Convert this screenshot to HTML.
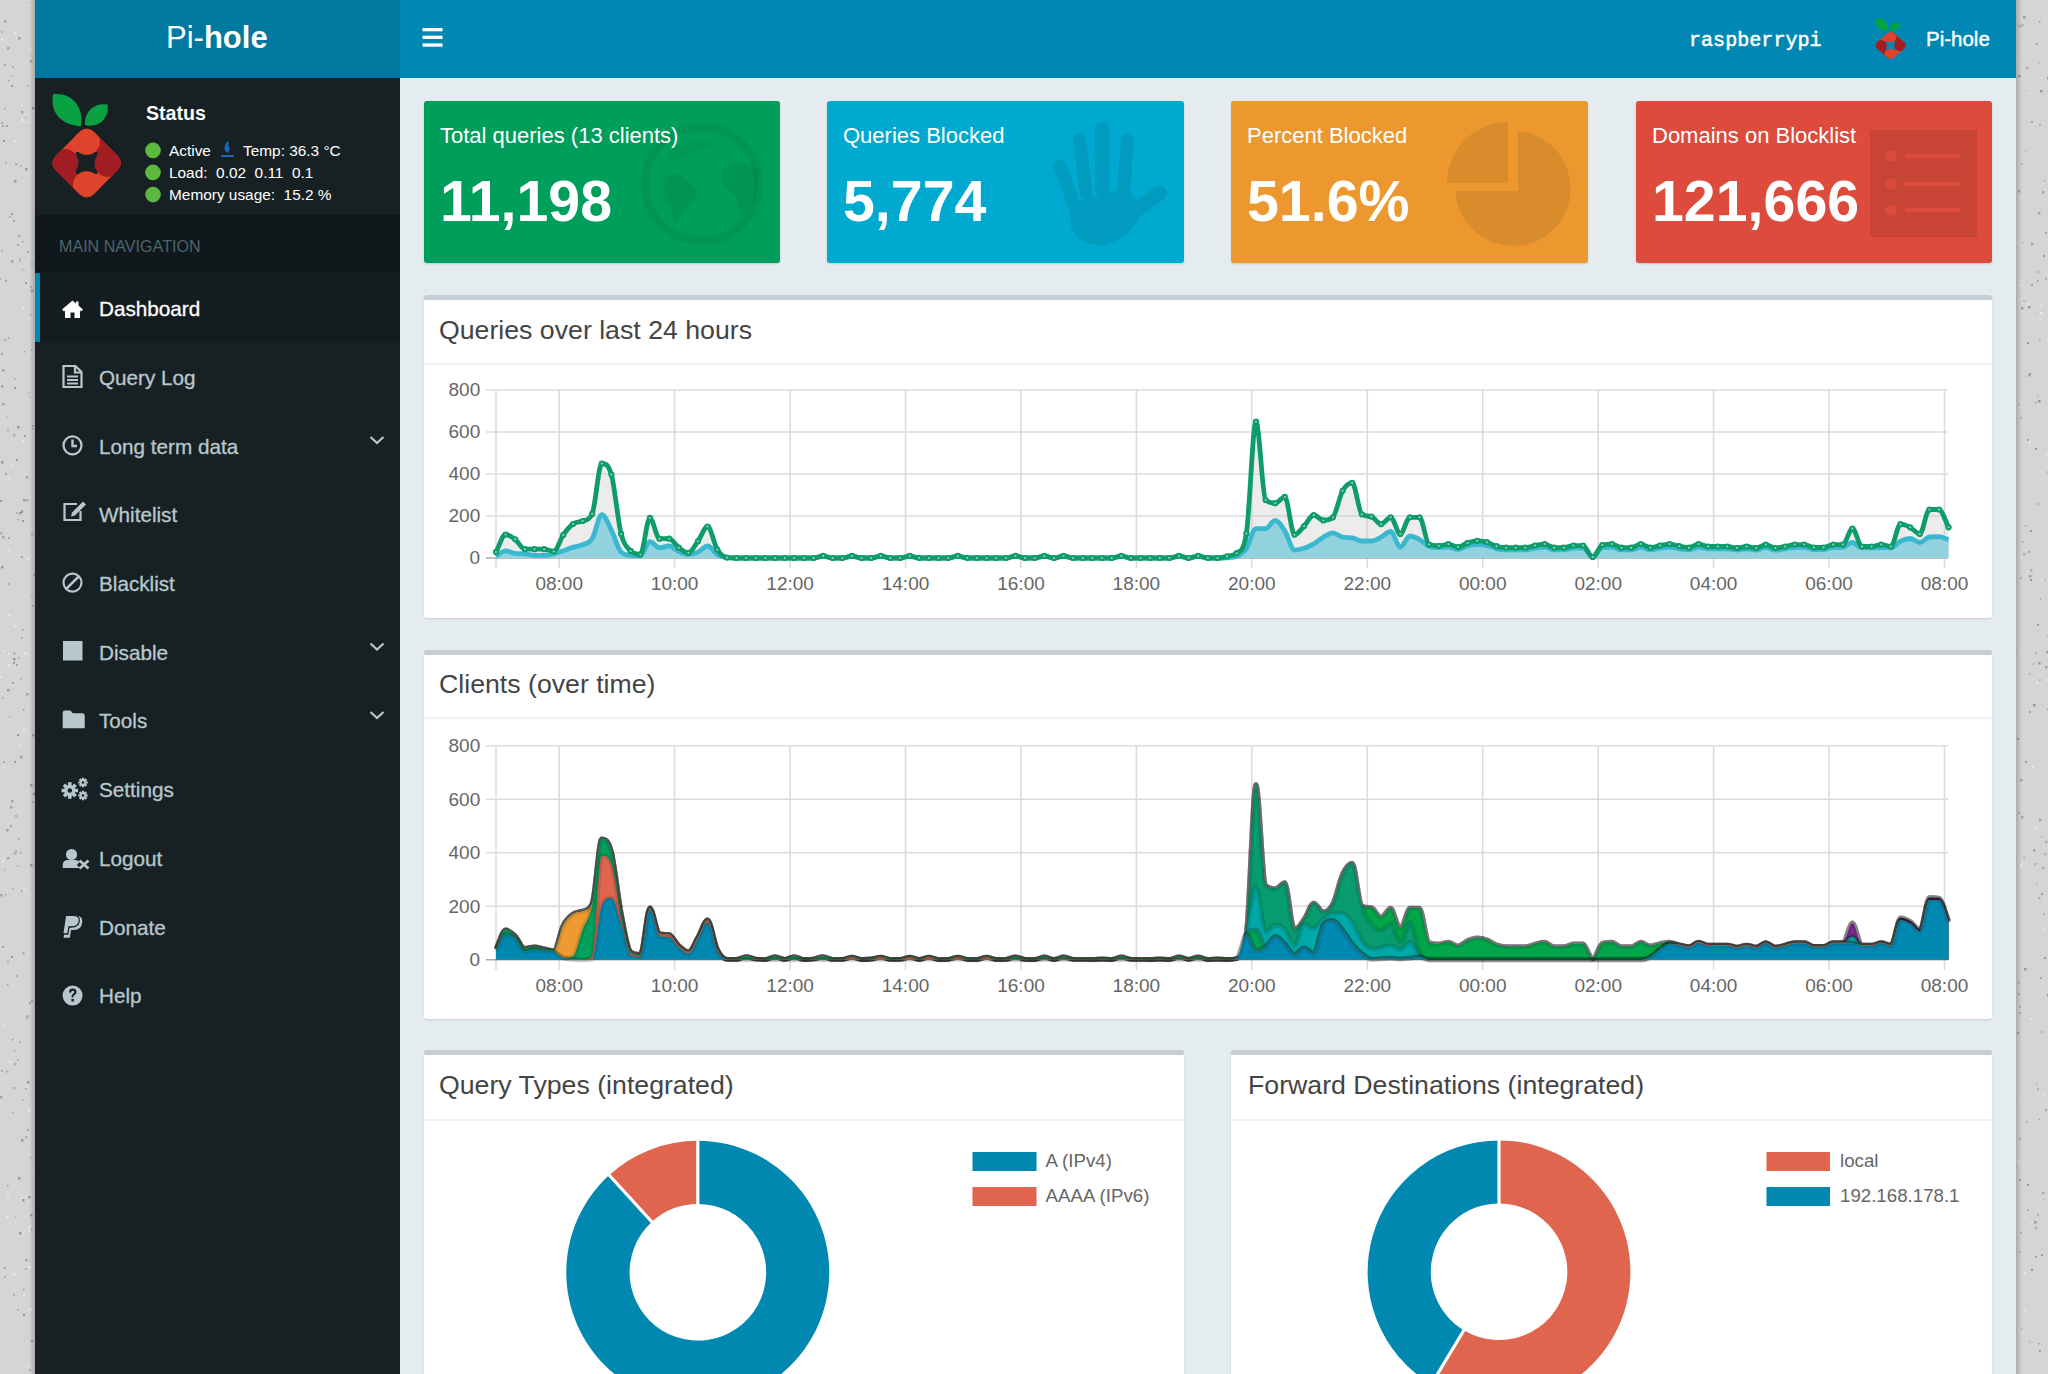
<!DOCTYPE html>
<html><head><meta charset="utf-8">
<style>
html,body{margin:0;padding:0;}
body{width:2048px;height:1374px;overflow:hidden;position:relative;background:#d5d6d4;font-family:"Liberation Sans",sans-serif;}
.a{position:absolute;}
.t{position:absolute;line-height:1;white-space:nowrap;}
#logo{left:35px;top:0;width:365px;height:78px;background:#00789f;}
#nav{left:400px;top:0;width:1616px;height:78px;background:#0087b3;}
#side{left:35px;top:78px;width:365px;height:1296px;background:#172123;}
#content{left:400px;top:78px;width:1616px;height:1296px;background:#e5ecf0;}
.navhdr{left:35px;top:215px;width:365px;height:58px;background:#10181b;}
.active{left:35px;top:273px;width:365px;height:69px;background:#141c1f;}
.activebar{left:35px;top:273px;width:5px;height:69px;background:#0088b4;}
.mi{font-size:20.7px;color:#b8c7ce;left:99px;-webkit-text-stroke:0.3px #b8c7ce;}
.sbox{position:absolute;top:101px;width:356px;height:162px;border-radius:3px;box-shadow:0 1px 2px rgba(0,0,0,0.15);overflow:hidden;}
.stitle{font-size:22px;color:#fff;left:16px;top:23.5px;}
.snum{font-size:57.3px;color:#fff;font-weight:bold;left:16px;top:71.5px;}
.box{position:absolute;background:#fff;border-top:5px solid #c6cdd3;border-radius:3px;box-shadow:0 1px 2px rgba(0,0,0,0.12);}
.btitle{font-size:26.7px;color:#444;}
.bline{position:absolute;height:2px;background:#f1f3f4;}
.ax{font-size:19px;color:#666;}
.leg{font-size:18.7px;color:#666;}
</style></head><body>
<!-- texture -->
<svg class="a" style="left:0;top:0" width="2048" height="1374">
<g><rect x="5" y="894" width="1.5" height="1.5" fill="#a3a5a3"/><rect x="2" y="697" width="1.5" height="1.5" fill="#a3a5a3"/><rect x="2" y="125" width="2.0" height="2.0" fill="#a3a5a3"/><rect x="2021" y="307" width="2.5" height="2.5" fill="#a3a5a3"/><rect x="2029" y="1341" width="1.5" height="1.5" fill="#b0b2b0"/><rect x="5" y="162" width="2.0" height="2.0" fill="#b0b2b0"/><rect x="19" y="258" width="1.5" height="1.5" fill="#a3a5a3"/><rect x="2036" y="682" width="2.5" height="2.5" fill="#e4e5e4"/><rect x="2031" y="1269" width="2.0" height="2.0" fill="#9a9c9a"/><rect x="6" y="1071" width="1.5" height="1.5" fill="#9a9c9a"/><rect x="29" y="1002" width="2.0" height="2.0" fill="#a3a5a3"/><rect x="14" y="1040" width="1.5" height="1.5" fill="#e4e5e4"/><rect x="32" y="107" width="2.5" height="2.5" fill="#9a9c9a"/><rect x="12" y="682" width="2.0" height="2.0" fill="#a3a5a3"/><rect x="2046" y="651" width="2.5" height="2.5" fill="#a3a5a3"/><rect x="23" y="889" width="2.5" height="2.5" fill="#e4e5e4"/><rect x="13" y="919" width="1.5" height="1.5" fill="#e4e5e4"/><rect x="20" y="678" width="1.5" height="1.5" fill="#9a9c9a"/><rect x="8" y="537" width="2.0" height="2.0" fill="#a3a5a3"/><rect x="13" y="382" width="1.5" height="1.5" fill="#e4e5e4"/><rect x="2026" y="571" width="2.0" height="2.0" fill="#e4e5e4"/><rect x="2022" y="242" width="1.5" height="1.5" fill="#b0b2b0"/><rect x="27" y="251" width="2.0" height="2.0" fill="#a3a5a3"/><rect x="18" y="838" width="2.0" height="2.0" fill="#b0b2b0"/><rect x="2033" y="849" width="2.5" height="2.5" fill="#a3a5a3"/><rect x="29" y="1308" width="2.5" height="2.5" fill="#e4e5e4"/><rect x="13" y="662" width="2.0" height="2.0" fill="#a3a5a3"/><rect x="32" y="605" width="1.5" height="1.5" fill="#9a9c9a"/><rect x="2020" y="779" width="2.5" height="2.5" fill="#a3a5a3"/><rect x="2036" y="97" width="1.5" height="1.5" fill="#e4e5e4"/><rect x="8" y="477" width="2.0" height="2.0" fill="#e4e5e4"/><rect x="28" y="1365" width="2.0" height="2.0" fill="#e4e5e4"/><rect x="3" y="140" width="2.0" height="2.0" fill="#9a9c9a"/><rect x="23" y="709" width="1.5" height="1.5" fill="#9a9c9a"/><rect x="18" y="37" width="2.5" height="2.5" fill="#9a9c9a"/><rect x="2044" y="957" width="2.0" height="2.0" fill="#9a9c9a"/><rect x="2028" y="306" width="2.5" height="2.5" fill="#9a9c9a"/><rect x="2036" y="1083" width="1.5" height="1.5" fill="#b0b2b0"/><rect x="2040" y="312" width="2.5" height="2.5" fill="#e4e5e4"/><rect x="1" y="38" width="2.0" height="2.0" fill="#e4e5e4"/><rect x="23" y="1314" width="2.0" height="2.0" fill="#9a9c9a"/><rect x="2028" y="303" width="1.5" height="1.5" fill="#e4e5e4"/><rect x="7" y="857" width="2.5" height="2.5" fill="#a3a5a3"/><rect x="22" y="1099" width="1.5" height="1.5" fill="#a3a5a3"/><rect x="2041" y="1031" width="2.0" height="2.0" fill="#b0b2b0"/><rect x="21" y="119" width="2.5" height="2.5" fill="#e4e5e4"/><rect x="25" y="117" width="1.5" height="1.5" fill="#b0b2b0"/><rect x="2018" y="812" width="2.0" height="2.0" fill="#b0b2b0"/><rect x="2035" y="652" width="2.0" height="2.0" fill="#b0b2b0"/><rect x="4" y="20" width="2.5" height="2.5" fill="#a3a5a3"/><rect x="31" y="596" width="1.5" height="1.5" fill="#b0b2b0"/><rect x="7" y="689" width="2.5" height="2.5" fill="#9a9c9a"/><rect x="14" y="180" width="2.5" height="2.5" fill="#9a9c9a"/><rect x="2038" y="1120" width="2.5" height="2.5" fill="#e4e5e4"/><rect x="2044" y="180" width="1.5" height="1.5" fill="#a3a5a3"/><rect x="2041" y="836" width="1.5" height="1.5" fill="#b0b2b0"/><rect x="20" y="165" width="1.5" height="1.5" fill="#9a9c9a"/><rect x="2033" y="663" width="1.5" height="1.5" fill="#a3a5a3"/><rect x="9" y="1061" width="2.5" height="2.5" fill="#e4e5e4"/><rect x="2041" y="1254" width="2.0" height="2.0" fill="#9a9c9a"/><rect x="2033" y="704" width="2.5" height="2.5" fill="#9a9c9a"/><rect x="18" y="657" width="1.5" height="1.5" fill="#9a9c9a"/><rect x="2045" y="278" width="2.0" height="2.0" fill="#b0b2b0"/><rect x="13" y="434" width="2.5" height="2.5" fill="#b0b2b0"/><rect x="7" y="416" width="1.5" height="1.5" fill="#b0b2b0"/><rect x="2037" y="503" width="2.0" height="2.0" fill="#b0b2b0"/><rect x="2024" y="1309" width="2.0" height="2.0" fill="#e4e5e4"/><rect x="22" y="307" width="2.5" height="2.5" fill="#e4e5e4"/><rect x="2030" y="579" width="2.0" height="2.0" fill="#9a9c9a"/><rect x="12" y="464" width="2.0" height="2.0" fill="#e4e5e4"/><rect x="2029" y="711" width="2.0" height="2.0" fill="#a3a5a3"/><rect x="30" y="314" width="1.5" height="1.5" fill="#a3a5a3"/><rect x="1" y="1070" width="2.0" height="2.0" fill="#b0b2b0"/><rect x="2043" y="929" width="2.0" height="2.0" fill="#e4e5e4"/><rect x="30" y="784" width="2.5" height="2.5" fill="#9a9c9a"/><rect x="2" y="946" width="2.0" height="2.0" fill="#a3a5a3"/><rect x="1" y="122" width="2.0" height="2.0" fill="#a3a5a3"/><rect x="2024" y="363" width="1.5" height="1.5" fill="#e4e5e4"/><rect x="33" y="574" width="2.0" height="2.0" fill="#b0b2b0"/><rect x="23" y="1289" width="1.5" height="1.5" fill="#9a9c9a"/><rect x="7" y="429" width="2.0" height="2.0" fill="#b0b2b0"/><rect x="17" y="244" width="2.0" height="2.0" fill="#a3a5a3"/><rect x="2018" y="25" width="2.5" height="2.5" fill="#b0b2b0"/><rect x="8" y="614" width="2.5" height="2.5" fill="#e4e5e4"/><rect x="2034" y="1221" width="2.5" height="2.5" fill="#9a9c9a"/><rect x="2047" y="471" width="2.5" height="2.5" fill="#b0b2b0"/><rect x="11" y="75" width="1.5" height="1.5" fill="#a3a5a3"/><rect x="24" y="351" width="1.5" height="1.5" fill="#a3a5a3"/><rect x="28" y="1196" width="2.5" height="2.5" fill="#9a9c9a"/><rect x="2038" y="62" width="1.5" height="1.5" fill="#b0b2b0"/><rect x="0" y="500" width="2.0" height="2.0" fill="#9a9c9a"/><rect x="32" y="425" width="2.0" height="2.0" fill="#b0b2b0"/><rect x="13" y="652" width="2.5" height="2.5" fill="#b0b2b0"/><rect x="26" y="125" width="1.5" height="1.5" fill="#b0b2b0"/><rect x="1" y="31" width="2.0" height="2.0" fill="#b0b2b0"/><rect x="32" y="1172" width="1.5" height="1.5" fill="#e4e5e4"/><rect x="2039" y="679" width="2.0" height="2.0" fill="#b0b2b0"/><rect x="28" y="1226" width="2.5" height="2.5" fill="#e4e5e4"/><rect x="2042" y="191" width="2.5" height="2.5" fill="#a3a5a3"/><rect x="2035" y="1227" width="2.5" height="2.5" fill="#b0b2b0"/><rect x="1" y="875" width="1.5" height="1.5" fill="#e4e5e4"/><rect x="2034" y="863" width="2.5" height="2.5" fill="#b0b2b0"/><rect x="0" y="1096" width="2.5" height="2.5" fill="#a3a5a3"/><rect x="2019" y="1012" width="2.0" height="2.0" fill="#a3a5a3"/><rect x="2024" y="1039" width="1.5" height="1.5" fill="#e4e5e4"/><rect x="13" y="658" width="2.5" height="2.5" fill="#9a9c9a"/><rect x="2036" y="883" width="1.5" height="1.5" fill="#b0b2b0"/><rect x="22" y="952" width="2.5" height="2.5" fill="#b0b2b0"/><rect x="2" y="369" width="2.5" height="2.5" fill="#a3a5a3"/><rect x="2038" y="400" width="2.5" height="2.5" fill="#9a9c9a"/><rect x="15" y="163" width="2.5" height="2.5" fill="#b0b2b0"/><rect x="3" y="650" width="2.0" height="2.0" fill="#e4e5e4"/><rect x="17" y="1367" width="2.0" height="2.0" fill="#e4e5e4"/><rect x="31" y="290" width="2.5" height="2.5" fill="#a3a5a3"/><rect x="17" y="1309" width="1.5" height="1.5" fill="#9a9c9a"/><rect x="2039" y="318" width="2.0" height="2.0" fill="#e4e5e4"/><rect x="0" y="676" width="2.0" height="2.0" fill="#e4e5e4"/><rect x="5" y="473" width="2.0" height="2.0" fill="#a3a5a3"/><rect x="2017" y="1032" width="2.0" height="2.0" fill="#a3a5a3"/><rect x="2023" y="16" width="2.5" height="2.5" fill="#9a9c9a"/><rect x="2" y="536" width="2.5" height="2.5" fill="#a3a5a3"/><rect x="14" y="378" width="1.5" height="1.5" fill="#9a9c9a"/><rect x="28" y="392" width="1.5" height="1.5" fill="#b0b2b0"/><rect x="2031" y="434" width="2.0" height="2.0" fill="#e4e5e4"/><rect x="2042" y="867" width="2.5" height="2.5" fill="#b0b2b0"/><rect x="2019" y="1006" width="2.0" height="2.0" fill="#b0b2b0"/><rect x="2026" y="67" width="2.5" height="2.5" fill="#b0b2b0"/><rect x="14" y="387" width="2.0" height="2.0" fill="#9a9c9a"/><rect x="8" y="664" width="2.5" height="2.5" fill="#e4e5e4"/><rect x="21" y="103" width="2.5" height="2.5" fill="#e4e5e4"/><rect x="2031" y="457" width="2.0" height="2.0" fill="#e4e5e4"/><rect x="6" y="125" width="2.0" height="2.0" fill="#a3a5a3"/><rect x="12" y="1112" width="1.5" height="1.5" fill="#a3a5a3"/><rect x="2030" y="569" width="2.5" height="2.5" fill="#b0b2b0"/><rect x="11" y="85" width="2.0" height="2.0" fill="#9a9c9a"/><rect x="17" y="865" width="1.5" height="1.5" fill="#a3a5a3"/><rect x="8" y="549" width="2.0" height="2.0" fill="#e4e5e4"/><rect x="2043" y="1199" width="1.5" height="1.5" fill="#b0b2b0"/><rect x="23" y="1231" width="2.0" height="2.0" fill="#e4e5e4"/><rect x="13" y="1273" width="2.5" height="2.5" fill="#e4e5e4"/><rect x="2025" y="150" width="1.5" height="1.5" fill="#b0b2b0"/><rect x="23" y="1294" width="2.5" height="2.5" fill="#e4e5e4"/><rect x="26" y="2" width="1.5" height="1.5" fill="#b0b2b0"/><rect x="2018" y="982" width="1.5" height="1.5" fill="#9a9c9a"/><rect x="14" y="1050" width="1.5" height="1.5" fill="#a3a5a3"/><rect x="31" y="263" width="2.0" height="2.0" fill="#b0b2b0"/><rect x="2017" y="738" width="2.0" height="2.0" fill="#9a9c9a"/><rect x="2037" y="1214" width="2.0" height="2.0" fill="#b0b2b0"/><rect x="1" y="566" width="2.5" height="2.5" fill="#9a9c9a"/><rect x="6" y="1216" width="2.5" height="2.5" fill="#e4e5e4"/><rect x="8" y="583" width="2.0" height="2.0" fill="#b0b2b0"/><rect x="23" y="987" width="2.0" height="2.0" fill="#e4e5e4"/><rect x="26" y="1016" width="2.5" height="2.5" fill="#a3a5a3"/><rect x="32" y="428" width="1.5" height="1.5" fill="#b0b2b0"/><rect x="9" y="1222" width="1.5" height="1.5" fill="#e4e5e4"/><rect x="2045" y="666" width="2.5" height="2.5" fill="#a3a5a3"/><rect x="2022" y="541" width="1.5" height="1.5" fill="#a3a5a3"/><rect x="2021" y="71" width="1.5" height="1.5" fill="#b0b2b0"/><rect x="30" y="1214" width="2.5" height="2.5" fill="#a3a5a3"/><rect x="2046" y="452" width="1.5" height="1.5" fill="#e4e5e4"/><rect x="22" y="520" width="2.0" height="2.0" fill="#9a9c9a"/><rect x="4" y="108" width="1.5" height="1.5" fill="#9a9c9a"/><rect x="29" y="771" width="1.5" height="1.5" fill="#e4e5e4"/><rect x="27" y="1129" width="2.0" height="2.0" fill="#a3a5a3"/><rect x="16" y="512" width="2.0" height="2.0" fill="#b0b2b0"/><rect x="24" y="652" width="2.5" height="2.5" fill="#e4e5e4"/><rect x="21" y="556" width="2.0" height="2.0" fill="#a3a5a3"/><rect x="27" y="85" width="1.5" height="1.5" fill="#a3a5a3"/><rect x="2028" y="374" width="2.5" height="2.5" fill="#a3a5a3"/><rect x="24" y="435" width="2.0" height="2.0" fill="#9a9c9a"/><rect x="25" y="1259" width="2.5" height="2.5" fill="#a3a5a3"/><rect x="8" y="653" width="2.0" height="2.0" fill="#e4e5e4"/><rect x="2045" y="1120" width="1.5" height="1.5" fill="#e4e5e4"/><rect x="26" y="1015" width="2.5" height="2.5" fill="#b0b2b0"/><rect x="2027" y="439" width="2.0" height="2.0" fill="#a3a5a3"/><rect x="13" y="220" width="2.0" height="2.0" fill="#a3a5a3"/><rect x="2032" y="748" width="1.5" height="1.5" fill="#e4e5e4"/><rect x="2048" y="364" width="1.5" height="1.5" fill="#b0b2b0"/><rect x="16" y="975" width="2.0" height="2.0" fill="#b0b2b0"/><rect x="14" y="852" width="2.5" height="2.5" fill="#b0b2b0"/><rect x="2043" y="913" width="1.5" height="1.5" fill="#9a9c9a"/><rect x="19" y="512" width="2.5" height="2.5" fill="#9a9c9a"/><rect x="8" y="337" width="1.5" height="1.5" fill="#9a9c9a"/><rect x="2035" y="448" width="2.0" height="2.0" fill="#9a9c9a"/><rect x="2033" y="318" width="1.5" height="1.5" fill="#e4e5e4"/><rect x="2020" y="652" width="1.5" height="1.5" fill="#e4e5e4"/><rect x="2018" y="404" width="1.5" height="1.5" fill="#a3a5a3"/><rect x="32" y="801" width="1.5" height="1.5" fill="#9a9c9a"/><rect x="6" y="829" width="2.5" height="2.5" fill="#a3a5a3"/><rect x="20" y="852" width="1.5" height="1.5" fill="#a3a5a3"/><rect x="5" y="280" width="2.0" height="2.0" fill="#a3a5a3"/><rect x="2037" y="280" width="1.5" height="1.5" fill="#9a9c9a"/><rect x="12" y="853" width="1.5" height="1.5" fill="#b0b2b0"/><rect x="16" y="664" width="2.0" height="2.0" fill="#a3a5a3"/><rect x="2038" y="212" width="2.5" height="2.5" fill="#a3a5a3"/><rect x="2029" y="373" width="2.0" height="2.0" fill="#9a9c9a"/><rect x="2" y="1024" width="2.0" height="2.0" fill="#e4e5e4"/><rect x="29" y="1369" width="2.0" height="2.0" fill="#b0b2b0"/><rect x="13" y="1294" width="2.0" height="2.0" fill="#b0b2b0"/><rect x="27" y="558" width="2.0" height="2.0" fill="#e4e5e4"/><rect x="2021" y="71" width="1.5" height="1.5" fill="#e4e5e4"/><rect x="21" y="510" width="2.5" height="2.5" fill="#b0b2b0"/><rect x="9" y="716" width="1.5" height="1.5" fill="#a3a5a3"/><rect x="25" y="1088" width="1.5" height="1.5" fill="#9a9c9a"/><rect x="31" y="1340" width="2.0" height="2.0" fill="#9a9c9a"/><rect x="31" y="533" width="2.5" height="2.5" fill="#b0b2b0"/><rect x="2044" y="853" width="2.5" height="2.5" fill="#b0b2b0"/><rect x="2023" y="300" width="2.0" height="2.0" fill="#b0b2b0"/><rect x="4" y="339" width="2.5" height="2.5" fill="#b0b2b0"/><rect x="19" y="1041" width="1.5" height="1.5" fill="#9a9c9a"/><rect x="20" y="756" width="2.5" height="2.5" fill="#9a9c9a"/><rect x="2027" y="342" width="2.0" height="2.0" fill="#9a9c9a"/><rect x="14" y="32" width="2.5" height="2.5" fill="#e4e5e4"/><rect x="15" y="850" width="2.0" height="2.0" fill="#b0b2b0"/><rect x="2029" y="92" width="2.0" height="2.0" fill="#e4e5e4"/><rect x="26" y="693" width="2.5" height="2.5" fill="#a3a5a3"/><rect x="4" y="1267" width="2.0" height="2.0" fill="#a3a5a3"/><rect x="17" y="519" width="1.5" height="1.5" fill="#a3a5a3"/><rect x="2048" y="1006" width="1.5" height="1.5" fill="#b0b2b0"/><rect x="29" y="396" width="1.5" height="1.5" fill="#b0b2b0"/><rect x="12" y="1039" width="1.5" height="1.5" fill="#9a9c9a"/><rect x="2026" y="1121" width="1.5" height="1.5" fill="#9a9c9a"/><rect x="30" y="286" width="2.0" height="2.0" fill="#b0b2b0"/><rect x="1" y="250" width="1.5" height="1.5" fill="#9a9c9a"/><rect x="2045" y="232" width="2.0" height="2.0" fill="#a3a5a3"/><rect x="2019" y="1179" width="2.0" height="2.0" fill="#a3a5a3"/><rect x="18" y="1177" width="2.5" height="2.5" fill="#9a9c9a"/><rect x="33" y="793" width="2.0" height="2.0" fill="#9a9c9a"/><rect x="2031" y="243" width="2.5" height="2.5" fill="#a3a5a3"/><rect x="17" y="426" width="2.5" height="2.5" fill="#9a9c9a"/><rect x="2040" y="305" width="2.0" height="2.0" fill="#e4e5e4"/><rect x="12" y="66" width="2.0" height="2.0" fill="#b0b2b0"/><rect x="2018" y="75" width="2.5" height="2.5" fill="#9a9c9a"/><rect x="17" y="734" width="2.0" height="2.0" fill="#9a9c9a"/><rect x="2023" y="857" width="2.0" height="2.0" fill="#b0b2b0"/><rect x="31" y="335" width="1.5" height="1.5" fill="#e4e5e4"/><rect x="21" y="1197" width="2.0" height="2.0" fill="#e4e5e4"/><rect x="2047" y="77" width="2.5" height="2.5" fill="#9a9c9a"/><rect x="2035" y="827" width="2.5" height="2.5" fill="#e4e5e4"/><rect x="30" y="60" width="2.5" height="2.5" fill="#a3a5a3"/><rect x="8" y="80" width="1.5" height="1.5" fill="#a3a5a3"/><rect x="2037" y="271" width="2.0" height="2.0" fill="#b0b2b0"/><rect x="21" y="890" width="2.0" height="2.0" fill="#b0b2b0"/><rect x="2" y="860" width="2.5" height="2.5" fill="#e4e5e4"/><rect x="2017" y="1160" width="2.5" height="2.5" fill="#e4e5e4"/><rect x="22" y="241" width="1.5" height="1.5" fill="#9a9c9a"/><rect x="1" y="461" width="2.5" height="2.5" fill="#9a9c9a"/><rect x="2025" y="761" width="2.0" height="2.0" fill="#9a9c9a"/><rect x="31" y="1229" width="1.5" height="1.5" fill="#a3a5a3"/><rect x="30" y="1157" width="1.5" height="1.5" fill="#b0b2b0"/><rect x="2027" y="1209" width="2.0" height="2.0" fill="#b0b2b0"/><rect x="28" y="1266" width="2.5" height="2.5" fill="#e4e5e4"/><rect x="18" y="9" width="1.5" height="1.5" fill="#e4e5e4"/><rect x="2024" y="1216" width="1.5" height="1.5" fill="#e4e5e4"/><rect x="2019" y="1251" width="1.5" height="1.5" fill="#a3a5a3"/><rect x="4" y="1276" width="2.0" height="2.0" fill="#b0b2b0"/><rect x="2018" y="190" width="2.5" height="2.5" fill="#a3a5a3"/><rect x="2040" y="90" width="2.5" height="2.5" fill="#9a9c9a"/><rect x="32" y="734" width="2.5" height="2.5" fill="#a3a5a3"/><rect x="2040" y="977" width="2.0" height="2.0" fill="#a3a5a3"/><rect x="7" y="47" width="2.5" height="2.5" fill="#a3a5a3"/><rect x="2037" y="395" width="1.5" height="1.5" fill="#b0b2b0"/><rect x="25" y="282" width="2.0" height="2.0" fill="#9a9c9a"/><rect x="1" y="353" width="2.0" height="2.0" fill="#a3a5a3"/><rect x="2028" y="441" width="2.5" height="2.5" fill="#e4e5e4"/><rect x="2036" y="43" width="2.0" height="2.0" fill="#a3a5a3"/><rect x="26" y="476" width="2.5" height="2.5" fill="#a3a5a3"/><rect x="7" y="1185" width="1.5" height="1.5" fill="#9a9c9a"/><rect x="0" y="278" width="1.5" height="1.5" fill="#a3a5a3"/><rect x="3" y="955" width="1.5" height="1.5" fill="#e4e5e4"/><rect x="2047" y="708" width="2.5" height="2.5" fill="#b0b2b0"/><rect x="7" y="961" width="2.0" height="2.0" fill="#b0b2b0"/><rect x="21" y="111" width="2.5" height="2.5" fill="#a3a5a3"/><rect x="2028" y="551" width="2.0" height="2.0" fill="#a3a5a3"/><rect x="21" y="511" width="2.0" height="2.0" fill="#9a9c9a"/><rect x="18" y="235" width="2.5" height="2.5" fill="#b0b2b0"/><rect x="2021" y="816" width="2.5" height="2.5" fill="#a3a5a3"/><rect x="11" y="213" width="2.0" height="2.0" fill="#9a9c9a"/><rect x="14" y="1063" width="2.5" height="2.5" fill="#b0b2b0"/><rect x="15" y="1216" width="1.5" height="1.5" fill="#b0b2b0"/><rect x="25" y="1136" width="2.5" height="2.5" fill="#b0b2b0"/><rect x="2047" y="994" width="2.5" height="2.5" fill="#9a9c9a"/><rect x="11" y="260" width="2.5" height="2.5" fill="#a3a5a3"/><rect x="22" y="269" width="1.5" height="1.5" fill="#b0b2b0"/><rect x="2040" y="598" width="1.5" height="1.5" fill="#a3a5a3"/><rect x="2020" y="284" width="2.0" height="2.0" fill="#e4e5e4"/><rect x="13" y="1087" width="2.5" height="2.5" fill="#b0b2b0"/><rect x="21" y="637" width="1.5" height="1.5" fill="#9a9c9a"/><rect x="2030" y="1018" width="2.0" height="2.0" fill="#e4e5e4"/><rect x="2038" y="897" width="2.5" height="2.5" fill="#b0b2b0"/><rect x="2037" y="624" width="2.0" height="2.0" fill="#9a9c9a"/><rect x="2020" y="577" width="2.0" height="2.0" fill="#b0b2b0"/><rect x="14" y="625" width="2.5" height="2.5" fill="#e4e5e4"/><rect x="22" y="1199" width="2.5" height="2.5" fill="#9a9c9a"/><rect x="2029" y="673" width="1.5" height="1.5" fill="#a3a5a3"/><rect x="7" y="984" width="1.5" height="1.5" fill="#9a9c9a"/><rect x="19" y="743" width="2.5" height="2.5" fill="#e4e5e4"/><rect x="21" y="1139" width="2.5" height="2.5" fill="#9a9c9a"/><rect x="31" y="289" width="2.5" height="2.5" fill="#b0b2b0"/><rect x="25" y="168" width="2.5" height="2.5" fill="#9a9c9a"/><rect x="2025" y="525" width="1.5" height="1.5" fill="#a3a5a3"/><rect x="30" y="864" width="2.5" height="2.5" fill="#9a9c9a"/><rect x="2020" y="417" width="2.0" height="2.0" fill="#b0b2b0"/><rect x="2047" y="635" width="1.5" height="1.5" fill="#b0b2b0"/><rect x="2019" y="1097" width="1.5" height="1.5" fill="#e4e5e4"/><rect x="2039" y="1119" width="1.5" height="1.5" fill="#9a9c9a"/><rect x="2043" y="1093" width="2.0" height="2.0" fill="#e4e5e4"/><rect x="2041" y="893" width="2.0" height="2.0" fill="#9a9c9a"/><rect x="2024" y="968" width="2.5" height="2.5" fill="#9a9c9a"/><rect x="2038" y="662" width="2.5" height="2.5" fill="#9a9c9a"/><rect x="22" y="440" width="2.0" height="2.0" fill="#e4e5e4"/><rect x="2020" y="1232" width="1.5" height="1.5" fill="#9a9c9a"/><rect x="2019" y="1138" width="2.0" height="2.0" fill="#b0b2b0"/><rect x="11" y="800" width="2.5" height="2.5" fill="#a3a5a3"/><rect x="2" y="403" width="2.5" height="2.5" fill="#a3a5a3"/><rect x="2043" y="255" width="2.0" height="2.0" fill="#9a9c9a"/><rect x="2023" y="553" width="2.5" height="2.5" fill="#b0b2b0"/><rect x="2038" y="1343" width="1.5" height="1.5" fill="#9a9c9a"/><rect x="23" y="729" width="2.5" height="2.5" fill="#e4e5e4"/><rect x="2021" y="163" width="2.0" height="2.0" fill="#b0b2b0"/><rect x="2032" y="766" width="2.0" height="2.0" fill="#e4e5e4"/><rect x="2039" y="339" width="1.5" height="1.5" fill="#a3a5a3"/><rect x="11" y="956" width="2.0" height="2.0" fill="#9a9c9a"/><rect x="2029" y="575" width="2.5" height="2.5" fill="#a3a5a3"/><rect x="12" y="888" width="1.5" height="1.5" fill="#a3a5a3"/><rect x="2046" y="454" width="1.5" height="1.5" fill="#e4e5e4"/><rect x="30" y="47" width="2.5" height="2.5" fill="#e4e5e4"/><rect x="2027" y="1184" width="2.0" height="2.0" fill="#9a9c9a"/><rect x="17" y="1059" width="1.5" height="1.5" fill="#9a9c9a"/><rect x="14" y="761" width="2.0" height="2.0" fill="#9a9c9a"/><rect x="16" y="459" width="2.0" height="2.0" fill="#9a9c9a"/><rect x="2037" y="1088" width="2.0" height="2.0" fill="#b0b2b0"/><rect x="10" y="806" width="2.5" height="2.5" fill="#a3a5a3"/><rect x="2018" y="993" width="2.0" height="2.0" fill="#a3a5a3"/><rect x="4" y="64" width="2.0" height="2.0" fill="#a3a5a3"/><rect x="2045" y="841" width="2.5" height="2.5" fill="#b0b2b0"/><rect x="2039" y="819" width="2.5" height="2.5" fill="#a3a5a3"/><rect x="22" y="629" width="1.5" height="1.5" fill="#a3a5a3"/><rect x="2044" y="579" width="1.5" height="1.5" fill="#a3a5a3"/><rect x="27" y="1081" width="2.5" height="2.5" fill="#9a9c9a"/><rect x="2023" y="47" width="1.5" height="1.5" fill="#e4e5e4"/><rect x="2035" y="1256" width="2.0" height="2.0" fill="#a3a5a3"/><rect x="2041" y="579" width="2.5" height="2.5" fill="#e4e5e4"/><rect x="0" y="532" width="2.5" height="2.5" fill="#b0b2b0"/><rect x="14" y="140" width="2.5" height="2.5" fill="#e4e5e4"/><rect x="5" y="21" width="1.5" height="1.5" fill="#a3a5a3"/><rect x="2021" y="1328" width="1.5" height="1.5" fill="#b0b2b0"/><rect x="2021" y="24" width="2.5" height="2.5" fill="#b0b2b0"/><rect x="25" y="1268" width="2.0" height="2.0" fill="#b0b2b0"/><rect x="2020" y="864" width="2.5" height="2.5" fill="#e4e5e4"/><rect x="31" y="349" width="1.5" height="1.5" fill="#a3a5a3"/><rect x="0" y="894" width="2.5" height="2.5" fill="#a3a5a3"/><rect x="10" y="825" width="2.0" height="2.0" fill="#a3a5a3"/><rect x="31" y="1000" width="2.0" height="2.0" fill="#b0b2b0"/><rect x="26" y="499" width="2.5" height="2.5" fill="#b0b2b0"/><rect x="2030" y="530" width="2.0" height="2.0" fill="#9a9c9a"/><rect x="2035" y="402" width="1.5" height="1.5" fill="#9a9c9a"/><rect x="2039" y="21" width="1.5" height="1.5" fill="#9a9c9a"/><rect x="2047" y="338" width="2.0" height="2.0" fill="#e4e5e4"/><rect x="2045" y="1109" width="2.0" height="2.0" fill="#a3a5a3"/><rect x="9" y="216" width="1.5" height="1.5" fill="#9a9c9a"/><rect x="2042" y="1192" width="2.5" height="2.5" fill="#b0b2b0"/><rect x="28" y="1109" width="2.5" height="2.5" fill="#e4e5e4"/><rect x="3" y="761" width="2.0" height="2.0" fill="#b0b2b0"/><rect x="2039" y="1350" width="2.0" height="2.0" fill="#a3a5a3"/><rect x="2031" y="284" width="2.0" height="2.0" fill="#a3a5a3"/><rect x="2031" y="121" width="2.0" height="2.0" fill="#a3a5a3"/><rect x="19" y="1232" width="2.5" height="2.5" fill="#9a9c9a"/><rect x="19" y="260" width="1.5" height="1.5" fill="#a3a5a3"/><rect x="23" y="499" width="2.5" height="2.5" fill="#9a9c9a"/><rect x="17" y="205" width="1.5" height="1.5" fill="#e4e5e4"/><rect x="4" y="869" width="1.5" height="1.5" fill="#b0b2b0"/><rect x="1" y="385" width="2.5" height="2.5" fill="#a3a5a3"/><rect x="7" y="1196" width="2.5" height="2.5" fill="#e4e5e4"/><rect x="2024" y="1272" width="2.0" height="2.0" fill="#e4e5e4"/><rect x="15" y="815" width="2.5" height="2.5" fill="#b0b2b0"/><rect x="1" y="276" width="1.5" height="1.5" fill="#e4e5e4"/><rect x="2" y="766" width="2.5" height="2.5" fill="#e4e5e4"/><rect x="28" y="1229" width="2.5" height="2.5" fill="#e4e5e4"/><rect x="2039" y="124" width="2.0" height="2.0" fill="#b0b2b0"/></g>
</svg>
<div class="a" style="left:29px;top:0;width:6px;height:1374px;background:linear-gradient(to right,rgba(0,0,0,0),rgba(0,0,0,0.2));"></div>
<div class="a" style="left:2016px;top:0;width:6px;height:1374px;background:linear-gradient(to left,rgba(0,0,0,0),rgba(0,0,0,0.2));"></div>
<div id="logo" class="a"></div>
<div id="nav" class="a"></div>
<div id="side" class="a"></div>
<div id="content" class="a"></div>

<!-- header -->
<div class="t" style="left:166px;top:21.7px;font-size:31px;color:#fff;">Pi-<b>hole</b></div>
<svg class="a" style="left:422px;top:28px" width="22" height="19"><rect x="0.5" y="0" width="20" height="3.3" fill="#fff"/><rect x="0.5" y="7.7" width="20" height="3.3" fill="#fff"/><rect x="0.5" y="15.4" width="20" height="3.3" fill="#fff"/></svg>
<div class="t" style="left:1689px;top:30.7px;font-size:20.1px;color:#fff;font-family:'Liberation Mono',monospace;-webkit-text-stroke:0.5px #fff;">raspberrypi</div>
<svg class="a" style="left:1872px;top:16px;color:#0087b3" width="38" height="46" viewBox="0 0 85 117" preserveAspectRatio="none">
 <use href="#pilogo"/>
</svg>
<div class="t" style="left:1926px;top:28.5px;font-size:20.5px;color:#fff;-webkit-text-stroke:0.4px #fff;">Pi-hole</div>

<!-- sidebar user panel -->
<svg class="a" style="left:45px;top:88px;color:#172123" width="85" height="117" viewBox="0 0 85 117">
 <defs>
  <g id="pilogo">
   <clipPath id="dia"><path d="M33.7 44.8 Q41.7 36.8 49.7 44.8 L71.9 67 Q79.9 75 71.9 83 L49.7 105.2 Q41.7 113.2 33.7 105.2 L11.5 83 Q3.5 75 11.5 67 Z"/></clipPath>
   <g clip-path="url(#dia)">
    <rect x="0" y="30" width="85" height="90" fill="#e0432c"/>
    <path d="M41.7 30 L90 75 L41.7 75 Z" fill="#a21d23"/>
    <path d="M41.7 120 L-10 75 L41.7 75 Z" fill="#a21d23"/>
    <rect x="31" y="64" width="21.4" height="22" fill="currentColor"/>
    <circle cx="41.7" cy="53.5" r="13.3" fill="#e0432c"/>
    <circle cx="63" cy="75.5" r="13.5" fill="#a21d23"/>
    <circle cx="41.7" cy="97" r="13.8" fill="#e0432c"/>
    <circle cx="20" cy="74.3" r="13.4" fill="#a21d23"/>
   </g>
   <path d="M8 6.3 C26 4 39 18 36 38.3 C17 37 5 26 8 6.3 Z" fill="#0aa143"/>
   <path d="M40 37.3 C39 22 51 14.5 62.6 16.6 C64 31 54 40 40 37.3 Z" fill="#0aa143"/>
  </g>
 </defs>
 <use href="#pilogo"/>
</svg>
<div class="t" style="left:146px;top:104.4px;font-size:19.6px;font-weight:bold;color:#fff;">Status</div>
<svg class="a" style="left:144px;top:141px" width="18" height="62"><circle cx="9" cy="9.4" r="7.8" fill="#5db840"/><circle cx="9" cy="31.4" r="7.8" fill="#5db840"/><circle cx="9" cy="53.6" r="7.8" fill="#5db840"/></svg>
<div class="t" style="left:169px;top:142.8px;font-size:15.4px;color:#fff;">Active</div>
<svg class="a" style="left:219px;top:140px" width="16" height="18"><path d="M9 1 C4 6 5 10 8 13 C11 11 12 8 9 6 C10 4 10 3 9 1Z" fill="#1a66b8"/><rect x="2" y="15" width="13" height="2" fill="#1a66b8"/></svg>
<div class="t" style="left:243px;top:142.8px;font-size:15.4px;color:#fff;">Temp: 36.3 °C</div>
<div class="t" style="left:169px;top:164.8px;font-size:15.4px;color:#fff;">Load:&nbsp; 0.02&nbsp; 0.11&nbsp; 0.1</div>
<div class="t" style="left:169px;top:186.8px;font-size:15.4px;color:#fff;">Memory usage:&nbsp; 15.2 %</div>

<!-- nav header -->
<div class="a navhdr"></div>
<div class="t" style="left:59px;top:237.5px;font-size:16.1px;color:#4b646f;">MAIN NAVIGATION</div>
<div class="a active"></div>
<div class="a activebar"></div>

<!-- menu -->
<div class="t mi" style="top:299.2px;color:#fff;-webkit-text-stroke:0.3px #fff;">Dashboard</div>
<div class="t mi" style="top:367.9px;">Query Log</div>
<div class="t mi" style="top:436.6px;">Long term data</div>
<div class="t mi" style="top:505.3px;">Whitelist</div>
<div class="t mi" style="top:574px;">Blacklist</div>
<div class="t mi" style="top:642.7px;">Disable</div>
<div class="t mi" style="top:711.4px;">Tools</div>
<div class="t mi" style="top:780.1px;">Settings</div>
<div class="t mi" style="top:848.8px;">Logout</div>
<div class="t mi" style="top:917.5px;">Donate</div>
<div class="t mi" style="top:986.2px;">Help</div>

<!-- menu icons -->
<svg class="a" style="left:60px;top:290px" width="32" height="730">
 <g fill="#fff"><path d="M12.5 10.5 L2 19.5 L4 21.5 L5 20.6 V28 H10.5 V22.5 H14.5 V28 H20 V20.6 L21 21.5 L23 19.5 L18.5 15.6 V11.5 H16 V13.4 Z"/></g>
 <g fill="none" stroke="#b8c7ce" stroke-width="2.2">
  <path d="M3.5 76 H15.5 L21.5 82 V97 H3.5 Z"/><path d="M15 76.5 V82.5 H21"/><path d="M7 86.5 H18 M7 90 H18 M7 93.5 H18" stroke-width="1.8"/>
  <circle cx="12.5" cy="155.3" r="9"/><path d="M12.5 149.5 V156 H17" stroke-width="2.4"/>
  <path d="M17 214 H4.5 V230 H20.5 V221"/>
  <circle cx="12.5" cy="292.6" r="9"/><path d="M6.5 298.6 L18.5 286.6" stroke-width="2.6"/>
 </g>
 <g fill="#b8c7ce">
  <path d="M23 211.5 L26 214.5 L15 225.5 L11 226.5 L12 222.5 Z"/>
  <rect x="3" y="351" width="19.5" height="19.5"/>
  <path d="M2.7 423 Q2.7 420.6 5 420.6 H10.5 L12.8 423.2 H22.4 Q24.7 423.2 24.7 425.5 V438.3 H2.7 Z"/>
  <g transform="translate(9.8,500.5)"><circle r="5.6"/><path d="M-1.8 -8.2 H1.8 V8.2 H-1.8Z M-8.2 -1.8 V1.8 H8.2 V-1.8Z" /><path d="M-1.8 -8.2 H1.8 V8.2 H-1.8Z M-8.2 -1.8 V1.8 H8.2 V-1.8Z" transform="rotate(45)"/></g>
  <circle cx="9.8" cy="500.5" r="2.3" fill="#172123"/>
  <g transform="translate(23,492.5)"><circle r="3.2"/><path d="M-1.1 -4.8 H1.1 V4.8 H-1.1Z M-4.8 -1.1 V1.1 H4.8 V-1.1Z"/><path d="M-1.1 -4.8 H1.1 V4.8 H-1.1Z M-4.8 -1.1 V1.1 H4.8 V-1.1Z" transform="rotate(45)"/></g>
  <circle cx="23" cy="492.5" r="1.3" fill="#172123"/>
  <g transform="translate(23,505.5)"><circle r="3.2"/><path d="M-1.1 -4.8 H1.1 V4.8 H-1.1Z M-4.8 -1.1 V1.1 H4.8 V-1.1Z"/><path d="M-1.1 -4.8 H1.1 V4.8 H-1.1Z M-4.8 -1.1 V1.1 H4.8 V-1.1Z" transform="rotate(45)"/></g>
  <circle cx="23" cy="505.5" r="1.3" fill="#172123"/>
  <circle cx="11.5" cy="564.5" r="5.6"/>
  <path d="M2.7 578 V575 Q3 570 8 570 H15 Q18.5 570 19.5 572 L17 575 L19.5 578 Z"/>
  <path d="M19.5 570.5 L28.5 578.5 M28.5 570.5 L19.5 578.5" stroke="#b8c7ce" stroke-width="2.8"/>
  <path d="M7.5 625.4 H15.5 Q23 625.4 22.3 632 Q21.5 640 13.5 640 H11 L9.8 647.7 H3.5 Z"/>
  <path d="M5.5 625.4 H13 Q20 625.4 19.3 631 Q18.5 637 11.5 637 H9 L7.8 644 H2.7 Z" fill="#b8c7ce" stroke="#172123" stroke-width="1.3"/>
  <circle cx="12.6" cy="705.6" r="10"/>
  <path d="M9 702.5 Q9 698.6 12.7 698.6 Q16.5 698.6 16.5 702 Q16.5 704.3 14.2 705.3 Q13.3 705.8 13.3 707.6 H11.5 Q11.3 705 13 703.8 Q14.3 703 14.3 702.2 Q14.3 700.8 12.7 700.8 Q11.2 700.8 11.1 702.5 Z" fill="#172123"/>
  <rect x="11.4" y="709" width="2.5" height="2.5" fill="#172123"/>
 </g>
</svg>
<!-- chevrons -->
<svg class="a" style="left:366px;top:430px" width="22" height="300"><g fill="none" stroke="#b8c7ce" stroke-width="2.2"><path d="M4.5 7 L11 13 L17.5 7"/><path d="M4.5 213.5 L11 219.5 L17.5 213.5"/><path d="M4.5 282 L11 288 L17.5 282"/></g></svg>

<!-- stat boxes -->
<div class="sbox" style="left:424px;background:#009e5b;">
 <svg class="a" style="left:214px;top:18px" width="128" height="128" viewBox="0 0 128 128"><g fill="rgba(0,0,0,0.06)"><path d="M63.8 3.7 A61.2 61.2 0 1 0 63.9 3.7 Z M63.8 11.9 A53 53 0 1 1 63.7 11.9 Z" fill-rule="evenodd"/><path d="M25.8 62 Q30 54 39.5 54.3 Q52 62 59.6 72.3 Q56 82 51.1 87 Q42 96 36.4 108 Q34 96 32.1 87 Q24 78 25.8 62Z"/><path d="M84 53 Q90 44 97.6 42.7 Q112 45 121 51 L118 80 Q110 92 102.9 97.6 Q100 86 97.6 76.5 Q86 72 84 60Z"/><path d="M30 32 Q45 22 60 23 Q70 20 78 24 Q70 30 60 32 Q48 36 38 44 Q32 40 30 32Z" opacity="0.6"/></g></svg>
 <div class="t stitle">Total queries (13 clients)</div>
 <div class="t snum">11,198</div>
</div>
<div class="sbox" style="left:827px;width:357px;background:#00a9d0;">
 <svg class="a" style="left:0;top:0" width="356" height="162"><g opacity="0.075"><g stroke="#000" stroke-linecap="round" fill="none"><path d="M233 65 L248 106" stroke-width="12.8"/><path d="M252.6 39.6 L259.4 92" stroke-width="13.2"/><path d="M275.2 28 V88" stroke-width="14.4"/><path d="M300.6 39.6 L296.3 92" stroke-width="13.2"/><path d="M332.2 92.3 L303 113" stroke-width="15.4"/></g><path d="M242 104 L300 86 L317 110 Q300 140 276 144 Q252 145 244 126 Z" fill="#000"/></g></svg>
 <div class="t stitle">Queries Blocked</div>
 <div class="t snum">5,774</div>
</div>
<div class="sbox" style="left:1231px;width:357px;background:#ec982f;">
 <svg class="a" style="left:0;top:0" width="356" height="162"><g fill="rgba(0,0,0,0.08)"><path d="M287 30 A57.6 57.6 0 1 1 224.5 90 H287 Z"/><path d="M277 82 H216 A61 61 0 0 1 277 21 Z"/></g></svg>
 <div class="t stitle">Percent Blocked</div>
 <div class="t snum">51.6%</div>
</div>
<div class="sbox" style="left:1636px;background:#dc4b3b;">
 <div class="a" style="left:234px;top:29px;width:107px;height:107px;background:rgba(0,0,0,0.09);"></div>
 <svg class="a" style="left:234px;top:29px" width="107" height="107"><g fill="#dc4b3b"><circle cx="21" cy="26" r="5.5"/><circle cx="21" cy="54" r="5.5"/><circle cx="21" cy="80" r="5.5"/><rect x="35" y="24" width="55" height="4"/><rect x="35" y="52" width="55" height="4"/><rect x="35" y="78" width="55" height="4"/></g></svg>
 <div class="t stitle">Domains on Blocklist</div>
 <div class="t snum">121,666</div>
</div>

<!-- box 1 -->
<div class="box" style="left:424px;top:295px;width:1568px;height:318px;"></div>
<div class="t btitle" style="left:439px;top:316.5px;">Queries over last 24 hours</div>
<div class="bline" style="left:424px;top:363px;width:1568px;"></div>
<!-- box 2 -->
<div class="box" style="left:424px;top:650px;width:1568px;height:364px;"></div>
<div class="t btitle" style="left:439px;top:670.5px;">Clients (over time)</div>
<div class="bline" style="left:424px;top:717px;width:1568px;"></div>
<!-- box 3 -->
<div class="box" style="left:424px;top:1050px;width:760px;height:400px;"></div>
<div class="t btitle" style="left:439px;top:1072px;">Query Types (integrated)</div>
<div class="bline" style="left:424px;top:1119px;width:760px;"></div>
<!-- box 4 -->
<div class="box" style="left:1231px;top:1050px;width:761px;height:400px;"></div>
<div class="t btitle" style="left:1248px;top:1072px;">Forward Destinations (integrated)</div>
<div class="bline" style="left:1231px;top:1119px;width:761px;"></div>

<!-- charts svg -->
<svg class="a" style="left:0;top:0" width="2048" height="1374">
 <g stroke="#dcdcdc" stroke-width="1.6" fill="none">
  <path d="M486 390 H1948 M486 432 H1948 M486 474 H1948 M486 516 H1948"/>
  <path d="M496 390 V568 M559.2 390 V568 M674.6 390 V568 M790 390 V568 M905.5 390 V568 M1020.9 390 V568 M1136.4 390 V568 M1251.8 390 V568 M1367.3 390 V568 M1482.7 390 V568 M1598.2 390 V568 M1713.6 390 V568 M1829.1 390 V568 M1944.5 390 V568"/>
  <path d="M486 745.7 H1948 M486 799.2 H1948 M486 852.8 H1948 M486 906.3 H1948"/>
  <path d="M496 745.7 V970 M559.2 745.7 V970 M674.6 745.7 V970 M790 745.7 V970 M905.5 745.7 V970 M1020.9 745.7 V970 M1136.4 745.7 V970 M1251.8 745.7 V970 M1367.3 745.7 V970 M1482.7 745.7 V970 M1598.2 745.7 V970 M1713.6 745.7 V970 M1829.1 745.7 V970 M1944.5 745.7 V970"/>
 </g>
 <g stroke="#aaa" stroke-width="1.6"><path d="M486 558 H1948"/><path d="M486 959.8 H1948"/></g>
<path d="M496.0 552.1 C499.2 546.2 502.4 534.5 505.6 534.5 C508.8 534.5 512.0 536.9 515.2 539.3 C518.4 541.8 521.7 549.2 524.9 549.2 C528.1 549.2 531.3 549.2 534.5 549.2 C537.7 549.2 540.9 549.2 544.1 549.2 C547.3 549.2 550.5 551.5 553.7 551.5 C556.9 551.5 560.1 539.5 563.3 534.9 C566.5 530.3 569.8 526.3 573.0 524.0 C576.2 521.7 579.4 522.3 582.6 521.0 C585.8 519.7 589.0 520.9 592.2 513.7 C595.4 506.5 598.6 463.5 601.8 463.5 C605.0 463.5 608.2 463.5 611.4 474.6 C614.6 485.8 617.9 521.1 621.1 533.9 C624.3 546.6 627.5 547.4 630.7 550.9 C633.9 554.3 637.1 554.4 640.3 554.4 C643.5 554.4 646.7 517.9 649.9 517.9 C653.1 517.9 656.3 538.7 659.5 538.7 C662.7 538.7 666.0 538.7 669.2 538.7 C672.4 538.7 675.6 545.4 678.8 547.7 C682.0 550.1 685.2 552.8 688.4 552.8 C691.6 552.8 694.8 545.6 698.0 541.2 C701.2 536.8 704.4 526.5 707.6 526.5 C710.8 526.5 714.1 544.4 717.3 549.6 C720.5 554.8 723.7 557.2 726.9 557.6 C730.1 558.0 733.3 558.0 736.5 558.0 C739.7 558.0 742.9 558.0 746.1 558.0 C749.3 558.0 752.5 558.0 755.7 558.0 C758.9 558.0 762.2 558.0 765.4 558.0 C768.6 558.0 771.8 558.0 775.0 558.0 C778.2 558.0 781.4 558.0 784.6 558.0 C787.8 558.0 791.0 558.0 794.2 558.0 C797.4 558.0 800.6 558.0 803.8 558.0 C807.0 558.0 810.3 558.0 813.5 558.0 C816.7 558.0 819.9 555.9 823.1 555.9 C826.3 555.9 829.5 558.0 832.7 558.0 C835.9 558.0 839.1 558.0 842.3 558.0 C845.5 558.0 848.7 555.9 851.9 555.9 C855.1 555.9 858.4 558.0 861.6 558.0 C864.8 558.0 868.0 558.0 871.2 558.0 C874.4 558.0 877.6 555.9 880.8 555.9 C884.0 555.9 887.2 558.0 890.4 558.0 C893.6 558.0 896.8 558.0 900.0 558.0 C903.2 558.0 906.5 555.9 909.7 555.9 C912.9 555.9 916.1 558.0 919.3 558.0 C922.5 558.0 925.7 558.0 928.9 558.0 C932.1 558.0 935.3 558.0 938.5 558.0 C941.7 558.0 944.9 558.0 948.1 558.0 C951.3 558.0 954.6 555.9 957.8 555.9 C961.0 555.9 964.2 558.0 967.4 558.0 C970.6 558.0 973.8 558.0 977.0 558.0 C980.2 558.0 983.4 558.0 986.6 558.0 C989.8 558.0 993.0 558.0 996.2 558.0 C999.4 558.0 1002.7 558.0 1005.9 558.0 C1009.1 558.0 1012.3 555.9 1015.5 555.9 C1018.7 555.9 1021.9 558.0 1025.1 558.0 C1028.3 558.0 1031.5 558.0 1034.7 558.0 C1037.9 558.0 1041.1 555.9 1044.3 555.9 C1047.5 555.9 1050.8 558.0 1054.0 558.0 C1057.2 558.0 1060.4 555.9 1063.6 555.9 C1066.8 555.9 1070.0 558.0 1073.2 558.0 C1076.4 558.0 1079.6 558.0 1082.8 558.0 C1086.0 558.0 1089.2 558.0 1092.4 558.0 C1095.6 558.0 1098.9 558.0 1102.1 558.0 C1105.3 558.0 1108.5 558.0 1111.7 558.0 C1114.9 558.0 1118.1 555.9 1121.3 555.9 C1124.5 555.9 1127.7 558.0 1130.9 558.0 C1134.1 558.0 1137.3 558.0 1140.5 558.0 C1143.7 558.0 1147.0 558.0 1150.2 558.0 C1153.4 558.0 1156.6 558.0 1159.8 558.0 C1163.0 558.0 1166.2 558.0 1169.4 558.0 C1172.6 558.0 1175.8 555.9 1179.0 555.9 C1182.2 555.9 1185.4 558.0 1188.6 558.0 C1191.8 558.0 1195.1 555.9 1198.3 555.9 C1201.5 555.9 1204.7 558.0 1207.9 558.0 C1211.1 558.0 1214.3 558.0 1217.5 558.0 C1220.7 558.0 1223.9 557.0 1227.1 556.3 C1230.3 555.7 1233.5 555.9 1236.7 553.2 C1239.9 550.4 1243.2 553.0 1246.4 533.4 C1249.6 513.9 1252.8 421.5 1256.0 421.5 C1259.2 421.5 1262.4 496.9 1265.6 500.0 C1268.8 503.2 1272.0 503.2 1275.2 503.2 C1278.4 503.2 1281.6 496.9 1284.8 496.9 C1288.0 496.9 1291.3 534.7 1294.5 534.7 C1297.7 534.7 1300.9 529.4 1304.1 526.1 C1307.3 522.8 1310.5 515.0 1313.7 515.0 C1316.9 515.0 1320.1 520.4 1323.3 520.4 C1326.5 520.4 1329.7 520.4 1332.9 517.3 C1336.1 514.1 1339.4 496.5 1342.6 490.8 C1345.8 485.1 1349.0 482.8 1352.2 482.8 C1355.4 482.8 1358.6 512.1 1361.8 514.3 C1365.0 516.5 1368.2 516.0 1371.4 516.6 C1374.6 517.3 1377.8 524.2 1381.0 524.2 C1384.2 524.2 1387.5 517.3 1390.7 517.3 C1393.9 517.3 1397.1 534.1 1400.3 534.1 C1403.5 534.1 1406.7 517.3 1409.9 517.3 C1413.1 517.3 1416.3 517.3 1419.5 517.3 C1422.7 517.3 1425.9 543.3 1429.1 544.6 C1432.3 545.8 1435.6 545.8 1438.8 545.8 C1442.0 545.8 1445.2 544.1 1448.4 544.1 C1451.6 544.1 1454.8 547.1 1458.0 547.1 C1461.2 547.1 1464.4 543.9 1467.6 542.9 C1470.8 541.8 1474.0 540.8 1477.2 540.8 C1480.4 540.8 1483.7 541.3 1486.9 542.2 C1490.1 543.2 1493.3 545.3 1496.5 546.2 C1499.7 547.1 1502.9 547.7 1506.1 547.7 C1509.3 547.7 1512.5 547.7 1515.7 547.7 C1518.9 547.7 1522.1 547.7 1525.3 547.7 C1528.5 547.7 1531.8 546.2 1535.0 545.6 C1538.2 545.0 1541.4 544.1 1544.6 544.1 C1547.8 544.1 1551.0 547.7 1554.2 547.7 C1557.4 547.7 1560.6 547.7 1563.8 547.7 C1567.0 547.7 1570.2 545.6 1573.4 545.6 C1576.6 545.6 1579.9 545.6 1583.1 545.6 C1586.3 545.6 1589.5 557.0 1592.7 557.0 C1595.9 557.0 1599.1 545.8 1602.3 545.0 C1605.5 544.1 1608.7 544.1 1611.9 544.1 C1615.1 544.1 1618.3 547.7 1621.5 547.7 C1624.7 547.7 1628.0 547.7 1631.2 547.7 C1634.4 547.7 1637.6 544.1 1640.8 544.1 C1644.0 544.1 1647.2 547.7 1650.4 547.7 C1653.6 547.7 1656.8 546.2 1660.0 545.6 C1663.2 545.0 1666.4 544.1 1669.6 544.1 C1672.8 544.1 1676.1 545.6 1679.3 546.2 C1682.5 546.8 1685.7 547.7 1688.9 547.7 C1692.1 547.7 1695.3 544.1 1698.5 544.1 C1701.7 544.1 1704.9 546.5 1708.1 546.5 C1711.3 546.5 1714.5 546.5 1717.7 546.5 C1720.9 546.5 1724.2 546.5 1727.4 546.5 C1730.6 546.5 1733.8 548.1 1737.0 548.1 C1740.2 548.1 1743.4 546.5 1746.6 546.5 C1749.8 546.5 1753.0 548.1 1756.2 548.1 C1759.4 548.1 1762.6 544.6 1765.8 544.6 C1769.0 544.6 1772.3 548.1 1775.5 548.1 C1778.7 548.1 1781.9 547.0 1785.1 546.5 C1788.3 545.9 1791.5 544.6 1794.7 544.6 C1797.9 544.6 1801.1 544.6 1804.3 544.6 C1807.5 544.6 1810.7 547.5 1813.9 547.5 C1817.1 547.5 1820.4 547.5 1823.6 547.5 C1826.8 547.5 1830.0 544.6 1833.2 544.6 C1836.4 544.6 1839.6 544.6 1842.8 544.6 C1846.0 544.6 1849.2 528.6 1852.4 528.6 C1855.6 528.6 1858.8 546.5 1862.0 546.5 C1865.2 546.5 1868.5 546.5 1871.7 546.5 C1874.9 546.5 1878.1 544.6 1881.3 544.6 C1884.5 544.6 1887.7 546.5 1890.9 546.5 C1894.1 546.5 1897.3 524.2 1900.5 524.2 C1903.7 524.2 1906.9 525.7 1910.1 527.3 C1913.3 529.0 1916.6 533.9 1919.8 533.9 C1923.0 533.9 1926.2 509.5 1929.4 509.5 C1932.6 509.5 1935.8 509.5 1939.0 509.5 C1942.2 509.5 1945.4 521.4 1948.6 527.3 L1948.6 558.0 L496.0 558.0 Z" fill="rgba(200,200,200,0.35)"/>
<path d="M496.0 556.3 C499.2 554.5 502.4 550.9 505.6 550.9 C508.8 550.9 512.0 553.0 515.2 553.4 C518.4 553.7 521.7 553.6 524.9 553.8 C528.1 554.0 531.3 555.3 534.5 555.3 C537.7 555.3 540.9 555.3 544.1 555.3 C547.3 555.3 550.5 554.5 553.7 553.8 C556.9 553.1 560.1 551.9 563.3 550.9 C566.5 549.8 569.8 548.3 573.0 547.3 C576.2 546.3 579.4 546.2 582.6 544.8 C585.8 543.3 589.0 543.7 592.2 538.7 C595.4 533.7 598.6 514.7 601.8 514.7 C605.0 514.7 608.2 523.8 611.4 530.1 C614.6 536.3 617.9 549.0 621.1 552.1 C624.3 555.2 627.5 554.8 630.7 555.3 C633.9 555.7 637.1 555.9 640.3 555.9 C643.5 555.9 646.7 541.6 649.9 541.6 C653.1 541.6 656.3 547.7 659.5 547.7 C662.7 547.7 666.0 546.0 669.2 546.0 C672.4 546.0 675.6 550.1 678.8 551.5 C682.0 552.9 685.2 554.4 688.4 554.4 C691.6 554.4 694.8 553.5 698.0 552.1 C701.2 550.7 704.4 546.0 707.6 546.0 C710.8 546.0 714.1 552.5 717.3 554.4 C720.5 556.4 723.7 557.2 726.9 557.6 C730.1 558.0 733.3 558.0 736.5 558.0 C739.7 558.0 742.9 558.0 746.1 558.0 C749.3 558.0 752.5 558.0 755.7 558.0 C758.9 558.0 762.2 558.0 765.4 558.0 C768.6 558.0 771.8 558.0 775.0 558.0 C778.2 558.0 781.4 558.0 784.6 558.0 C787.8 558.0 791.0 558.0 794.2 558.0 C797.4 558.0 800.6 558.0 803.8 558.0 C807.0 558.0 810.3 558.0 813.5 558.0 C816.7 558.0 819.9 556.3 823.1 556.3 C826.3 556.3 829.5 558.0 832.7 558.0 C835.9 558.0 839.1 558.0 842.3 558.0 C845.5 558.0 848.7 556.3 851.9 556.3 C855.1 556.3 858.4 558.0 861.6 558.0 C864.8 558.0 868.0 558.0 871.2 558.0 C874.4 558.0 877.6 556.3 880.8 556.3 C884.0 556.3 887.2 558.0 890.4 558.0 C893.6 558.0 896.8 558.0 900.0 558.0 C903.2 558.0 906.5 556.3 909.7 556.3 C912.9 556.3 916.1 558.0 919.3 558.0 C922.5 558.0 925.7 558.0 928.9 558.0 C932.1 558.0 935.3 558.0 938.5 558.0 C941.7 558.0 944.9 558.0 948.1 558.0 C951.3 558.0 954.6 556.3 957.8 556.3 C961.0 556.3 964.2 558.0 967.4 558.0 C970.6 558.0 973.8 558.0 977.0 558.0 C980.2 558.0 983.4 558.0 986.6 558.0 C989.8 558.0 993.0 558.0 996.2 558.0 C999.4 558.0 1002.7 558.0 1005.9 558.0 C1009.1 558.0 1012.3 556.3 1015.5 556.3 C1018.7 556.3 1021.9 558.0 1025.1 558.0 C1028.3 558.0 1031.5 558.0 1034.7 558.0 C1037.9 558.0 1041.1 556.3 1044.3 556.3 C1047.5 556.3 1050.8 558.0 1054.0 558.0 C1057.2 558.0 1060.4 556.3 1063.6 556.3 C1066.8 556.3 1070.0 558.0 1073.2 558.0 C1076.4 558.0 1079.6 558.0 1082.8 558.0 C1086.0 558.0 1089.2 558.0 1092.4 558.0 C1095.6 558.0 1098.9 558.0 1102.1 558.0 C1105.3 558.0 1108.5 558.0 1111.7 558.0 C1114.9 558.0 1118.1 556.3 1121.3 556.3 C1124.5 556.3 1127.7 558.0 1130.9 558.0 C1134.1 558.0 1137.3 558.0 1140.5 558.0 C1143.7 558.0 1147.0 558.0 1150.2 558.0 C1153.4 558.0 1156.6 558.0 1159.8 558.0 C1163.0 558.0 1166.2 558.0 1169.4 558.0 C1172.6 558.0 1175.8 556.3 1179.0 556.3 C1182.2 556.3 1185.4 558.0 1188.6 558.0 C1191.8 558.0 1195.1 556.3 1198.3 556.3 C1201.5 556.3 1204.7 558.0 1207.9 558.0 C1211.1 558.0 1214.3 558.0 1217.5 558.0 C1220.7 558.0 1223.9 558.0 1227.1 557.8 C1230.3 557.6 1233.5 557.8 1236.7 556.3 C1239.9 554.9 1243.2 553.0 1246.4 548.3 C1249.6 543.7 1252.8 528.6 1256.0 528.6 C1259.2 528.6 1262.4 528.6 1265.6 528.6 C1268.8 528.6 1272.0 520.4 1275.2 520.4 C1278.4 520.4 1281.6 526.0 1284.8 530.9 C1288.0 535.8 1291.3 550.0 1294.5 550.0 C1297.7 550.0 1300.9 549.4 1304.1 548.3 C1307.3 547.3 1310.5 545.8 1313.7 543.9 C1316.9 542.1 1320.1 539.1 1323.3 537.2 C1326.5 535.4 1329.7 532.8 1332.9 532.8 C1336.1 532.8 1339.4 536.7 1342.6 537.2 C1345.8 537.7 1349.0 537.5 1352.2 537.8 C1355.4 538.2 1358.6 541.0 1361.8 541.0 C1365.0 541.0 1368.2 541.0 1371.4 541.0 C1374.6 541.0 1377.8 538.8 1381.0 537.2 C1384.2 535.6 1387.5 531.5 1390.7 531.5 C1393.9 531.5 1397.1 547.1 1400.3 547.1 C1403.5 547.1 1406.7 536.0 1409.9 536.0 C1413.1 536.0 1416.3 537.8 1419.5 539.5 C1422.7 541.3 1425.9 545.2 1429.1 546.5 C1432.3 547.7 1435.6 547.7 1438.8 547.7 C1442.0 547.7 1445.2 547.1 1448.4 547.1 C1451.6 547.1 1454.8 549.4 1458.0 549.4 C1461.2 549.4 1464.4 546.9 1467.6 546.0 C1470.8 545.2 1474.0 544.4 1477.2 544.4 C1480.4 544.4 1483.7 544.7 1486.9 545.4 C1490.1 546.1 1493.3 548.0 1496.5 548.8 C1499.7 549.5 1502.9 549.8 1506.1 549.8 C1509.3 549.8 1512.5 549.8 1515.7 549.8 C1518.9 549.8 1522.1 549.8 1525.3 549.8 C1528.5 549.8 1531.8 548.6 1535.0 548.1 C1538.2 547.7 1541.4 547.1 1544.6 547.1 C1547.8 547.1 1551.0 549.8 1554.2 549.8 C1557.4 549.8 1560.6 549.8 1563.8 549.8 C1567.0 549.8 1570.2 548.1 1573.4 548.1 C1576.6 548.1 1579.9 548.1 1583.1 548.1 C1586.3 548.1 1589.5 557.4 1592.7 557.4 C1595.9 557.4 1599.1 548.3 1602.3 547.7 C1605.5 547.1 1608.7 547.1 1611.9 547.1 C1615.1 547.1 1618.3 549.8 1621.5 549.8 C1624.7 549.8 1628.0 549.8 1631.2 549.8 C1634.4 549.8 1637.6 547.1 1640.8 547.1 C1644.0 547.1 1647.2 549.8 1650.4 549.8 C1653.6 549.8 1656.8 548.6 1660.0 548.1 C1663.2 547.7 1666.4 547.1 1669.6 547.1 C1672.8 547.1 1676.1 548.3 1679.3 548.8 C1682.5 549.2 1685.7 549.8 1688.9 549.8 C1692.1 549.8 1695.3 547.1 1698.5 547.1 C1701.7 547.1 1704.9 548.8 1708.1 548.8 C1711.3 548.8 1714.5 548.8 1717.7 548.8 C1720.9 548.8 1724.2 548.8 1727.4 548.8 C1730.6 548.8 1733.8 550.2 1737.0 550.2 C1740.2 550.2 1743.4 548.8 1746.6 548.8 C1749.8 548.8 1753.0 550.2 1756.2 550.2 C1759.4 550.2 1762.6 547.3 1765.8 547.3 C1769.0 547.3 1772.3 550.2 1775.5 550.2 C1778.7 550.2 1781.9 549.2 1785.1 548.8 C1788.3 548.3 1791.5 547.3 1794.7 547.3 C1797.9 547.3 1801.1 547.3 1804.3 547.3 C1807.5 547.3 1810.7 549.6 1813.9 549.6 C1817.1 549.6 1820.4 549.6 1823.6 549.6 C1826.8 549.6 1830.0 547.3 1833.2 547.3 C1836.4 547.3 1839.6 547.3 1842.8 547.3 C1846.0 547.3 1849.2 542.5 1852.4 542.5 C1855.6 542.5 1858.8 547.9 1862.0 547.9 C1865.2 547.9 1868.5 547.9 1871.7 547.9 C1874.9 547.9 1878.1 547.5 1881.3 547.5 C1884.5 547.5 1887.7 547.9 1890.9 547.9 C1894.1 547.9 1897.3 542.8 1900.5 541.2 C1903.7 539.6 1906.9 538.5 1910.1 538.5 C1913.3 538.5 1916.6 542.5 1919.8 542.5 C1923.0 542.5 1926.2 537.4 1929.4 537.0 C1932.6 536.6 1935.8 536.6 1939.0 536.6 C1942.2 536.6 1945.4 538.7 1948.6 539.7 L1948.6 558.0 L496.0 558.0 Z" fill="#91d2de"/>
<path d="M496.0 556.3 C499.2 554.5 502.4 550.9 505.6 550.9 C508.8 550.9 512.0 553.0 515.2 553.4 C518.4 553.7 521.7 553.6 524.9 553.8 C528.1 554.0 531.3 555.3 534.5 555.3 C537.7 555.3 540.9 555.3 544.1 555.3 C547.3 555.3 550.5 554.5 553.7 553.8 C556.9 553.1 560.1 551.9 563.3 550.9 C566.5 549.8 569.8 548.3 573.0 547.3 C576.2 546.3 579.4 546.2 582.6 544.8 C585.8 543.3 589.0 543.7 592.2 538.7 C595.4 533.7 598.6 514.7 601.8 514.7 C605.0 514.7 608.2 523.8 611.4 530.1 C614.6 536.3 617.9 549.0 621.1 552.1 C624.3 555.2 627.5 554.8 630.7 555.3 C633.9 555.7 637.1 555.9 640.3 555.9 C643.5 555.9 646.7 541.6 649.9 541.6 C653.1 541.6 656.3 547.7 659.5 547.7 C662.7 547.7 666.0 546.0 669.2 546.0 C672.4 546.0 675.6 550.1 678.8 551.5 C682.0 552.9 685.2 554.4 688.4 554.4 C691.6 554.4 694.8 553.5 698.0 552.1 C701.2 550.7 704.4 546.0 707.6 546.0 C710.8 546.0 714.1 552.5 717.3 554.4 C720.5 556.4 723.7 557.2 726.9 557.6 C730.1 558.0 733.3 558.0 736.5 558.0 C739.7 558.0 742.9 558.0 746.1 558.0 C749.3 558.0 752.5 558.0 755.7 558.0 C758.9 558.0 762.2 558.0 765.4 558.0 C768.6 558.0 771.8 558.0 775.0 558.0 C778.2 558.0 781.4 558.0 784.6 558.0 C787.8 558.0 791.0 558.0 794.2 558.0 C797.4 558.0 800.6 558.0 803.8 558.0 C807.0 558.0 810.3 558.0 813.5 558.0 C816.7 558.0 819.9 556.3 823.1 556.3 C826.3 556.3 829.5 558.0 832.7 558.0 C835.9 558.0 839.1 558.0 842.3 558.0 C845.5 558.0 848.7 556.3 851.9 556.3 C855.1 556.3 858.4 558.0 861.6 558.0 C864.8 558.0 868.0 558.0 871.2 558.0 C874.4 558.0 877.6 556.3 880.8 556.3 C884.0 556.3 887.2 558.0 890.4 558.0 C893.6 558.0 896.8 558.0 900.0 558.0 C903.2 558.0 906.5 556.3 909.7 556.3 C912.9 556.3 916.1 558.0 919.3 558.0 C922.5 558.0 925.7 558.0 928.9 558.0 C932.1 558.0 935.3 558.0 938.5 558.0 C941.7 558.0 944.9 558.0 948.1 558.0 C951.3 558.0 954.6 556.3 957.8 556.3 C961.0 556.3 964.2 558.0 967.4 558.0 C970.6 558.0 973.8 558.0 977.0 558.0 C980.2 558.0 983.4 558.0 986.6 558.0 C989.8 558.0 993.0 558.0 996.2 558.0 C999.4 558.0 1002.7 558.0 1005.9 558.0 C1009.1 558.0 1012.3 556.3 1015.5 556.3 C1018.7 556.3 1021.9 558.0 1025.1 558.0 C1028.3 558.0 1031.5 558.0 1034.7 558.0 C1037.9 558.0 1041.1 556.3 1044.3 556.3 C1047.5 556.3 1050.8 558.0 1054.0 558.0 C1057.2 558.0 1060.4 556.3 1063.6 556.3 C1066.8 556.3 1070.0 558.0 1073.2 558.0 C1076.4 558.0 1079.6 558.0 1082.8 558.0 C1086.0 558.0 1089.2 558.0 1092.4 558.0 C1095.6 558.0 1098.9 558.0 1102.1 558.0 C1105.3 558.0 1108.5 558.0 1111.7 558.0 C1114.9 558.0 1118.1 556.3 1121.3 556.3 C1124.5 556.3 1127.7 558.0 1130.9 558.0 C1134.1 558.0 1137.3 558.0 1140.5 558.0 C1143.7 558.0 1147.0 558.0 1150.2 558.0 C1153.4 558.0 1156.6 558.0 1159.8 558.0 C1163.0 558.0 1166.2 558.0 1169.4 558.0 C1172.6 558.0 1175.8 556.3 1179.0 556.3 C1182.2 556.3 1185.4 558.0 1188.6 558.0 C1191.8 558.0 1195.1 556.3 1198.3 556.3 C1201.5 556.3 1204.7 558.0 1207.9 558.0 C1211.1 558.0 1214.3 558.0 1217.5 558.0 C1220.7 558.0 1223.9 558.0 1227.1 557.8 C1230.3 557.6 1233.5 557.8 1236.7 556.3 C1239.9 554.9 1243.2 553.0 1246.4 548.3 C1249.6 543.7 1252.8 528.6 1256.0 528.6 C1259.2 528.6 1262.4 528.6 1265.6 528.6 C1268.8 528.6 1272.0 520.4 1275.2 520.4 C1278.4 520.4 1281.6 526.0 1284.8 530.9 C1288.0 535.8 1291.3 550.0 1294.5 550.0 C1297.7 550.0 1300.9 549.4 1304.1 548.3 C1307.3 547.3 1310.5 545.8 1313.7 543.9 C1316.9 542.1 1320.1 539.1 1323.3 537.2 C1326.5 535.4 1329.7 532.8 1332.9 532.8 C1336.1 532.8 1339.4 536.7 1342.6 537.2 C1345.8 537.7 1349.0 537.5 1352.2 537.8 C1355.4 538.2 1358.6 541.0 1361.8 541.0 C1365.0 541.0 1368.2 541.0 1371.4 541.0 C1374.6 541.0 1377.8 538.8 1381.0 537.2 C1384.2 535.6 1387.5 531.5 1390.7 531.5 C1393.9 531.5 1397.1 547.1 1400.3 547.1 C1403.5 547.1 1406.7 536.0 1409.9 536.0 C1413.1 536.0 1416.3 537.8 1419.5 539.5 C1422.7 541.3 1425.9 545.2 1429.1 546.5 C1432.3 547.7 1435.6 547.7 1438.8 547.7 C1442.0 547.7 1445.2 547.1 1448.4 547.1 C1451.6 547.1 1454.8 549.4 1458.0 549.4 C1461.2 549.4 1464.4 546.9 1467.6 546.0 C1470.8 545.2 1474.0 544.4 1477.2 544.4 C1480.4 544.4 1483.7 544.7 1486.9 545.4 C1490.1 546.1 1493.3 548.0 1496.5 548.8 C1499.7 549.5 1502.9 549.8 1506.1 549.8 C1509.3 549.8 1512.5 549.8 1515.7 549.8 C1518.9 549.8 1522.1 549.8 1525.3 549.8 C1528.5 549.8 1531.8 548.6 1535.0 548.1 C1538.2 547.7 1541.4 547.1 1544.6 547.1 C1547.8 547.1 1551.0 549.8 1554.2 549.8 C1557.4 549.8 1560.6 549.8 1563.8 549.8 C1567.0 549.8 1570.2 548.1 1573.4 548.1 C1576.6 548.1 1579.9 548.1 1583.1 548.1 C1586.3 548.1 1589.5 557.4 1592.7 557.4 C1595.9 557.4 1599.1 548.3 1602.3 547.7 C1605.5 547.1 1608.7 547.1 1611.9 547.1 C1615.1 547.1 1618.3 549.8 1621.5 549.8 C1624.7 549.8 1628.0 549.8 1631.2 549.8 C1634.4 549.8 1637.6 547.1 1640.8 547.1 C1644.0 547.1 1647.2 549.8 1650.4 549.8 C1653.6 549.8 1656.8 548.6 1660.0 548.1 C1663.2 547.7 1666.4 547.1 1669.6 547.1 C1672.8 547.1 1676.1 548.3 1679.3 548.8 C1682.5 549.2 1685.7 549.8 1688.9 549.8 C1692.1 549.8 1695.3 547.1 1698.5 547.1 C1701.7 547.1 1704.9 548.8 1708.1 548.8 C1711.3 548.8 1714.5 548.8 1717.7 548.8 C1720.9 548.8 1724.2 548.8 1727.4 548.8 C1730.6 548.8 1733.8 550.2 1737.0 550.2 C1740.2 550.2 1743.4 548.8 1746.6 548.8 C1749.8 548.8 1753.0 550.2 1756.2 550.2 C1759.4 550.2 1762.6 547.3 1765.8 547.3 C1769.0 547.3 1772.3 550.2 1775.5 550.2 C1778.7 550.2 1781.9 549.2 1785.1 548.8 C1788.3 548.3 1791.5 547.3 1794.7 547.3 C1797.9 547.3 1801.1 547.3 1804.3 547.3 C1807.5 547.3 1810.7 549.6 1813.9 549.6 C1817.1 549.6 1820.4 549.6 1823.6 549.6 C1826.8 549.6 1830.0 547.3 1833.2 547.3 C1836.4 547.3 1839.6 547.3 1842.8 547.3 C1846.0 547.3 1849.2 542.5 1852.4 542.5 C1855.6 542.5 1858.8 547.9 1862.0 547.9 C1865.2 547.9 1868.5 547.9 1871.7 547.9 C1874.9 547.9 1878.1 547.5 1881.3 547.5 C1884.5 547.5 1887.7 547.9 1890.9 547.9 C1894.1 547.9 1897.3 542.8 1900.5 541.2 C1903.7 539.6 1906.9 538.5 1910.1 538.5 C1913.3 538.5 1916.6 542.5 1919.8 542.5 C1923.0 542.5 1926.2 537.4 1929.4 537.0 C1932.6 536.6 1935.8 536.6 1939.0 536.6 C1942.2 536.6 1945.4 538.7 1948.6 539.7" fill="none" stroke="#3ab8d0" stroke-width="4.8" stroke-linejoin="round"/>
<path d="M496.0 552.1 C499.2 546.2 502.4 534.5 505.6 534.5 C508.8 534.5 512.0 536.9 515.2 539.3 C518.4 541.8 521.7 549.2 524.9 549.2 C528.1 549.2 531.3 549.2 534.5 549.2 C537.7 549.2 540.9 549.2 544.1 549.2 C547.3 549.2 550.5 551.5 553.7 551.5 C556.9 551.5 560.1 539.5 563.3 534.9 C566.5 530.3 569.8 526.3 573.0 524.0 C576.2 521.7 579.4 522.3 582.6 521.0 C585.8 519.7 589.0 520.9 592.2 513.7 C595.4 506.5 598.6 463.5 601.8 463.5 C605.0 463.5 608.2 463.5 611.4 474.6 C614.6 485.8 617.9 521.1 621.1 533.9 C624.3 546.6 627.5 547.4 630.7 550.9 C633.9 554.3 637.1 554.4 640.3 554.4 C643.5 554.4 646.7 517.9 649.9 517.9 C653.1 517.9 656.3 538.7 659.5 538.7 C662.7 538.7 666.0 538.7 669.2 538.7 C672.4 538.7 675.6 545.4 678.8 547.7 C682.0 550.1 685.2 552.8 688.4 552.8 C691.6 552.8 694.8 545.6 698.0 541.2 C701.2 536.8 704.4 526.5 707.6 526.5 C710.8 526.5 714.1 544.4 717.3 549.6 C720.5 554.8 723.7 557.2 726.9 557.6 C730.1 558.0 733.3 558.0 736.5 558.0 C739.7 558.0 742.9 558.0 746.1 558.0 C749.3 558.0 752.5 558.0 755.7 558.0 C758.9 558.0 762.2 558.0 765.4 558.0 C768.6 558.0 771.8 558.0 775.0 558.0 C778.2 558.0 781.4 558.0 784.6 558.0 C787.8 558.0 791.0 558.0 794.2 558.0 C797.4 558.0 800.6 558.0 803.8 558.0 C807.0 558.0 810.3 558.0 813.5 558.0 C816.7 558.0 819.9 555.9 823.1 555.9 C826.3 555.9 829.5 558.0 832.7 558.0 C835.9 558.0 839.1 558.0 842.3 558.0 C845.5 558.0 848.7 555.9 851.9 555.9 C855.1 555.9 858.4 558.0 861.6 558.0 C864.8 558.0 868.0 558.0 871.2 558.0 C874.4 558.0 877.6 555.9 880.8 555.9 C884.0 555.9 887.2 558.0 890.4 558.0 C893.6 558.0 896.8 558.0 900.0 558.0 C903.2 558.0 906.5 555.9 909.7 555.9 C912.9 555.9 916.1 558.0 919.3 558.0 C922.5 558.0 925.7 558.0 928.9 558.0 C932.1 558.0 935.3 558.0 938.5 558.0 C941.7 558.0 944.9 558.0 948.1 558.0 C951.3 558.0 954.6 555.9 957.8 555.9 C961.0 555.9 964.2 558.0 967.4 558.0 C970.6 558.0 973.8 558.0 977.0 558.0 C980.2 558.0 983.4 558.0 986.6 558.0 C989.8 558.0 993.0 558.0 996.2 558.0 C999.4 558.0 1002.7 558.0 1005.9 558.0 C1009.1 558.0 1012.3 555.9 1015.5 555.9 C1018.7 555.9 1021.9 558.0 1025.1 558.0 C1028.3 558.0 1031.5 558.0 1034.7 558.0 C1037.9 558.0 1041.1 555.9 1044.3 555.9 C1047.5 555.9 1050.8 558.0 1054.0 558.0 C1057.2 558.0 1060.4 555.9 1063.6 555.9 C1066.8 555.9 1070.0 558.0 1073.2 558.0 C1076.4 558.0 1079.6 558.0 1082.8 558.0 C1086.0 558.0 1089.2 558.0 1092.4 558.0 C1095.6 558.0 1098.9 558.0 1102.1 558.0 C1105.3 558.0 1108.5 558.0 1111.7 558.0 C1114.9 558.0 1118.1 555.9 1121.3 555.9 C1124.5 555.9 1127.7 558.0 1130.9 558.0 C1134.1 558.0 1137.3 558.0 1140.5 558.0 C1143.7 558.0 1147.0 558.0 1150.2 558.0 C1153.4 558.0 1156.6 558.0 1159.8 558.0 C1163.0 558.0 1166.2 558.0 1169.4 558.0 C1172.6 558.0 1175.8 555.9 1179.0 555.9 C1182.2 555.9 1185.4 558.0 1188.6 558.0 C1191.8 558.0 1195.1 555.9 1198.3 555.9 C1201.5 555.9 1204.7 558.0 1207.9 558.0 C1211.1 558.0 1214.3 558.0 1217.5 558.0 C1220.7 558.0 1223.9 557.0 1227.1 556.3 C1230.3 555.7 1233.5 555.9 1236.7 553.2 C1239.9 550.4 1243.2 553.0 1246.4 533.4 C1249.6 513.9 1252.8 421.5 1256.0 421.5 C1259.2 421.5 1262.4 496.9 1265.6 500.0 C1268.8 503.2 1272.0 503.2 1275.2 503.2 C1278.4 503.2 1281.6 496.9 1284.8 496.9 C1288.0 496.9 1291.3 534.7 1294.5 534.7 C1297.7 534.7 1300.9 529.4 1304.1 526.1 C1307.3 522.8 1310.5 515.0 1313.7 515.0 C1316.9 515.0 1320.1 520.4 1323.3 520.4 C1326.5 520.4 1329.7 520.4 1332.9 517.3 C1336.1 514.1 1339.4 496.5 1342.6 490.8 C1345.8 485.1 1349.0 482.8 1352.2 482.8 C1355.4 482.8 1358.6 512.1 1361.8 514.3 C1365.0 516.5 1368.2 516.0 1371.4 516.6 C1374.6 517.3 1377.8 524.2 1381.0 524.2 C1384.2 524.2 1387.5 517.3 1390.7 517.3 C1393.9 517.3 1397.1 534.1 1400.3 534.1 C1403.5 534.1 1406.7 517.3 1409.9 517.3 C1413.1 517.3 1416.3 517.3 1419.5 517.3 C1422.7 517.3 1425.9 543.3 1429.1 544.6 C1432.3 545.8 1435.6 545.8 1438.8 545.8 C1442.0 545.8 1445.2 544.1 1448.4 544.1 C1451.6 544.1 1454.8 547.1 1458.0 547.1 C1461.2 547.1 1464.4 543.9 1467.6 542.9 C1470.8 541.8 1474.0 540.8 1477.2 540.8 C1480.4 540.8 1483.7 541.3 1486.9 542.2 C1490.1 543.2 1493.3 545.3 1496.5 546.2 C1499.7 547.1 1502.9 547.7 1506.1 547.7 C1509.3 547.7 1512.5 547.7 1515.7 547.7 C1518.9 547.7 1522.1 547.7 1525.3 547.7 C1528.5 547.7 1531.8 546.2 1535.0 545.6 C1538.2 545.0 1541.4 544.1 1544.6 544.1 C1547.8 544.1 1551.0 547.7 1554.2 547.7 C1557.4 547.7 1560.6 547.7 1563.8 547.7 C1567.0 547.7 1570.2 545.6 1573.4 545.6 C1576.6 545.6 1579.9 545.6 1583.1 545.6 C1586.3 545.6 1589.5 557.0 1592.7 557.0 C1595.9 557.0 1599.1 545.8 1602.3 545.0 C1605.5 544.1 1608.7 544.1 1611.9 544.1 C1615.1 544.1 1618.3 547.7 1621.5 547.7 C1624.7 547.7 1628.0 547.7 1631.2 547.7 C1634.4 547.7 1637.6 544.1 1640.8 544.1 C1644.0 544.1 1647.2 547.7 1650.4 547.7 C1653.6 547.7 1656.8 546.2 1660.0 545.6 C1663.2 545.0 1666.4 544.1 1669.6 544.1 C1672.8 544.1 1676.1 545.6 1679.3 546.2 C1682.5 546.8 1685.7 547.7 1688.9 547.7 C1692.1 547.7 1695.3 544.1 1698.5 544.1 C1701.7 544.1 1704.9 546.5 1708.1 546.5 C1711.3 546.5 1714.5 546.5 1717.7 546.5 C1720.9 546.5 1724.2 546.5 1727.4 546.5 C1730.6 546.5 1733.8 548.1 1737.0 548.1 C1740.2 548.1 1743.4 546.5 1746.6 546.5 C1749.8 546.5 1753.0 548.1 1756.2 548.1 C1759.4 548.1 1762.6 544.6 1765.8 544.6 C1769.0 544.6 1772.3 548.1 1775.5 548.1 C1778.7 548.1 1781.9 547.0 1785.1 546.5 C1788.3 545.9 1791.5 544.6 1794.7 544.6 C1797.9 544.6 1801.1 544.6 1804.3 544.6 C1807.5 544.6 1810.7 547.5 1813.9 547.5 C1817.1 547.5 1820.4 547.5 1823.6 547.5 C1826.8 547.5 1830.0 544.6 1833.2 544.6 C1836.4 544.6 1839.6 544.6 1842.8 544.6 C1846.0 544.6 1849.2 528.6 1852.4 528.6 C1855.6 528.6 1858.8 546.5 1862.0 546.5 C1865.2 546.5 1868.5 546.5 1871.7 546.5 C1874.9 546.5 1878.1 544.6 1881.3 544.6 C1884.5 544.6 1887.7 546.5 1890.9 546.5 C1894.1 546.5 1897.3 524.2 1900.5 524.2 C1903.7 524.2 1906.9 525.7 1910.1 527.3 C1913.3 529.0 1916.6 533.9 1919.8 533.9 C1923.0 533.9 1926.2 509.5 1929.4 509.5 C1932.6 509.5 1935.8 509.5 1939.0 509.5 C1942.2 509.5 1945.4 521.4 1948.6 527.3" fill="none" stroke="#0e9c6b" stroke-width="4.8" stroke-linejoin="round"/>
<g fill="#0e9c6b"><circle cx="496.0" cy="552.1" r="3.1"/><circle cx="505.6" cy="534.5" r="3.1"/><circle cx="515.2" cy="539.3" r="3.1"/><circle cx="524.9" cy="549.2" r="3.1"/><circle cx="534.5" cy="549.2" r="3.1"/><circle cx="544.1" cy="549.2" r="3.1"/><circle cx="553.7" cy="551.5" r="3.1"/><circle cx="563.3" cy="534.9" r="3.1"/><circle cx="573.0" cy="524.0" r="3.1"/><circle cx="582.6" cy="521.0" r="3.1"/><circle cx="592.2" cy="513.7" r="3.1"/><circle cx="601.8" cy="463.5" r="3.1"/><circle cx="611.4" cy="474.6" r="3.1"/><circle cx="621.1" cy="533.9" r="3.1"/><circle cx="630.7" cy="550.9" r="3.1"/><circle cx="640.3" cy="554.4" r="3.1"/><circle cx="649.9" cy="517.9" r="3.1"/><circle cx="659.5" cy="538.7" r="3.1"/><circle cx="669.2" cy="538.7" r="3.1"/><circle cx="678.8" cy="547.7" r="3.1"/><circle cx="688.4" cy="552.8" r="3.1"/><circle cx="698.0" cy="541.2" r="3.1"/><circle cx="707.6" cy="526.5" r="3.1"/><circle cx="717.3" cy="549.6" r="3.1"/><circle cx="726.9" cy="557.6" r="3.1"/><circle cx="736.5" cy="558.0" r="3.1"/><circle cx="746.1" cy="558.0" r="3.1"/><circle cx="755.7" cy="558.0" r="3.1"/><circle cx="765.4" cy="558.0" r="3.1"/><circle cx="775.0" cy="558.0" r="3.1"/><circle cx="784.6" cy="558.0" r="3.1"/><circle cx="794.2" cy="558.0" r="3.1"/><circle cx="803.8" cy="558.0" r="3.1"/><circle cx="813.5" cy="558.0" r="3.1"/><circle cx="823.1" cy="555.9" r="3.1"/><circle cx="832.7" cy="558.0" r="3.1"/><circle cx="842.3" cy="558.0" r="3.1"/><circle cx="851.9" cy="555.9" r="3.1"/><circle cx="861.6" cy="558.0" r="3.1"/><circle cx="871.2" cy="558.0" r="3.1"/><circle cx="880.8" cy="555.9" r="3.1"/><circle cx="890.4" cy="558.0" r="3.1"/><circle cx="900.0" cy="558.0" r="3.1"/><circle cx="909.7" cy="555.9" r="3.1"/><circle cx="919.3" cy="558.0" r="3.1"/><circle cx="928.9" cy="558.0" r="3.1"/><circle cx="938.5" cy="558.0" r="3.1"/><circle cx="948.1" cy="558.0" r="3.1"/><circle cx="957.8" cy="555.9" r="3.1"/><circle cx="967.4" cy="558.0" r="3.1"/><circle cx="977.0" cy="558.0" r="3.1"/><circle cx="986.6" cy="558.0" r="3.1"/><circle cx="996.2" cy="558.0" r="3.1"/><circle cx="1005.9" cy="558.0" r="3.1"/><circle cx="1015.5" cy="555.9" r="3.1"/><circle cx="1025.1" cy="558.0" r="3.1"/><circle cx="1034.7" cy="558.0" r="3.1"/><circle cx="1044.3" cy="555.9" r="3.1"/><circle cx="1054.0" cy="558.0" r="3.1"/><circle cx="1063.6" cy="555.9" r="3.1"/><circle cx="1073.2" cy="558.0" r="3.1"/><circle cx="1082.8" cy="558.0" r="3.1"/><circle cx="1092.4" cy="558.0" r="3.1"/><circle cx="1102.1" cy="558.0" r="3.1"/><circle cx="1111.7" cy="558.0" r="3.1"/><circle cx="1121.3" cy="555.9" r="3.1"/><circle cx="1130.9" cy="558.0" r="3.1"/><circle cx="1140.5" cy="558.0" r="3.1"/><circle cx="1150.2" cy="558.0" r="3.1"/><circle cx="1159.8" cy="558.0" r="3.1"/><circle cx="1169.4" cy="558.0" r="3.1"/><circle cx="1179.0" cy="555.9" r="3.1"/><circle cx="1188.6" cy="558.0" r="3.1"/><circle cx="1198.3" cy="555.9" r="3.1"/><circle cx="1207.9" cy="558.0" r="3.1"/><circle cx="1217.5" cy="558.0" r="3.1"/><circle cx="1227.1" cy="556.3" r="3.1"/><circle cx="1236.7" cy="553.2" r="3.1"/><circle cx="1246.4" cy="533.4" r="3.1"/><circle cx="1256.0" cy="421.5" r="3.1"/><circle cx="1265.6" cy="500.0" r="3.1"/><circle cx="1275.2" cy="503.2" r="3.1"/><circle cx="1284.8" cy="496.9" r="3.1"/><circle cx="1294.5" cy="534.7" r="3.1"/><circle cx="1304.1" cy="526.1" r="3.1"/><circle cx="1313.7" cy="515.0" r="3.1"/><circle cx="1323.3" cy="520.4" r="3.1"/><circle cx="1332.9" cy="517.3" r="3.1"/><circle cx="1342.6" cy="490.8" r="3.1"/><circle cx="1352.2" cy="482.8" r="3.1"/><circle cx="1361.8" cy="514.3" r="3.1"/><circle cx="1371.4" cy="516.6" r="3.1"/><circle cx="1381.0" cy="524.2" r="3.1"/><circle cx="1390.7" cy="517.3" r="3.1"/><circle cx="1400.3" cy="534.1" r="3.1"/><circle cx="1409.9" cy="517.3" r="3.1"/><circle cx="1419.5" cy="517.3" r="3.1"/><circle cx="1429.1" cy="544.6" r="3.1"/><circle cx="1438.8" cy="545.8" r="3.1"/><circle cx="1448.4" cy="544.1" r="3.1"/><circle cx="1458.0" cy="547.1" r="3.1"/><circle cx="1467.6" cy="542.9" r="3.1"/><circle cx="1477.2" cy="540.8" r="3.1"/><circle cx="1486.9" cy="542.2" r="3.1"/><circle cx="1496.5" cy="546.2" r="3.1"/><circle cx="1506.1" cy="547.7" r="3.1"/><circle cx="1515.7" cy="547.7" r="3.1"/><circle cx="1525.3" cy="547.7" r="3.1"/><circle cx="1535.0" cy="545.6" r="3.1"/><circle cx="1544.6" cy="544.1" r="3.1"/><circle cx="1554.2" cy="547.7" r="3.1"/><circle cx="1563.8" cy="547.7" r="3.1"/><circle cx="1573.4" cy="545.6" r="3.1"/><circle cx="1583.1" cy="545.6" r="3.1"/><circle cx="1592.7" cy="557.0" r="3.1"/><circle cx="1602.3" cy="545.0" r="3.1"/><circle cx="1611.9" cy="544.1" r="3.1"/><circle cx="1621.5" cy="547.7" r="3.1"/><circle cx="1631.2" cy="547.7" r="3.1"/><circle cx="1640.8" cy="544.1" r="3.1"/><circle cx="1650.4" cy="547.7" r="3.1"/><circle cx="1660.0" cy="545.6" r="3.1"/><circle cx="1669.6" cy="544.1" r="3.1"/><circle cx="1679.3" cy="546.2" r="3.1"/><circle cx="1688.9" cy="547.7" r="3.1"/><circle cx="1698.5" cy="544.1" r="3.1"/><circle cx="1708.1" cy="546.5" r="3.1"/><circle cx="1717.7" cy="546.5" r="3.1"/><circle cx="1727.4" cy="546.5" r="3.1"/><circle cx="1737.0" cy="548.1" r="3.1"/><circle cx="1746.6" cy="546.5" r="3.1"/><circle cx="1756.2" cy="548.1" r="3.1"/><circle cx="1765.8" cy="544.6" r="3.1"/><circle cx="1775.5" cy="548.1" r="3.1"/><circle cx="1785.1" cy="546.5" r="3.1"/><circle cx="1794.7" cy="544.6" r="3.1"/><circle cx="1804.3" cy="544.6" r="3.1"/><circle cx="1813.9" cy="547.5" r="3.1"/><circle cx="1823.6" cy="547.5" r="3.1"/><circle cx="1833.2" cy="544.6" r="3.1"/><circle cx="1842.8" cy="544.6" r="3.1"/><circle cx="1852.4" cy="528.6" r="3.1"/><circle cx="1862.0" cy="546.5" r="3.1"/><circle cx="1871.7" cy="546.5" r="3.1"/><circle cx="1881.3" cy="544.6" r="3.1"/><circle cx="1890.9" cy="546.5" r="3.1"/><circle cx="1900.5" cy="524.2" r="3.1"/><circle cx="1910.1" cy="527.3" r="3.1"/><circle cx="1919.8" cy="533.9" r="3.1"/><circle cx="1929.4" cy="509.5" r="3.1"/><circle cx="1939.0" cy="509.5" r="3.1"/><circle cx="1948.6" cy="527.3" r="3.1"/></g>
<g fill="#ffffff" opacity="0.6"><circle cx="496.0" cy="552.1" r="1"/><circle cx="505.6" cy="534.5" r="1"/><circle cx="515.2" cy="539.3" r="1"/><circle cx="524.9" cy="549.2" r="1"/><circle cx="534.5" cy="549.2" r="1"/><circle cx="544.1" cy="549.2" r="1"/><circle cx="553.7" cy="551.5" r="1"/><circle cx="563.3" cy="534.9" r="1"/><circle cx="573.0" cy="524.0" r="1"/><circle cx="582.6" cy="521.0" r="1"/><circle cx="592.2" cy="513.7" r="1"/><circle cx="601.8" cy="463.5" r="1"/><circle cx="611.4" cy="474.6" r="1"/><circle cx="621.1" cy="533.9" r="1"/><circle cx="630.7" cy="550.9" r="1"/><circle cx="640.3" cy="554.4" r="1"/><circle cx="649.9" cy="517.9" r="1"/><circle cx="659.5" cy="538.7" r="1"/><circle cx="669.2" cy="538.7" r="1"/><circle cx="678.8" cy="547.7" r="1"/><circle cx="688.4" cy="552.8" r="1"/><circle cx="698.0" cy="541.2" r="1"/><circle cx="707.6" cy="526.5" r="1"/><circle cx="717.3" cy="549.6" r="1"/><circle cx="726.9" cy="557.6" r="1"/><circle cx="736.5" cy="558.0" r="1"/><circle cx="746.1" cy="558.0" r="1"/><circle cx="755.7" cy="558.0" r="1"/><circle cx="765.4" cy="558.0" r="1"/><circle cx="775.0" cy="558.0" r="1"/><circle cx="784.6" cy="558.0" r="1"/><circle cx="794.2" cy="558.0" r="1"/><circle cx="803.8" cy="558.0" r="1"/><circle cx="813.5" cy="558.0" r="1"/><circle cx="823.1" cy="555.9" r="1"/><circle cx="832.7" cy="558.0" r="1"/><circle cx="842.3" cy="558.0" r="1"/><circle cx="851.9" cy="555.9" r="1"/><circle cx="861.6" cy="558.0" r="1"/><circle cx="871.2" cy="558.0" r="1"/><circle cx="880.8" cy="555.9" r="1"/><circle cx="890.4" cy="558.0" r="1"/><circle cx="900.0" cy="558.0" r="1"/><circle cx="909.7" cy="555.9" r="1"/><circle cx="919.3" cy="558.0" r="1"/><circle cx="928.9" cy="558.0" r="1"/><circle cx="938.5" cy="558.0" r="1"/><circle cx="948.1" cy="558.0" r="1"/><circle cx="957.8" cy="555.9" r="1"/><circle cx="967.4" cy="558.0" r="1"/><circle cx="977.0" cy="558.0" r="1"/><circle cx="986.6" cy="558.0" r="1"/><circle cx="996.2" cy="558.0" r="1"/><circle cx="1005.9" cy="558.0" r="1"/><circle cx="1015.5" cy="555.9" r="1"/><circle cx="1025.1" cy="558.0" r="1"/><circle cx="1034.7" cy="558.0" r="1"/><circle cx="1044.3" cy="555.9" r="1"/><circle cx="1054.0" cy="558.0" r="1"/><circle cx="1063.6" cy="555.9" r="1"/><circle cx="1073.2" cy="558.0" r="1"/><circle cx="1082.8" cy="558.0" r="1"/><circle cx="1092.4" cy="558.0" r="1"/><circle cx="1102.1" cy="558.0" r="1"/><circle cx="1111.7" cy="558.0" r="1"/><circle cx="1121.3" cy="555.9" r="1"/><circle cx="1130.9" cy="558.0" r="1"/><circle cx="1140.5" cy="558.0" r="1"/><circle cx="1150.2" cy="558.0" r="1"/><circle cx="1159.8" cy="558.0" r="1"/><circle cx="1169.4" cy="558.0" r="1"/><circle cx="1179.0" cy="555.9" r="1"/><circle cx="1188.6" cy="558.0" r="1"/><circle cx="1198.3" cy="555.9" r="1"/><circle cx="1207.9" cy="558.0" r="1"/><circle cx="1217.5" cy="558.0" r="1"/><circle cx="1227.1" cy="556.3" r="1"/><circle cx="1236.7" cy="553.2" r="1"/><circle cx="1246.4" cy="533.4" r="1"/><circle cx="1256.0" cy="421.5" r="1"/><circle cx="1265.6" cy="500.0" r="1"/><circle cx="1275.2" cy="503.2" r="1"/><circle cx="1284.8" cy="496.9" r="1"/><circle cx="1294.5" cy="534.7" r="1"/><circle cx="1304.1" cy="526.1" r="1"/><circle cx="1313.7" cy="515.0" r="1"/><circle cx="1323.3" cy="520.4" r="1"/><circle cx="1332.9" cy="517.3" r="1"/><circle cx="1342.6" cy="490.8" r="1"/><circle cx="1352.2" cy="482.8" r="1"/><circle cx="1361.8" cy="514.3" r="1"/><circle cx="1371.4" cy="516.6" r="1"/><circle cx="1381.0" cy="524.2" r="1"/><circle cx="1390.7" cy="517.3" r="1"/><circle cx="1400.3" cy="534.1" r="1"/><circle cx="1409.9" cy="517.3" r="1"/><circle cx="1419.5" cy="517.3" r="1"/><circle cx="1429.1" cy="544.6" r="1"/><circle cx="1438.8" cy="545.8" r="1"/><circle cx="1448.4" cy="544.1" r="1"/><circle cx="1458.0" cy="547.1" r="1"/><circle cx="1467.6" cy="542.9" r="1"/><circle cx="1477.2" cy="540.8" r="1"/><circle cx="1486.9" cy="542.2" r="1"/><circle cx="1496.5" cy="546.2" r="1"/><circle cx="1506.1" cy="547.7" r="1"/><circle cx="1515.7" cy="547.7" r="1"/><circle cx="1525.3" cy="547.7" r="1"/><circle cx="1535.0" cy="545.6" r="1"/><circle cx="1544.6" cy="544.1" r="1"/><circle cx="1554.2" cy="547.7" r="1"/><circle cx="1563.8" cy="547.7" r="1"/><circle cx="1573.4" cy="545.6" r="1"/><circle cx="1583.1" cy="545.6" r="1"/><circle cx="1592.7" cy="557.0" r="1"/><circle cx="1602.3" cy="545.0" r="1"/><circle cx="1611.9" cy="544.1" r="1"/><circle cx="1621.5" cy="547.7" r="1"/><circle cx="1631.2" cy="547.7" r="1"/><circle cx="1640.8" cy="544.1" r="1"/><circle cx="1650.4" cy="547.7" r="1"/><circle cx="1660.0" cy="545.6" r="1"/><circle cx="1669.6" cy="544.1" r="1"/><circle cx="1679.3" cy="546.2" r="1"/><circle cx="1688.9" cy="547.7" r="1"/><circle cx="1698.5" cy="544.1" r="1"/><circle cx="1708.1" cy="546.5" r="1"/><circle cx="1717.7" cy="546.5" r="1"/><circle cx="1727.4" cy="546.5" r="1"/><circle cx="1737.0" cy="548.1" r="1"/><circle cx="1746.6" cy="546.5" r="1"/><circle cx="1756.2" cy="548.1" r="1"/><circle cx="1765.8" cy="544.6" r="1"/><circle cx="1775.5" cy="548.1" r="1"/><circle cx="1785.1" cy="546.5" r="1"/><circle cx="1794.7" cy="544.6" r="1"/><circle cx="1804.3" cy="544.6" r="1"/><circle cx="1813.9" cy="547.5" r="1"/><circle cx="1823.6" cy="547.5" r="1"/><circle cx="1833.2" cy="544.6" r="1"/><circle cx="1842.8" cy="544.6" r="1"/><circle cx="1852.4" cy="528.6" r="1"/><circle cx="1862.0" cy="546.5" r="1"/><circle cx="1871.7" cy="546.5" r="1"/><circle cx="1881.3" cy="544.6" r="1"/><circle cx="1890.9" cy="546.5" r="1"/><circle cx="1900.5" cy="524.2" r="1"/><circle cx="1910.1" cy="527.3" r="1"/><circle cx="1919.8" cy="533.9" r="1"/><circle cx="1929.4" cy="509.5" r="1"/><circle cx="1939.0" cy="509.5" r="1"/><circle cx="1948.6" cy="527.3" r="1"/></g>
<path d="M496.0 948.8 C499.2 942.5 502.4 929.8 505.6 929.8 C508.8 929.8 512.0 932.9 515.2 936.0 C518.4 939.1 521.7 948.3 524.9 948.3 C528.1 948.3 531.3 947.0 534.5 947.0 C537.7 947.0 540.9 948.2 544.1 948.8 C547.3 949.5 550.5 950.7 553.7 950.7 C556.9 950.7 560.1 931.1 563.3 925.0 C566.5 918.9 569.8 916.4 573.0 914.0 C576.2 911.7 579.4 912.3 582.6 911.1 C585.8 909.9 589.0 911.0 592.2 903.1 C595.4 895.1 598.6 838.8 601.8 838.8 C605.0 838.8 608.2 839.4 611.4 851.7 C614.6 864.0 617.9 896.0 621.1 912.7 C624.3 929.4 627.5 949.4 630.7 951.8 C633.9 954.2 637.1 954.2 640.3 954.2 C643.5 954.2 646.7 907.9 649.9 907.9 C653.1 907.9 656.3 932.6 659.5 933.6 C662.7 934.6 666.0 934.2 669.2 934.6 C672.4 935.1 675.6 942.8 678.8 945.6 C682.0 948.5 685.2 951.8 688.4 951.8 C691.6 951.8 694.8 942.4 698.0 937.1 C701.2 931.7 704.4 919.9 707.6 919.9 C710.8 919.9 714.1 942.8 717.3 949.4 C720.5 955.9 723.7 959.3 726.9 959.3 C730.1 959.3 733.3 959.3 736.5 959.3 C739.7 959.3 742.9 956.6 746.1 956.6 C749.3 956.6 752.5 958.5 755.7 959.0 C758.9 959.5 762.2 959.5 765.4 959.5 C768.6 959.5 771.8 956.6 775.0 956.6 C778.2 956.6 781.4 959.3 784.6 959.3 C787.8 959.3 791.0 956.6 794.2 956.6 C797.4 956.6 800.6 959.5 803.8 959.5 C807.0 959.5 810.3 959.5 813.5 959.0 C816.7 958.5 819.9 956.6 823.1 956.6 C826.3 956.6 829.5 959.3 832.7 959.3 C835.9 959.3 839.1 959.3 842.3 959.3 C845.5 959.3 848.7 957.1 851.9 957.1 C855.1 957.1 858.4 959.5 861.6 959.5 C864.8 959.5 868.0 959.4 871.2 959.0 C874.4 958.6 877.6 957.1 880.8 957.1 C884.0 957.1 887.2 959.3 890.4 959.3 C893.6 959.3 896.8 959.3 900.0 959.3 C903.2 959.3 906.5 957.1 909.7 957.1 C912.9 957.1 916.1 959.5 919.3 959.5 C922.5 959.5 925.7 957.1 928.9 957.1 C932.1 957.1 935.3 959.5 938.5 959.5 C941.7 959.5 944.9 959.5 948.1 959.3 C951.3 959.0 954.6 957.1 957.8 957.1 C961.0 957.1 964.2 959.0 967.4 959.3 C970.6 959.5 973.8 959.5 977.0 959.5 C980.2 959.5 983.4 957.1 986.6 957.1 C989.8 957.1 993.0 959.5 996.2 959.5 C999.4 959.5 1002.7 959.5 1005.9 959.3 C1009.1 959.0 1012.3 956.9 1015.5 956.9 C1018.7 956.9 1021.9 959.0 1025.1 959.3 C1028.3 959.5 1031.5 959.5 1034.7 959.5 C1037.9 959.5 1041.1 956.9 1044.3 956.9 C1047.5 956.9 1050.8 959.5 1054.0 959.5 C1057.2 959.5 1060.4 956.9 1063.6 956.9 C1066.8 956.9 1070.0 959.3 1073.2 959.3 C1076.4 959.3 1079.6 959.3 1082.8 959.3 C1086.0 959.3 1089.2 959.5 1092.4 959.5 C1095.6 959.5 1098.9 959.0 1102.1 959.0 C1105.3 959.0 1108.5 959.5 1111.7 959.5 C1114.9 959.5 1118.1 956.9 1121.3 956.9 C1124.5 956.9 1127.7 959.3 1130.9 959.3 C1134.1 959.3 1137.3 959.3 1140.5 959.3 C1143.7 959.3 1147.0 959.5 1150.2 959.5 C1153.4 959.5 1156.6 959.0 1159.8 959.0 C1163.0 959.0 1166.2 959.5 1169.4 959.5 C1172.6 959.5 1175.8 956.9 1179.0 956.9 C1182.2 956.9 1185.4 959.3 1188.6 959.3 C1191.8 959.3 1195.1 956.9 1198.3 956.9 C1201.5 956.9 1204.7 959.5 1207.9 959.5 C1211.1 959.5 1214.3 959.0 1217.5 959.0 C1220.7 959.0 1223.9 959.5 1227.1 959.5 C1230.3 959.5 1233.5 959.4 1236.7 958.5 C1239.9 957.5 1243.2 958.4 1246.4 932.2 C1249.6 906.0 1252.8 784.3 1256.0 784.3 C1259.2 784.3 1262.4 881.7 1265.6 885.1 C1268.8 888.6 1272.0 888.6 1275.2 888.6 C1278.4 888.6 1281.6 882.7 1284.8 882.7 C1288.0 882.7 1291.3 929.3 1294.5 929.3 C1297.7 929.3 1300.9 923.5 1304.1 919.1 C1307.3 914.8 1310.5 903.1 1313.7 903.1 C1316.9 903.1 1320.1 911.9 1323.3 911.9 C1326.5 911.9 1329.7 909.9 1332.9 903.6 C1336.1 897.3 1339.4 880.6 1342.6 873.9 C1345.8 867.2 1349.0 863.2 1352.2 863.2 C1355.4 863.2 1358.6 903.9 1361.8 905.7 C1365.0 907.6 1368.2 907.2 1371.4 907.6 C1374.6 908.1 1377.8 917.0 1381.0 917.0 C1384.2 917.0 1387.5 908.2 1390.7 908.2 C1393.9 908.2 1397.1 928.2 1400.3 928.2 C1403.5 928.2 1406.7 908.2 1409.9 908.2 C1413.1 908.2 1416.3 908.2 1419.5 908.2 C1422.7 908.2 1425.9 940.8 1429.1 942.4 C1432.3 944.0 1435.6 944.0 1438.8 944.0 C1442.0 944.0 1445.2 942.1 1448.4 942.1 C1451.6 942.1 1454.8 945.9 1458.0 945.9 C1461.2 945.9 1464.4 941.9 1467.6 940.5 C1470.8 939.2 1474.0 937.9 1477.2 937.9 C1480.4 937.9 1483.7 938.6 1486.9 939.7 C1490.1 940.9 1493.3 943.7 1496.5 944.8 C1499.7 946.0 1502.9 946.7 1506.1 946.7 C1509.3 946.7 1512.5 946.7 1515.7 946.7 C1518.9 946.7 1522.1 946.7 1525.3 946.7 C1528.5 946.7 1531.8 944.8 1535.0 944.0 C1538.2 943.3 1541.4 942.1 1544.6 942.1 C1547.8 942.1 1551.0 946.7 1554.2 946.7 C1557.4 946.7 1560.6 946.7 1563.8 946.7 C1567.0 946.7 1570.2 944.0 1573.4 944.0 C1576.6 944.0 1579.9 944.0 1583.1 944.0 C1586.3 944.0 1589.5 958.5 1592.7 958.5 C1595.9 958.5 1599.1 944.3 1602.3 943.2 C1605.5 942.1 1608.7 942.1 1611.9 942.1 C1615.1 942.1 1618.3 946.7 1621.5 946.7 C1624.7 946.7 1628.0 946.7 1631.2 946.7 C1634.4 946.7 1637.6 942.1 1640.8 942.1 C1644.0 942.1 1647.2 945.9 1650.4 945.9 C1653.6 945.9 1656.8 944.1 1660.0 943.5 C1663.2 942.9 1666.4 942.1 1669.6 942.1 C1672.8 942.1 1676.1 944.1 1679.3 944.8 C1682.5 945.6 1685.7 946.7 1688.9 946.7 C1692.1 946.7 1695.3 942.1 1698.5 942.1 C1701.7 942.1 1704.9 945.1 1708.1 945.1 C1711.3 945.1 1714.5 945.1 1717.7 945.1 C1720.9 945.1 1724.2 945.1 1727.4 945.1 C1730.6 945.1 1733.8 947.2 1737.0 947.2 C1740.2 947.2 1743.4 945.1 1746.6 945.1 C1749.8 945.1 1753.0 947.2 1756.2 947.2 C1759.4 947.2 1762.6 942.7 1765.8 942.7 C1769.0 942.7 1772.3 947.2 1775.5 947.2 C1778.7 947.2 1781.9 945.8 1785.1 945.1 C1788.3 944.3 1791.5 942.7 1794.7 942.7 C1797.9 942.7 1801.1 942.7 1804.3 942.7 C1807.5 942.7 1810.7 946.4 1813.9 946.4 C1817.1 946.4 1820.4 946.4 1823.6 946.4 C1826.8 946.4 1830.0 942.7 1833.2 942.7 C1836.4 942.7 1839.6 942.7 1842.8 942.7 C1846.0 942.7 1849.2 922.9 1852.4 922.9 C1855.6 922.9 1858.8 945.1 1862.0 945.1 C1865.2 945.1 1868.5 945.1 1871.7 945.1 C1874.9 945.1 1878.1 942.7 1881.3 942.7 C1884.5 942.7 1887.7 945.1 1890.9 945.1 C1894.1 945.1 1897.3 917.8 1900.5 917.8 C1903.7 917.8 1906.9 919.3 1910.1 921.3 C1913.3 923.2 1916.6 929.6 1919.8 929.6 C1923.0 929.6 1926.2 897.4 1929.4 897.4 C1932.6 897.4 1935.8 897.4 1939.0 898.0 C1942.2 898.5 1945.4 913.1 1948.6 920.7" fill="none" stroke="rgba(0,0,0,0.1)" stroke-width="4.8" stroke-linejoin="round"/>
<path d="M496.0 948.8 C499.2 942.5 502.4 929.8 505.6 929.8 C508.8 929.8 512.0 932.9 515.2 936.0 C518.4 939.1 521.7 948.3 524.9 948.3 C528.1 948.3 531.3 947.0 534.5 947.0 C537.7 947.0 540.9 948.2 544.1 948.8 C547.3 949.5 550.5 950.7 553.7 950.7 C556.9 950.7 560.1 931.1 563.3 925.0 C566.5 918.9 569.8 916.4 573.0 914.0 C576.2 911.7 579.4 912.3 582.6 911.1 C585.8 909.9 589.0 911.0 592.2 903.1 C595.4 895.1 598.6 838.8 601.8 838.8 C605.0 838.8 608.2 839.4 611.4 851.7 C614.6 864.0 617.9 896.0 621.1 912.7 C624.3 929.4 627.5 949.4 630.7 951.8 C633.9 954.2 637.1 954.2 640.3 954.2 C643.5 954.2 646.7 907.9 649.9 907.9 C653.1 907.9 656.3 932.6 659.5 933.6 C662.7 934.6 666.0 934.2 669.2 934.6 C672.4 935.1 675.6 942.8 678.8 945.6 C682.0 948.5 685.2 951.8 688.4 951.8 C691.6 951.8 694.8 942.4 698.0 937.1 C701.2 931.7 704.4 919.9 707.6 919.9 C710.8 919.9 714.1 942.8 717.3 949.4 C720.5 955.9 723.7 959.3 726.9 959.3 C730.1 959.3 733.3 959.3 736.5 959.3 C739.7 959.3 742.9 956.6 746.1 956.6 C749.3 956.6 752.5 958.5 755.7 959.0 C758.9 959.5 762.2 959.5 765.4 959.5 C768.6 959.5 771.8 956.6 775.0 956.6 C778.2 956.6 781.4 959.3 784.6 959.3 C787.8 959.3 791.0 956.6 794.2 956.6 C797.4 956.6 800.6 959.5 803.8 959.5 C807.0 959.5 810.3 959.5 813.5 959.0 C816.7 958.5 819.9 956.6 823.1 956.6 C826.3 956.6 829.5 959.3 832.7 959.3 C835.9 959.3 839.1 959.3 842.3 959.3 C845.5 959.3 848.7 957.1 851.9 957.1 C855.1 957.1 858.4 959.5 861.6 959.5 C864.8 959.5 868.0 959.4 871.2 959.0 C874.4 958.6 877.6 957.1 880.8 957.1 C884.0 957.1 887.2 959.3 890.4 959.3 C893.6 959.3 896.8 959.3 900.0 959.3 C903.2 959.3 906.5 957.1 909.7 957.1 C912.9 957.1 916.1 959.5 919.3 959.5 C922.5 959.5 925.7 957.1 928.9 957.1 C932.1 957.1 935.3 959.5 938.5 959.5 C941.7 959.5 944.9 959.5 948.1 959.3 C951.3 959.0 954.6 957.1 957.8 957.1 C961.0 957.1 964.2 959.0 967.4 959.3 C970.6 959.5 973.8 959.5 977.0 959.5 C980.2 959.5 983.4 957.1 986.6 957.1 C989.8 957.1 993.0 959.5 996.2 959.5 C999.4 959.5 1002.7 959.5 1005.9 959.3 C1009.1 959.0 1012.3 956.9 1015.5 956.9 C1018.7 956.9 1021.9 959.0 1025.1 959.3 C1028.3 959.5 1031.5 959.5 1034.7 959.5 C1037.9 959.5 1041.1 956.9 1044.3 956.9 C1047.5 956.9 1050.8 959.5 1054.0 959.5 C1057.2 959.5 1060.4 956.9 1063.6 956.9 C1066.8 956.9 1070.0 959.3 1073.2 959.3 C1076.4 959.3 1079.6 959.3 1082.8 959.3 C1086.0 959.3 1089.2 959.5 1092.4 959.5 C1095.6 959.5 1098.9 959.0 1102.1 959.0 C1105.3 959.0 1108.5 959.5 1111.7 959.5 C1114.9 959.5 1118.1 956.9 1121.3 956.9 C1124.5 956.9 1127.7 959.3 1130.9 959.3 C1134.1 959.3 1137.3 959.3 1140.5 959.3 C1143.7 959.3 1147.0 959.5 1150.2 959.5 C1153.4 959.5 1156.6 959.0 1159.8 959.0 C1163.0 959.0 1166.2 959.5 1169.4 959.5 C1172.6 959.5 1175.8 956.9 1179.0 956.9 C1182.2 956.9 1185.4 959.3 1188.6 959.3 C1191.8 959.3 1195.1 956.9 1198.3 956.9 C1201.5 956.9 1204.7 959.5 1207.9 959.5 C1211.1 959.5 1214.3 959.0 1217.5 959.0 C1220.7 959.0 1223.9 959.5 1227.1 959.5 C1230.3 959.5 1233.5 959.4 1236.7 958.5 C1239.9 957.5 1243.2 958.4 1246.4 932.2 C1249.6 906.0 1252.8 784.3 1256.0 784.3 C1259.2 784.3 1262.4 881.7 1265.6 885.1 C1268.8 888.6 1272.0 888.6 1275.2 888.6 C1278.4 888.6 1281.6 882.7 1284.8 882.7 C1288.0 882.7 1291.3 929.3 1294.5 929.3 C1297.7 929.3 1300.9 923.5 1304.1 919.1 C1307.3 914.8 1310.5 903.1 1313.7 903.1 C1316.9 903.1 1320.1 911.9 1323.3 911.9 C1326.5 911.9 1329.7 909.9 1332.9 903.6 C1336.1 897.3 1339.4 880.6 1342.6 873.9 C1345.8 867.2 1349.0 863.2 1352.2 863.2 C1355.4 863.2 1358.6 903.9 1361.8 905.7 C1365.0 907.6 1368.2 907.2 1371.4 907.6 C1374.6 908.1 1377.8 917.0 1381.0 917.0 C1384.2 917.0 1387.5 908.2 1390.7 908.2 C1393.9 908.2 1397.1 928.2 1400.3 928.2 C1403.5 928.2 1406.7 908.2 1409.9 908.2 C1413.1 908.2 1416.3 908.2 1419.5 908.2 C1422.7 908.2 1425.9 940.8 1429.1 942.4 C1432.3 944.0 1435.6 944.0 1438.8 944.0 C1442.0 944.0 1445.2 942.1 1448.4 942.1 C1451.6 942.1 1454.8 945.9 1458.0 945.9 C1461.2 945.9 1464.4 941.9 1467.6 940.5 C1470.8 939.2 1474.0 937.9 1477.2 937.9 C1480.4 937.9 1483.7 938.6 1486.9 939.7 C1490.1 940.9 1493.3 943.7 1496.5 944.8 C1499.7 946.0 1502.9 946.7 1506.1 946.7 C1509.3 946.7 1512.5 946.7 1515.7 946.7 C1518.9 946.7 1522.1 946.7 1525.3 946.7 C1528.5 946.7 1531.8 944.8 1535.0 944.0 C1538.2 943.3 1541.4 942.1 1544.6 942.1 C1547.8 942.1 1551.0 946.7 1554.2 946.7 C1557.4 946.7 1560.6 946.7 1563.8 946.7 C1567.0 946.7 1570.2 944.0 1573.4 944.0 C1576.6 944.0 1579.9 944.0 1583.1 944.0 C1586.3 944.0 1589.5 958.5 1592.7 958.5 C1595.9 958.5 1599.1 944.3 1602.3 943.2 C1605.5 942.1 1608.7 942.1 1611.9 942.1 C1615.1 942.1 1618.3 946.7 1621.5 946.7 C1624.7 946.7 1628.0 946.7 1631.2 946.7 C1634.4 946.7 1637.6 942.1 1640.8 942.1 C1644.0 942.1 1647.2 945.9 1650.4 945.9 C1653.6 945.9 1656.8 944.1 1660.0 943.5 C1663.2 942.9 1666.4 942.1 1669.6 942.1 C1672.8 942.1 1676.1 944.1 1679.3 944.8 C1682.5 945.6 1685.7 946.7 1688.9 946.7 C1692.1 946.7 1695.3 942.1 1698.5 942.1 C1701.7 942.1 1704.9 945.1 1708.1 945.1 C1711.3 945.1 1714.5 945.1 1717.7 945.1 C1720.9 945.1 1724.2 945.1 1727.4 945.1 C1730.6 945.1 1733.8 947.2 1737.0 947.2 C1740.2 947.2 1743.4 945.1 1746.6 945.1 C1749.8 945.1 1753.0 947.2 1756.2 947.2 C1759.4 947.2 1762.6 942.7 1765.8 942.7 C1769.0 942.7 1772.3 947.2 1775.5 947.2 C1778.7 947.2 1781.9 945.8 1785.1 945.1 C1788.3 944.3 1791.5 942.7 1794.7 942.7 C1797.9 942.7 1801.1 942.7 1804.3 942.7 C1807.5 942.7 1810.7 946.4 1813.9 946.4 C1817.1 946.4 1820.4 946.4 1823.6 946.4 C1826.8 946.4 1830.0 942.7 1833.2 942.7 C1836.4 942.7 1839.6 942.7 1842.8 942.7 C1846.0 942.7 1849.2 922.9 1852.4 922.9 C1855.6 922.9 1858.8 945.1 1862.0 945.1 C1865.2 945.1 1868.5 945.1 1871.7 945.1 C1874.9 945.1 1878.1 942.7 1881.3 942.7 C1884.5 942.7 1887.7 945.1 1890.9 945.1 C1894.1 945.1 1897.3 917.8 1900.5 917.8 C1903.7 917.8 1906.9 919.3 1910.1 921.3 C1913.3 923.2 1916.6 929.6 1919.8 929.6 C1923.0 929.6 1926.2 897.4 1929.4 897.4 C1932.6 897.4 1935.8 897.4 1939.0 898.0 C1942.2 898.5 1945.4 913.1 1948.6 920.7" fill="none" stroke="rgba(0,0,0,0.1)" stroke-width="4.8" stroke-linejoin="round"/>
<path d="M496.0 948.8 C499.2 942.5 502.4 929.8 505.6 929.8 C508.8 929.8 512.0 932.9 515.2 936.0 C518.4 939.1 521.7 948.3 524.9 948.3 C528.1 948.3 531.3 947.0 534.5 947.0 C537.7 947.0 540.9 948.2 544.1 948.8 C547.3 949.5 550.5 950.7 553.7 950.7 C556.9 950.7 560.1 931.1 563.3 925.0 C566.5 918.9 569.8 916.4 573.0 914.0 C576.2 911.7 579.4 912.3 582.6 911.1 C585.8 909.9 589.0 911.0 592.2 903.1 C595.4 895.1 598.6 838.8 601.8 838.8 C605.0 838.8 608.2 839.4 611.4 851.7 C614.6 864.0 617.9 896.0 621.1 912.7 C624.3 929.4 627.5 949.4 630.7 951.8 C633.9 954.2 637.1 954.2 640.3 954.2 C643.5 954.2 646.7 907.9 649.9 907.9 C653.1 907.9 656.3 932.6 659.5 933.6 C662.7 934.6 666.0 934.2 669.2 934.6 C672.4 935.1 675.6 942.8 678.8 945.6 C682.0 948.5 685.2 951.8 688.4 951.8 C691.6 951.8 694.8 942.4 698.0 937.1 C701.2 931.7 704.4 919.9 707.6 919.9 C710.8 919.9 714.1 942.8 717.3 949.4 C720.5 955.9 723.7 959.3 726.9 959.3 C730.1 959.3 733.3 959.3 736.5 959.3 C739.7 959.3 742.9 956.6 746.1 956.6 C749.3 956.6 752.5 958.5 755.7 959.0 C758.9 959.5 762.2 959.5 765.4 959.5 C768.6 959.5 771.8 956.6 775.0 956.6 C778.2 956.6 781.4 959.3 784.6 959.3 C787.8 959.3 791.0 956.6 794.2 956.6 C797.4 956.6 800.6 959.5 803.8 959.5 C807.0 959.5 810.3 959.5 813.5 959.0 C816.7 958.5 819.9 956.6 823.1 956.6 C826.3 956.6 829.5 959.3 832.7 959.3 C835.9 959.3 839.1 959.3 842.3 959.3 C845.5 959.3 848.7 957.1 851.9 957.1 C855.1 957.1 858.4 959.5 861.6 959.5 C864.8 959.5 868.0 959.4 871.2 959.0 C874.4 958.6 877.6 957.1 880.8 957.1 C884.0 957.1 887.2 959.3 890.4 959.3 C893.6 959.3 896.8 959.3 900.0 959.3 C903.2 959.3 906.5 957.1 909.7 957.1 C912.9 957.1 916.1 959.5 919.3 959.5 C922.5 959.5 925.7 957.1 928.9 957.1 C932.1 957.1 935.3 959.5 938.5 959.5 C941.7 959.5 944.9 959.5 948.1 959.3 C951.3 959.0 954.6 957.1 957.8 957.1 C961.0 957.1 964.2 959.0 967.4 959.3 C970.6 959.5 973.8 959.5 977.0 959.5 C980.2 959.5 983.4 957.1 986.6 957.1 C989.8 957.1 993.0 959.5 996.2 959.5 C999.4 959.5 1002.7 959.5 1005.9 959.3 C1009.1 959.0 1012.3 956.9 1015.5 956.9 C1018.7 956.9 1021.9 959.0 1025.1 959.3 C1028.3 959.5 1031.5 959.5 1034.7 959.5 C1037.9 959.5 1041.1 956.9 1044.3 956.9 C1047.5 956.9 1050.8 959.5 1054.0 959.5 C1057.2 959.5 1060.4 956.9 1063.6 956.9 C1066.8 956.9 1070.0 959.3 1073.2 959.3 C1076.4 959.3 1079.6 959.3 1082.8 959.3 C1086.0 959.3 1089.2 959.5 1092.4 959.5 C1095.6 959.5 1098.9 959.0 1102.1 959.0 C1105.3 959.0 1108.5 959.5 1111.7 959.5 C1114.9 959.5 1118.1 956.9 1121.3 956.9 C1124.5 956.9 1127.7 959.3 1130.9 959.3 C1134.1 959.3 1137.3 959.3 1140.5 959.3 C1143.7 959.3 1147.0 959.5 1150.2 959.5 C1153.4 959.5 1156.6 959.0 1159.8 959.0 C1163.0 959.0 1166.2 959.5 1169.4 959.5 C1172.6 959.5 1175.8 956.9 1179.0 956.9 C1182.2 956.9 1185.4 959.3 1188.6 959.3 C1191.8 959.3 1195.1 956.9 1198.3 956.9 C1201.5 956.9 1204.7 959.5 1207.9 959.5 C1211.1 959.5 1214.3 959.0 1217.5 959.0 C1220.7 959.0 1223.9 959.5 1227.1 959.5 C1230.3 959.5 1233.5 959.4 1236.7 958.5 C1239.9 957.5 1243.2 958.4 1246.4 932.2 C1249.6 906.0 1252.8 784.3 1256.0 784.3 C1259.2 784.3 1262.4 881.7 1265.6 885.1 C1268.8 888.6 1272.0 888.6 1275.2 888.6 C1278.4 888.6 1281.6 882.7 1284.8 882.7 C1288.0 882.7 1291.3 929.3 1294.5 929.3 C1297.7 929.3 1300.9 923.5 1304.1 919.1 C1307.3 914.8 1310.5 903.1 1313.7 903.1 C1316.9 903.1 1320.1 911.9 1323.3 911.9 C1326.5 911.9 1329.7 909.9 1332.9 903.6 C1336.1 897.3 1339.4 880.6 1342.6 873.9 C1345.8 867.2 1349.0 863.2 1352.2 863.2 C1355.4 863.2 1358.6 903.9 1361.8 905.7 C1365.0 907.6 1368.2 907.2 1371.4 907.6 C1374.6 908.1 1377.8 917.0 1381.0 917.0 C1384.2 917.0 1387.5 908.2 1390.7 908.2 C1393.9 908.2 1397.1 928.2 1400.3 928.2 C1403.5 928.2 1406.7 908.2 1409.9 908.2 C1413.1 908.2 1416.3 908.2 1419.5 908.2 C1422.7 908.2 1425.9 940.8 1429.1 942.4 C1432.3 944.0 1435.6 944.0 1438.8 944.0 C1442.0 944.0 1445.2 942.1 1448.4 942.1 C1451.6 942.1 1454.8 945.9 1458.0 945.9 C1461.2 945.9 1464.4 941.9 1467.6 940.5 C1470.8 939.2 1474.0 937.9 1477.2 937.9 C1480.4 937.9 1483.7 938.6 1486.9 939.7 C1490.1 940.9 1493.3 943.7 1496.5 944.8 C1499.7 946.0 1502.9 946.7 1506.1 946.7 C1509.3 946.7 1512.5 946.7 1515.7 946.7 C1518.9 946.7 1522.1 946.7 1525.3 946.7 C1528.5 946.7 1531.8 944.8 1535.0 944.0 C1538.2 943.3 1541.4 942.1 1544.6 942.1 C1547.8 942.1 1551.0 946.7 1554.2 946.7 C1557.4 946.7 1560.6 946.7 1563.8 946.7 C1567.0 946.7 1570.2 944.0 1573.4 944.0 C1576.6 944.0 1579.9 944.0 1583.1 944.0 C1586.3 944.0 1589.5 958.5 1592.7 958.5 C1595.9 958.5 1599.1 944.3 1602.3 943.2 C1605.5 942.1 1608.7 942.1 1611.9 942.1 C1615.1 942.1 1618.3 946.7 1621.5 946.7 C1624.7 946.7 1628.0 946.7 1631.2 946.7 C1634.4 946.7 1637.6 942.1 1640.8 942.1 C1644.0 942.1 1647.2 945.9 1650.4 945.9 C1653.6 945.9 1656.8 944.1 1660.0 943.5 C1663.2 942.9 1666.4 942.1 1669.6 942.1 C1672.8 942.1 1676.1 944.1 1679.3 944.8 C1682.5 945.6 1685.7 946.7 1688.9 946.7 C1692.1 946.7 1695.3 942.1 1698.5 942.1 C1701.7 942.1 1704.9 945.1 1708.1 945.1 C1711.3 945.1 1714.5 945.1 1717.7 945.1 C1720.9 945.1 1724.2 945.1 1727.4 945.1 C1730.6 945.1 1733.8 947.2 1737.0 947.2 C1740.2 947.2 1743.4 945.1 1746.6 945.1 C1749.8 945.1 1753.0 947.2 1756.2 947.2 C1759.4 947.2 1762.6 942.7 1765.8 942.7 C1769.0 942.7 1772.3 947.2 1775.5 947.2 C1778.7 947.2 1781.9 945.8 1785.1 945.1 C1788.3 944.3 1791.5 942.7 1794.7 942.7 C1797.9 942.7 1801.1 942.7 1804.3 942.7 C1807.5 942.7 1810.7 946.4 1813.9 946.4 C1817.1 946.4 1820.4 946.4 1823.6 946.4 C1826.8 946.4 1830.0 942.7 1833.2 942.7 C1836.4 942.7 1839.6 942.7 1842.8 942.7 C1846.0 942.7 1849.2 922.9 1852.4 922.9 C1855.6 922.9 1858.8 945.1 1862.0 945.1 C1865.2 945.1 1868.5 945.1 1871.7 945.1 C1874.9 945.1 1878.1 942.7 1881.3 942.7 C1884.5 942.7 1887.7 945.1 1890.9 945.1 C1894.1 945.1 1897.3 917.8 1900.5 917.8 C1903.7 917.8 1906.9 919.3 1910.1 921.3 C1913.3 923.2 1916.6 929.6 1919.8 929.6 C1923.0 929.6 1926.2 897.4 1929.4 897.4 C1932.6 897.4 1935.8 897.4 1939.0 898.0 C1942.2 898.5 1945.4 913.1 1948.6 920.7" fill="none" stroke="rgba(0,0,0,0.1)" stroke-width="4.8" stroke-linejoin="round"/>
<path d="M496.0 948.8 C499.2 942.5 502.4 929.8 505.6 929.8 C508.8 929.8 512.0 932.9 515.2 936.0 C518.4 939.1 521.7 948.3 524.9 948.3 C528.1 948.3 531.3 947.0 534.5 947.0 C537.7 947.0 540.9 948.2 544.1 948.8 C547.3 949.5 550.5 950.7 553.7 950.7 C556.9 950.7 560.1 931.1 563.3 925.0 C566.5 918.9 569.8 916.4 573.0 914.0 C576.2 911.7 579.4 912.3 582.6 911.1 C585.8 909.9 589.0 911.0 592.2 903.1 C595.4 895.1 598.6 838.8 601.8 838.8 C605.0 838.8 608.2 839.4 611.4 851.7 C614.6 864.0 617.9 896.0 621.1 912.7 C624.3 929.4 627.5 949.4 630.7 951.8 C633.9 954.2 637.1 954.2 640.3 954.2 C643.5 954.2 646.7 907.9 649.9 907.9 C653.1 907.9 656.3 932.6 659.5 933.6 C662.7 934.6 666.0 934.2 669.2 934.6 C672.4 935.1 675.6 942.8 678.8 945.6 C682.0 948.5 685.2 951.8 688.4 951.8 C691.6 951.8 694.8 942.4 698.0 937.1 C701.2 931.7 704.4 919.9 707.6 919.9 C710.8 919.9 714.1 942.8 717.3 949.4 C720.5 955.9 723.7 959.3 726.9 959.3 C730.1 959.3 733.3 959.3 736.5 959.3 C739.7 959.3 742.9 956.6 746.1 956.6 C749.3 956.6 752.5 958.5 755.7 959.0 C758.9 959.5 762.2 959.5 765.4 959.5 C768.6 959.5 771.8 956.6 775.0 956.6 C778.2 956.6 781.4 959.3 784.6 959.3 C787.8 959.3 791.0 956.6 794.2 956.6 C797.4 956.6 800.6 959.5 803.8 959.5 C807.0 959.5 810.3 959.5 813.5 959.0 C816.7 958.5 819.9 956.6 823.1 956.6 C826.3 956.6 829.5 959.3 832.7 959.3 C835.9 959.3 839.1 959.3 842.3 959.3 C845.5 959.3 848.7 957.1 851.9 957.1 C855.1 957.1 858.4 959.5 861.6 959.5 C864.8 959.5 868.0 959.4 871.2 959.0 C874.4 958.6 877.6 957.1 880.8 957.1 C884.0 957.1 887.2 959.3 890.4 959.3 C893.6 959.3 896.8 959.3 900.0 959.3 C903.2 959.3 906.5 957.1 909.7 957.1 C912.9 957.1 916.1 959.5 919.3 959.5 C922.5 959.5 925.7 957.1 928.9 957.1 C932.1 957.1 935.3 959.5 938.5 959.5 C941.7 959.5 944.9 959.5 948.1 959.3 C951.3 959.0 954.6 957.1 957.8 957.1 C961.0 957.1 964.2 959.0 967.4 959.3 C970.6 959.5 973.8 959.5 977.0 959.5 C980.2 959.5 983.4 957.1 986.6 957.1 C989.8 957.1 993.0 959.5 996.2 959.5 C999.4 959.5 1002.7 959.5 1005.9 959.3 C1009.1 959.0 1012.3 956.9 1015.5 956.9 C1018.7 956.9 1021.9 959.0 1025.1 959.3 C1028.3 959.5 1031.5 959.5 1034.7 959.5 C1037.9 959.5 1041.1 956.9 1044.3 956.9 C1047.5 956.9 1050.8 959.5 1054.0 959.5 C1057.2 959.5 1060.4 956.9 1063.6 956.9 C1066.8 956.9 1070.0 959.3 1073.2 959.3 C1076.4 959.3 1079.6 959.3 1082.8 959.3 C1086.0 959.3 1089.2 959.5 1092.4 959.5 C1095.6 959.5 1098.9 959.0 1102.1 959.0 C1105.3 959.0 1108.5 959.5 1111.7 959.5 C1114.9 959.5 1118.1 956.9 1121.3 956.9 C1124.5 956.9 1127.7 959.3 1130.9 959.3 C1134.1 959.3 1137.3 959.3 1140.5 959.3 C1143.7 959.3 1147.0 959.5 1150.2 959.5 C1153.4 959.5 1156.6 959.0 1159.8 959.0 C1163.0 959.0 1166.2 959.5 1169.4 959.5 C1172.6 959.5 1175.8 956.9 1179.0 956.9 C1182.2 956.9 1185.4 959.3 1188.6 959.3 C1191.8 959.3 1195.1 956.9 1198.3 956.9 C1201.5 956.9 1204.7 959.5 1207.9 959.5 C1211.1 959.5 1214.3 959.0 1217.5 959.0 C1220.7 959.0 1223.9 959.5 1227.1 959.5 C1230.3 959.5 1233.5 959.4 1236.7 958.5 C1239.9 957.5 1243.2 958.4 1246.4 932.2 C1249.6 906.0 1252.8 784.3 1256.0 784.3 C1259.2 784.3 1262.4 881.7 1265.6 885.1 C1268.8 888.6 1272.0 888.6 1275.2 888.6 C1278.4 888.6 1281.6 882.7 1284.8 882.7 C1288.0 882.7 1291.3 929.3 1294.5 929.3 C1297.7 929.3 1300.9 923.5 1304.1 919.1 C1307.3 914.8 1310.5 903.1 1313.7 903.1 C1316.9 903.1 1320.1 911.9 1323.3 911.9 C1326.5 911.9 1329.7 909.9 1332.9 903.6 C1336.1 897.3 1339.4 880.6 1342.6 873.9 C1345.8 867.2 1349.0 863.2 1352.2 863.2 C1355.4 863.2 1358.6 903.9 1361.8 905.7 C1365.0 907.6 1368.2 907.2 1371.4 907.6 C1374.6 908.1 1377.8 917.0 1381.0 917.0 C1384.2 917.0 1387.5 908.2 1390.7 908.2 C1393.9 908.2 1397.1 928.2 1400.3 928.2 C1403.5 928.2 1406.7 908.2 1409.9 908.2 C1413.1 908.2 1416.3 908.2 1419.5 908.2 C1422.7 908.2 1425.9 940.8 1429.1 942.4 C1432.3 944.0 1435.6 944.0 1438.8 944.0 C1442.0 944.0 1445.2 942.1 1448.4 942.1 C1451.6 942.1 1454.8 945.9 1458.0 945.9 C1461.2 945.9 1464.4 941.9 1467.6 940.5 C1470.8 939.2 1474.0 937.9 1477.2 937.9 C1480.4 937.9 1483.7 938.6 1486.9 939.7 C1490.1 940.9 1493.3 943.7 1496.5 944.8 C1499.7 946.0 1502.9 946.7 1506.1 946.7 C1509.3 946.7 1512.5 946.7 1515.7 946.7 C1518.9 946.7 1522.1 946.7 1525.3 946.7 C1528.5 946.7 1531.8 944.8 1535.0 944.0 C1538.2 943.3 1541.4 942.1 1544.6 942.1 C1547.8 942.1 1551.0 946.7 1554.2 946.7 C1557.4 946.7 1560.6 946.7 1563.8 946.7 C1567.0 946.7 1570.2 944.0 1573.4 944.0 C1576.6 944.0 1579.9 944.0 1583.1 944.0 C1586.3 944.0 1589.5 958.5 1592.7 958.5 C1595.9 958.5 1599.1 944.3 1602.3 943.2 C1605.5 942.1 1608.7 942.1 1611.9 942.1 C1615.1 942.1 1618.3 946.7 1621.5 946.7 C1624.7 946.7 1628.0 946.7 1631.2 946.7 C1634.4 946.7 1637.6 942.1 1640.8 942.1 C1644.0 942.1 1647.2 945.9 1650.4 945.9 C1653.6 945.9 1656.8 944.1 1660.0 943.5 C1663.2 942.9 1666.4 942.1 1669.6 942.1 C1672.8 942.1 1676.1 944.1 1679.3 944.8 C1682.5 945.6 1685.7 946.7 1688.9 946.7 C1692.1 946.7 1695.3 942.1 1698.5 942.1 C1701.7 942.1 1704.9 945.1 1708.1 945.1 C1711.3 945.1 1714.5 945.1 1717.7 945.1 C1720.9 945.1 1724.2 945.1 1727.4 945.1 C1730.6 945.1 1733.8 947.2 1737.0 947.2 C1740.2 947.2 1743.4 945.1 1746.6 945.1 C1749.8 945.1 1753.0 947.2 1756.2 947.2 C1759.4 947.2 1762.6 942.7 1765.8 942.7 C1769.0 942.7 1772.3 947.2 1775.5 947.2 C1778.7 947.2 1781.9 945.8 1785.1 945.1 C1788.3 944.3 1791.5 942.7 1794.7 942.7 C1797.9 942.7 1801.1 942.7 1804.3 942.7 C1807.5 942.7 1810.7 946.4 1813.9 946.4 C1817.1 946.4 1820.4 946.4 1823.6 946.4 C1826.8 946.4 1830.0 942.7 1833.2 942.7 C1836.4 942.7 1839.6 942.7 1842.8 942.7 C1846.0 942.7 1849.2 922.9 1852.4 922.9 C1855.6 922.9 1858.8 945.1 1862.0 945.1 C1865.2 945.1 1868.5 945.1 1871.7 945.1 C1874.9 945.1 1878.1 942.7 1881.3 942.7 C1884.5 942.7 1887.7 945.1 1890.9 945.1 C1894.1 945.1 1897.3 917.8 1900.5 917.8 C1903.7 917.8 1906.9 919.3 1910.1 921.3 C1913.3 923.2 1916.6 929.6 1919.8 929.6 C1923.0 929.6 1926.2 897.4 1929.4 897.4 C1932.6 897.4 1935.8 897.4 1939.0 898.0 C1942.2 898.5 1945.4 913.1 1948.6 920.7" fill="none" stroke="rgba(0,0,0,0.1)" stroke-width="4.8" stroke-linejoin="round"/>
<path d="M496.0 948.8 C499.2 942.5 502.4 929.8 505.6 929.8 C508.8 929.8 512.0 932.9 515.2 936.0 C518.4 939.1 521.7 948.3 524.9 948.3 C528.1 948.3 531.3 947.0 534.5 947.0 C537.7 947.0 540.9 948.2 544.1 948.8 C547.3 949.5 550.5 950.7 553.7 950.7 C556.9 950.7 560.1 931.1 563.3 925.0 C566.5 918.9 569.8 916.4 573.0 914.0 C576.2 911.7 579.4 912.3 582.6 911.1 C585.8 909.9 589.0 911.0 592.2 903.1 C595.4 895.1 598.6 838.8 601.8 838.8 C605.0 838.8 608.2 839.4 611.4 851.7 C614.6 864.0 617.9 896.0 621.1 912.7 C624.3 929.4 627.5 949.4 630.7 951.8 C633.9 954.2 637.1 954.2 640.3 954.2 C643.5 954.2 646.7 907.9 649.9 907.9 C653.1 907.9 656.3 932.6 659.5 933.6 C662.7 934.6 666.0 934.2 669.2 934.6 C672.4 935.1 675.6 942.8 678.8 945.6 C682.0 948.5 685.2 951.8 688.4 951.8 C691.6 951.8 694.8 942.4 698.0 937.1 C701.2 931.7 704.4 919.9 707.6 919.9 C710.8 919.9 714.1 942.8 717.3 949.4 C720.5 955.9 723.7 959.3 726.9 959.3 C730.1 959.3 733.3 959.3 736.5 959.3 C739.7 959.3 742.9 956.6 746.1 956.6 C749.3 956.6 752.5 958.5 755.7 959.0 C758.9 959.5 762.2 959.5 765.4 959.5 C768.6 959.5 771.8 956.6 775.0 956.6 C778.2 956.6 781.4 959.3 784.6 959.3 C787.8 959.3 791.0 956.6 794.2 956.6 C797.4 956.6 800.6 959.5 803.8 959.5 C807.0 959.5 810.3 959.5 813.5 959.0 C816.7 958.5 819.9 956.6 823.1 956.6 C826.3 956.6 829.5 959.3 832.7 959.3 C835.9 959.3 839.1 959.3 842.3 959.3 C845.5 959.3 848.7 957.1 851.9 957.1 C855.1 957.1 858.4 959.5 861.6 959.5 C864.8 959.5 868.0 959.4 871.2 959.0 C874.4 958.6 877.6 957.1 880.8 957.1 C884.0 957.1 887.2 959.3 890.4 959.3 C893.6 959.3 896.8 959.3 900.0 959.3 C903.2 959.3 906.5 957.1 909.7 957.1 C912.9 957.1 916.1 959.5 919.3 959.5 C922.5 959.5 925.7 957.1 928.9 957.1 C932.1 957.1 935.3 959.5 938.5 959.5 C941.7 959.5 944.9 959.5 948.1 959.3 C951.3 959.0 954.6 957.1 957.8 957.1 C961.0 957.1 964.2 959.0 967.4 959.3 C970.6 959.5 973.8 959.5 977.0 959.5 C980.2 959.5 983.4 957.1 986.6 957.1 C989.8 957.1 993.0 959.5 996.2 959.5 C999.4 959.5 1002.7 959.5 1005.9 959.3 C1009.1 959.0 1012.3 956.9 1015.5 956.9 C1018.7 956.9 1021.9 959.0 1025.1 959.3 C1028.3 959.5 1031.5 959.5 1034.7 959.5 C1037.9 959.5 1041.1 956.9 1044.3 956.9 C1047.5 956.9 1050.8 959.5 1054.0 959.5 C1057.2 959.5 1060.4 956.9 1063.6 956.9 C1066.8 956.9 1070.0 959.3 1073.2 959.3 C1076.4 959.3 1079.6 959.3 1082.8 959.3 C1086.0 959.3 1089.2 959.5 1092.4 959.5 C1095.6 959.5 1098.9 959.0 1102.1 959.0 C1105.3 959.0 1108.5 959.5 1111.7 959.5 C1114.9 959.5 1118.1 956.9 1121.3 956.9 C1124.5 956.9 1127.7 959.3 1130.9 959.3 C1134.1 959.3 1137.3 959.3 1140.5 959.3 C1143.7 959.3 1147.0 959.5 1150.2 959.5 C1153.4 959.5 1156.6 959.0 1159.8 959.0 C1163.0 959.0 1166.2 959.5 1169.4 959.5 C1172.6 959.5 1175.8 956.9 1179.0 956.9 C1182.2 956.9 1185.4 959.3 1188.6 959.3 C1191.8 959.3 1195.1 956.9 1198.3 956.9 C1201.5 956.9 1204.7 959.5 1207.9 959.5 C1211.1 959.5 1214.3 959.0 1217.5 959.0 C1220.7 959.0 1223.9 959.5 1227.1 959.5 C1230.3 959.5 1233.5 959.4 1236.7 958.5 C1239.9 957.5 1243.2 958.4 1246.4 932.2 C1249.6 906.0 1252.8 784.3 1256.0 784.3 C1259.2 784.3 1262.4 881.7 1265.6 885.1 C1268.8 888.6 1272.0 888.6 1275.2 888.6 C1278.4 888.6 1281.6 882.7 1284.8 882.7 C1288.0 882.7 1291.3 929.3 1294.5 929.3 C1297.7 929.3 1300.9 923.5 1304.1 919.1 C1307.3 914.8 1310.5 903.1 1313.7 903.1 C1316.9 903.1 1320.1 911.9 1323.3 911.9 C1326.5 911.9 1329.7 909.9 1332.9 903.6 C1336.1 897.3 1339.4 880.6 1342.6 873.9 C1345.8 867.2 1349.0 863.2 1352.2 863.2 C1355.4 863.2 1358.6 903.9 1361.8 905.7 C1365.0 907.6 1368.2 907.2 1371.4 907.6 C1374.6 908.1 1377.8 917.0 1381.0 917.0 C1384.2 917.0 1387.5 908.2 1390.7 908.2 C1393.9 908.2 1397.1 928.2 1400.3 928.2 C1403.5 928.2 1406.7 908.2 1409.9 908.2 C1413.1 908.2 1416.3 908.2 1419.5 908.2 C1422.7 908.2 1425.9 940.8 1429.1 942.4 C1432.3 944.0 1435.6 944.0 1438.8 944.0 C1442.0 944.0 1445.2 942.1 1448.4 942.1 C1451.6 942.1 1454.8 945.9 1458.0 945.9 C1461.2 945.9 1464.4 941.9 1467.6 940.5 C1470.8 939.2 1474.0 937.9 1477.2 937.9 C1480.4 937.9 1483.7 938.6 1486.9 939.7 C1490.1 940.9 1493.3 943.7 1496.5 944.8 C1499.7 946.0 1502.9 946.7 1506.1 946.7 C1509.3 946.7 1512.5 946.7 1515.7 946.7 C1518.9 946.7 1522.1 946.7 1525.3 946.7 C1528.5 946.7 1531.8 944.8 1535.0 944.0 C1538.2 943.3 1541.4 942.1 1544.6 942.1 C1547.8 942.1 1551.0 946.7 1554.2 946.7 C1557.4 946.7 1560.6 946.7 1563.8 946.7 C1567.0 946.7 1570.2 944.0 1573.4 944.0 C1576.6 944.0 1579.9 944.0 1583.1 944.0 C1586.3 944.0 1589.5 958.5 1592.7 958.5 C1595.9 958.5 1599.1 944.3 1602.3 943.2 C1605.5 942.1 1608.7 942.1 1611.9 942.1 C1615.1 942.1 1618.3 946.7 1621.5 946.7 C1624.7 946.7 1628.0 946.7 1631.2 946.7 C1634.4 946.7 1637.6 942.1 1640.8 942.1 C1644.0 942.1 1647.2 945.9 1650.4 945.9 C1653.6 945.9 1656.8 944.1 1660.0 943.5 C1663.2 942.9 1666.4 942.1 1669.6 942.1 C1672.8 942.1 1676.1 944.1 1679.3 944.8 C1682.5 945.6 1685.7 946.7 1688.9 946.7 C1692.1 946.7 1695.3 942.1 1698.5 942.1 C1701.7 942.1 1704.9 945.1 1708.1 945.1 C1711.3 945.1 1714.5 945.1 1717.7 945.1 C1720.9 945.1 1724.2 945.1 1727.4 945.1 C1730.6 945.1 1733.8 947.2 1737.0 947.2 C1740.2 947.2 1743.4 945.1 1746.6 945.1 C1749.8 945.1 1753.0 947.2 1756.2 947.2 C1759.4 947.2 1762.6 942.7 1765.8 942.7 C1769.0 942.7 1772.3 947.2 1775.5 947.2 C1778.7 947.2 1781.9 945.8 1785.1 945.1 C1788.3 944.3 1791.5 942.7 1794.7 942.7 C1797.9 942.7 1801.1 942.7 1804.3 942.7 C1807.5 942.7 1810.7 946.4 1813.9 946.4 C1817.1 946.4 1820.4 946.4 1823.6 946.4 C1826.8 946.4 1830.0 942.7 1833.2 942.7 C1836.4 942.7 1839.6 942.7 1842.8 942.7 C1846.0 942.7 1849.2 922.9 1852.4 922.9 C1855.6 922.9 1858.8 945.1 1862.0 945.1 C1865.2 945.1 1868.5 945.1 1871.7 945.1 C1874.9 945.1 1878.1 942.7 1881.3 942.7 C1884.5 942.7 1887.7 945.1 1890.9 945.1 C1894.1 945.1 1897.3 917.8 1900.5 917.8 C1903.7 917.8 1906.9 919.3 1910.1 921.3 C1913.3 923.2 1916.6 929.6 1919.8 929.6 C1923.0 929.6 1926.2 897.4 1929.4 897.4 C1932.6 897.4 1935.8 897.4 1939.0 898.0 C1942.2 898.5 1945.4 913.1 1948.6 920.7" fill="none" stroke="rgba(0,0,0,0.1)" stroke-width="4.8" stroke-linejoin="round"/>
<path d="M496.0 948.8 C499.2 942.5 502.4 929.8 505.6 929.8 C508.8 929.8 512.0 932.9 515.2 936.0 C518.4 939.1 521.7 948.3 524.9 948.3 C528.1 948.3 531.3 947.0 534.5 947.0 C537.7 947.0 540.9 948.2 544.1 948.8 C547.3 949.5 550.5 950.7 553.7 950.7 C556.9 950.7 560.1 931.1 563.3 925.0 C566.5 918.9 569.8 916.4 573.0 914.0 C576.2 911.7 579.4 912.3 582.6 911.1 C585.8 909.9 589.0 911.0 592.2 903.1 C595.4 895.1 598.6 838.8 601.8 838.8 C605.0 838.8 608.2 839.4 611.4 851.7 C614.6 864.0 617.9 896.0 621.1 912.7 C624.3 929.4 627.5 949.4 630.7 951.8 C633.9 954.2 637.1 954.2 640.3 954.2 C643.5 954.2 646.7 907.9 649.9 907.9 C653.1 907.9 656.3 932.6 659.5 933.6 C662.7 934.6 666.0 934.2 669.2 934.6 C672.4 935.1 675.6 942.8 678.8 945.6 C682.0 948.5 685.2 951.8 688.4 951.8 C691.6 951.8 694.8 942.4 698.0 937.1 C701.2 931.7 704.4 919.9 707.6 919.9 C710.8 919.9 714.1 942.8 717.3 949.4 C720.5 955.9 723.7 959.3 726.9 959.3 C730.1 959.3 733.3 959.3 736.5 959.3 C739.7 959.3 742.9 956.6 746.1 956.6 C749.3 956.6 752.5 958.5 755.7 959.0 C758.9 959.5 762.2 959.5 765.4 959.5 C768.6 959.5 771.8 956.6 775.0 956.6 C778.2 956.6 781.4 959.3 784.6 959.3 C787.8 959.3 791.0 956.6 794.2 956.6 C797.4 956.6 800.6 959.5 803.8 959.5 C807.0 959.5 810.3 959.5 813.5 959.0 C816.7 958.5 819.9 956.6 823.1 956.6 C826.3 956.6 829.5 959.3 832.7 959.3 C835.9 959.3 839.1 959.3 842.3 959.3 C845.5 959.3 848.7 957.1 851.9 957.1 C855.1 957.1 858.4 959.5 861.6 959.5 C864.8 959.5 868.0 959.4 871.2 959.0 C874.4 958.6 877.6 957.1 880.8 957.1 C884.0 957.1 887.2 959.3 890.4 959.3 C893.6 959.3 896.8 959.3 900.0 959.3 C903.2 959.3 906.5 957.1 909.7 957.1 C912.9 957.1 916.1 959.5 919.3 959.5 C922.5 959.5 925.7 957.1 928.9 957.1 C932.1 957.1 935.3 959.5 938.5 959.5 C941.7 959.5 944.9 959.5 948.1 959.3 C951.3 959.0 954.6 957.1 957.8 957.1 C961.0 957.1 964.2 959.0 967.4 959.3 C970.6 959.5 973.8 959.5 977.0 959.5 C980.2 959.5 983.4 957.1 986.6 957.1 C989.8 957.1 993.0 959.5 996.2 959.5 C999.4 959.5 1002.7 959.5 1005.9 959.3 C1009.1 959.0 1012.3 956.9 1015.5 956.9 C1018.7 956.9 1021.9 959.0 1025.1 959.3 C1028.3 959.5 1031.5 959.5 1034.7 959.5 C1037.9 959.5 1041.1 956.9 1044.3 956.9 C1047.5 956.9 1050.8 959.5 1054.0 959.5 C1057.2 959.5 1060.4 956.9 1063.6 956.9 C1066.8 956.9 1070.0 959.3 1073.2 959.3 C1076.4 959.3 1079.6 959.3 1082.8 959.3 C1086.0 959.3 1089.2 959.5 1092.4 959.5 C1095.6 959.5 1098.9 959.0 1102.1 959.0 C1105.3 959.0 1108.5 959.5 1111.7 959.5 C1114.9 959.5 1118.1 956.9 1121.3 956.9 C1124.5 956.9 1127.7 959.3 1130.9 959.3 C1134.1 959.3 1137.3 959.3 1140.5 959.3 C1143.7 959.3 1147.0 959.5 1150.2 959.5 C1153.4 959.5 1156.6 959.0 1159.8 959.0 C1163.0 959.0 1166.2 959.5 1169.4 959.5 C1172.6 959.5 1175.8 956.9 1179.0 956.9 C1182.2 956.9 1185.4 959.3 1188.6 959.3 C1191.8 959.3 1195.1 956.9 1198.3 956.9 C1201.5 956.9 1204.7 959.5 1207.9 959.5 C1211.1 959.5 1214.3 959.0 1217.5 959.0 C1220.7 959.0 1223.9 959.5 1227.1 959.5 C1230.3 959.5 1233.5 959.4 1236.7 958.5 C1239.9 957.5 1243.2 958.4 1246.4 932.2 C1249.6 906.0 1252.8 784.3 1256.0 784.3 C1259.2 784.3 1262.4 881.7 1265.6 885.1 C1268.8 888.6 1272.0 888.6 1275.2 888.6 C1278.4 888.6 1281.6 882.7 1284.8 882.7 C1288.0 882.7 1291.3 929.3 1294.5 929.3 C1297.7 929.3 1300.9 923.5 1304.1 919.1 C1307.3 914.8 1310.5 903.1 1313.7 903.1 C1316.9 903.1 1320.1 911.9 1323.3 911.9 C1326.5 911.9 1329.7 909.9 1332.9 903.6 C1336.1 897.3 1339.4 880.6 1342.6 873.9 C1345.8 867.2 1349.0 863.2 1352.2 863.2 C1355.4 863.2 1358.6 903.9 1361.8 905.7 C1365.0 907.6 1368.2 907.2 1371.4 907.6 C1374.6 908.1 1377.8 917.0 1381.0 917.0 C1384.2 917.0 1387.5 908.2 1390.7 908.2 C1393.9 908.2 1397.1 928.2 1400.3 928.2 C1403.5 928.2 1406.7 908.2 1409.9 908.2 C1413.1 908.2 1416.3 908.2 1419.5 908.2 C1422.7 908.2 1425.9 940.8 1429.1 942.4 C1432.3 944.0 1435.6 944.0 1438.8 944.0 C1442.0 944.0 1445.2 942.1 1448.4 942.1 C1451.6 942.1 1454.8 945.9 1458.0 945.9 C1461.2 945.9 1464.4 941.9 1467.6 940.5 C1470.8 939.2 1474.0 937.9 1477.2 937.9 C1480.4 937.9 1483.7 938.6 1486.9 939.7 C1490.1 940.9 1493.3 943.7 1496.5 944.8 C1499.7 946.0 1502.9 946.7 1506.1 946.7 C1509.3 946.7 1512.5 946.7 1515.7 946.7 C1518.9 946.7 1522.1 946.7 1525.3 946.7 C1528.5 946.7 1531.8 944.8 1535.0 944.0 C1538.2 943.3 1541.4 942.1 1544.6 942.1 C1547.8 942.1 1551.0 946.7 1554.2 946.7 C1557.4 946.7 1560.6 946.7 1563.8 946.7 C1567.0 946.7 1570.2 944.0 1573.4 944.0 C1576.6 944.0 1579.9 944.0 1583.1 944.0 C1586.3 944.0 1589.5 958.5 1592.7 958.5 C1595.9 958.5 1599.1 944.3 1602.3 943.2 C1605.5 942.1 1608.7 942.1 1611.9 942.1 C1615.1 942.1 1618.3 946.7 1621.5 946.7 C1624.7 946.7 1628.0 946.7 1631.2 946.7 C1634.4 946.7 1637.6 942.1 1640.8 942.1 C1644.0 942.1 1647.2 945.9 1650.4 945.9 C1653.6 945.9 1656.8 944.1 1660.0 943.5 C1663.2 942.9 1666.4 942.1 1669.6 942.1 C1672.8 942.1 1676.1 944.1 1679.3 944.8 C1682.5 945.6 1685.7 946.7 1688.9 946.7 C1692.1 946.7 1695.3 942.1 1698.5 942.1 C1701.7 942.1 1704.9 945.1 1708.1 945.1 C1711.3 945.1 1714.5 945.1 1717.7 945.1 C1720.9 945.1 1724.2 945.1 1727.4 945.1 C1730.6 945.1 1733.8 947.2 1737.0 947.2 C1740.2 947.2 1743.4 945.1 1746.6 945.1 C1749.8 945.1 1753.0 947.2 1756.2 947.2 C1759.4 947.2 1762.6 942.7 1765.8 942.7 C1769.0 942.7 1772.3 947.2 1775.5 947.2 C1778.7 947.2 1781.9 945.8 1785.1 945.1 C1788.3 944.3 1791.5 942.7 1794.7 942.7 C1797.9 942.7 1801.1 942.7 1804.3 942.7 C1807.5 942.7 1810.7 946.4 1813.9 946.4 C1817.1 946.4 1820.4 946.4 1823.6 946.4 C1826.8 946.4 1830.0 942.7 1833.2 942.7 C1836.4 942.7 1839.6 942.7 1842.8 942.7 C1846.0 942.7 1849.2 922.9 1852.4 922.9 C1855.6 922.9 1858.8 945.1 1862.0 945.1 C1865.2 945.1 1868.5 945.1 1871.7 945.1 C1874.9 945.1 1878.1 942.7 1881.3 942.7 C1884.5 942.7 1887.7 945.1 1890.9 945.1 C1894.1 945.1 1897.3 917.8 1900.5 917.8 C1903.7 917.8 1906.9 919.3 1910.1 921.3 C1913.3 923.2 1916.6 929.6 1919.8 929.6 C1923.0 929.6 1926.2 897.4 1929.4 897.4 C1932.6 897.4 1935.8 897.4 1939.0 898.0 C1942.2 898.5 1945.4 913.1 1948.6 920.7 L1948.6 959.8 L496.0 959.8 Z" fill="#7c2b8c"/>
<path d="M496.0 948.8 C499.2 942.5 502.4 929.8 505.6 929.8 C508.8 929.8 512.0 932.9 515.2 936.0 C518.4 939.1 521.7 948.3 524.9 948.3 C528.1 948.3 531.3 947.0 534.5 947.0 C537.7 947.0 540.9 948.2 544.1 948.8 C547.3 949.5 550.5 950.7 553.7 950.7 C556.9 950.7 560.1 931.1 563.3 925.0 C566.5 918.9 569.8 916.4 573.0 914.0 C576.2 911.7 579.4 912.3 582.6 911.1 C585.8 909.9 589.0 911.0 592.2 903.1 C595.4 895.1 598.6 838.8 601.8 838.8 C605.0 838.8 608.2 839.4 611.4 851.7 C614.6 864.0 617.9 896.0 621.1 912.7 C624.3 929.4 627.5 949.4 630.7 951.8 C633.9 954.2 637.1 954.2 640.3 954.2 C643.5 954.2 646.7 907.9 649.9 907.9 C653.1 907.9 656.3 932.6 659.5 933.6 C662.7 934.6 666.0 934.2 669.2 934.6 C672.4 935.1 675.6 942.8 678.8 945.6 C682.0 948.5 685.2 951.8 688.4 951.8 C691.6 951.8 694.8 942.4 698.0 937.1 C701.2 931.7 704.4 919.9 707.6 919.9 C710.8 919.9 714.1 942.8 717.3 949.4 C720.5 955.9 723.7 959.3 726.9 959.3 C730.1 959.3 733.3 959.3 736.5 959.3 C739.7 959.3 742.9 956.6 746.1 956.6 C749.3 956.6 752.5 958.5 755.7 959.0 C758.9 959.5 762.2 959.5 765.4 959.5 C768.6 959.5 771.8 956.6 775.0 956.6 C778.2 956.6 781.4 959.3 784.6 959.3 C787.8 959.3 791.0 956.6 794.2 956.6 C797.4 956.6 800.6 959.5 803.8 959.5 C807.0 959.5 810.3 959.5 813.5 959.0 C816.7 958.5 819.9 956.6 823.1 956.6 C826.3 956.6 829.5 959.3 832.7 959.3 C835.9 959.3 839.1 959.3 842.3 959.3 C845.5 959.3 848.7 957.1 851.9 957.1 C855.1 957.1 858.4 959.5 861.6 959.5 C864.8 959.5 868.0 959.4 871.2 959.0 C874.4 958.6 877.6 957.1 880.8 957.1 C884.0 957.1 887.2 959.3 890.4 959.3 C893.6 959.3 896.8 959.3 900.0 959.3 C903.2 959.3 906.5 957.1 909.7 957.1 C912.9 957.1 916.1 959.5 919.3 959.5 C922.5 959.5 925.7 957.1 928.9 957.1 C932.1 957.1 935.3 959.5 938.5 959.5 C941.7 959.5 944.9 959.5 948.1 959.3 C951.3 959.0 954.6 957.1 957.8 957.1 C961.0 957.1 964.2 959.0 967.4 959.3 C970.6 959.5 973.8 959.5 977.0 959.5 C980.2 959.5 983.4 957.1 986.6 957.1 C989.8 957.1 993.0 959.5 996.2 959.5 C999.4 959.5 1002.7 959.5 1005.9 959.3 C1009.1 959.0 1012.3 956.9 1015.5 956.9 C1018.7 956.9 1021.9 959.0 1025.1 959.3 C1028.3 959.5 1031.5 959.5 1034.7 959.5 C1037.9 959.5 1041.1 956.9 1044.3 956.9 C1047.5 956.9 1050.8 959.5 1054.0 959.5 C1057.2 959.5 1060.4 956.9 1063.6 956.9 C1066.8 956.9 1070.0 959.3 1073.2 959.3 C1076.4 959.3 1079.6 959.3 1082.8 959.3 C1086.0 959.3 1089.2 959.5 1092.4 959.5 C1095.6 959.5 1098.9 959.0 1102.1 959.0 C1105.3 959.0 1108.5 959.5 1111.7 959.5 C1114.9 959.5 1118.1 956.9 1121.3 956.9 C1124.5 956.9 1127.7 959.3 1130.9 959.3 C1134.1 959.3 1137.3 959.3 1140.5 959.3 C1143.7 959.3 1147.0 959.5 1150.2 959.5 C1153.4 959.5 1156.6 959.0 1159.8 959.0 C1163.0 959.0 1166.2 959.5 1169.4 959.5 C1172.6 959.5 1175.8 956.9 1179.0 956.9 C1182.2 956.9 1185.4 959.3 1188.6 959.3 C1191.8 959.3 1195.1 956.9 1198.3 956.9 C1201.5 956.9 1204.7 959.5 1207.9 959.5 C1211.1 959.5 1214.3 959.0 1217.5 959.0 C1220.7 959.0 1223.9 959.5 1227.1 959.5 C1230.3 959.5 1233.5 959.4 1236.7 958.5 C1239.9 957.5 1243.2 958.4 1246.4 932.2 C1249.6 906.0 1252.8 784.3 1256.0 784.3 C1259.2 784.3 1262.4 881.7 1265.6 885.1 C1268.8 888.6 1272.0 888.6 1275.2 888.6 C1278.4 888.6 1281.6 882.7 1284.8 882.7 C1288.0 882.7 1291.3 929.3 1294.5 929.3 C1297.7 929.3 1300.9 923.5 1304.1 919.1 C1307.3 914.8 1310.5 903.1 1313.7 903.1 C1316.9 903.1 1320.1 911.9 1323.3 911.9 C1326.5 911.9 1329.7 909.9 1332.9 903.6 C1336.1 897.3 1339.4 880.6 1342.6 873.9 C1345.8 867.2 1349.0 863.2 1352.2 863.2 C1355.4 863.2 1358.6 903.9 1361.8 905.7 C1365.0 907.6 1368.2 907.2 1371.4 907.6 C1374.6 908.1 1377.8 917.0 1381.0 917.0 C1384.2 917.0 1387.5 908.2 1390.7 908.2 C1393.9 908.2 1397.1 928.2 1400.3 928.2 C1403.5 928.2 1406.7 908.2 1409.9 908.2 C1413.1 908.2 1416.3 908.2 1419.5 908.2 C1422.7 908.2 1425.9 940.8 1429.1 942.4 C1432.3 944.0 1435.6 944.0 1438.8 944.0 C1442.0 944.0 1445.2 942.1 1448.4 942.1 C1451.6 942.1 1454.8 945.9 1458.0 945.9 C1461.2 945.9 1464.4 941.9 1467.6 940.5 C1470.8 939.2 1474.0 937.9 1477.2 937.9 C1480.4 937.9 1483.7 938.6 1486.9 939.7 C1490.1 940.9 1493.3 943.7 1496.5 944.8 C1499.7 946.0 1502.9 946.7 1506.1 946.7 C1509.3 946.7 1512.5 946.7 1515.7 946.7 C1518.9 946.7 1522.1 946.7 1525.3 946.7 C1528.5 946.7 1531.8 944.8 1535.0 944.0 C1538.2 943.3 1541.4 942.1 1544.6 942.1 C1547.8 942.1 1551.0 946.7 1554.2 946.7 C1557.4 946.7 1560.6 946.7 1563.8 946.7 C1567.0 946.7 1570.2 944.0 1573.4 944.0 C1576.6 944.0 1579.9 944.0 1583.1 944.0 C1586.3 944.0 1589.5 958.5 1592.7 958.5 C1595.9 958.5 1599.1 944.3 1602.3 943.2 C1605.5 942.1 1608.7 942.1 1611.9 942.1 C1615.1 942.1 1618.3 946.7 1621.5 946.7 C1624.7 946.7 1628.0 946.7 1631.2 946.7 C1634.4 946.7 1637.6 942.1 1640.8 942.1 C1644.0 942.1 1647.2 945.9 1650.4 945.9 C1653.6 945.9 1656.8 944.1 1660.0 943.5 C1663.2 942.9 1666.4 942.1 1669.6 942.1 C1672.8 942.1 1676.1 944.1 1679.3 944.8 C1682.5 945.6 1685.7 946.7 1688.9 946.7 C1692.1 946.7 1695.3 942.1 1698.5 942.1 C1701.7 942.1 1704.9 945.1 1708.1 945.1 C1711.3 945.1 1714.5 945.1 1717.7 945.1 C1720.9 945.1 1724.2 945.1 1727.4 945.1 C1730.6 945.1 1733.8 947.2 1737.0 947.2 C1740.2 947.2 1743.4 945.1 1746.6 945.1 C1749.8 945.1 1753.0 947.2 1756.2 947.2 C1759.4 947.2 1762.6 942.7 1765.8 942.7 C1769.0 942.7 1772.3 947.2 1775.5 947.2 C1778.7 947.2 1781.9 945.8 1785.1 945.1 C1788.3 944.3 1791.5 942.7 1794.7 942.7 C1797.9 942.7 1801.1 942.7 1804.3 942.7 C1807.5 942.7 1810.7 946.4 1813.9 946.4 C1817.1 946.4 1820.4 946.4 1823.6 946.4 C1826.8 946.4 1830.0 942.7 1833.2 942.7 C1836.4 942.7 1839.6 942.7 1842.8 942.7 C1846.0 942.7 1849.2 922.9 1852.4 922.9 C1855.6 922.9 1858.8 945.1 1862.0 945.1 C1865.2 945.1 1868.5 945.1 1871.7 945.1 C1874.9 945.1 1878.1 942.7 1881.3 942.7 C1884.5 942.7 1887.7 945.1 1890.9 945.1 C1894.1 945.1 1897.3 917.8 1900.5 917.8 C1903.7 917.8 1906.9 919.3 1910.1 921.3 C1913.3 923.2 1916.6 929.6 1919.8 929.6 C1923.0 929.6 1926.2 897.4 1929.4 897.4 C1932.6 897.4 1935.8 897.4 1939.0 898.0 C1942.2 898.5 1945.4 913.1 1948.6 920.7" fill="none" stroke="rgba(0,0,0,0.1)" stroke-width="4.8" stroke-linejoin="round"/>
<path d="M496.0 948.8 C499.2 942.5 502.4 929.8 505.6 929.8 C508.8 929.8 512.0 932.9 515.2 936.0 C518.4 939.1 521.7 948.3 524.9 948.3 C528.1 948.3 531.3 947.0 534.5 947.0 C537.7 947.0 540.9 948.2 544.1 948.8 C547.3 949.5 550.5 950.7 553.7 950.7 C556.9 950.7 560.1 931.1 563.3 925.0 C566.5 918.9 569.8 916.4 573.0 914.0 C576.2 911.7 579.4 912.3 582.6 911.1 C585.8 909.9 589.0 911.0 592.2 903.1 C595.4 895.1 598.6 838.8 601.8 838.8 C605.0 838.8 608.2 839.4 611.4 851.7 C614.6 864.0 617.9 896.0 621.1 912.7 C624.3 929.4 627.5 949.4 630.7 951.8 C633.9 954.2 637.1 954.2 640.3 954.2 C643.5 954.2 646.7 907.9 649.9 907.9 C653.1 907.9 656.3 932.6 659.5 933.6 C662.7 934.6 666.0 934.2 669.2 934.6 C672.4 935.1 675.6 942.8 678.8 945.6 C682.0 948.5 685.2 951.8 688.4 951.8 C691.6 951.8 694.8 942.4 698.0 937.1 C701.2 931.7 704.4 919.9 707.6 919.9 C710.8 919.9 714.1 942.8 717.3 949.4 C720.5 955.9 723.7 959.3 726.9 959.3 C730.1 959.3 733.3 959.3 736.5 959.3 C739.7 959.3 742.9 956.6 746.1 956.6 C749.3 956.6 752.5 958.5 755.7 959.0 C758.9 959.5 762.2 959.5 765.4 959.5 C768.6 959.5 771.8 956.6 775.0 956.6 C778.2 956.6 781.4 959.3 784.6 959.3 C787.8 959.3 791.0 956.6 794.2 956.6 C797.4 956.6 800.6 959.5 803.8 959.5 C807.0 959.5 810.3 959.5 813.5 959.0 C816.7 958.5 819.9 956.6 823.1 956.6 C826.3 956.6 829.5 959.3 832.7 959.3 C835.9 959.3 839.1 959.3 842.3 959.3 C845.5 959.3 848.7 957.1 851.9 957.1 C855.1 957.1 858.4 959.5 861.6 959.5 C864.8 959.5 868.0 959.4 871.2 959.0 C874.4 958.6 877.6 957.1 880.8 957.1 C884.0 957.1 887.2 959.3 890.4 959.3 C893.6 959.3 896.8 959.3 900.0 959.3 C903.2 959.3 906.5 957.1 909.7 957.1 C912.9 957.1 916.1 959.5 919.3 959.5 C922.5 959.5 925.7 957.1 928.9 957.1 C932.1 957.1 935.3 959.5 938.5 959.5 C941.7 959.5 944.9 959.5 948.1 959.3 C951.3 959.0 954.6 957.1 957.8 957.1 C961.0 957.1 964.2 959.0 967.4 959.3 C970.6 959.5 973.8 959.5 977.0 959.5 C980.2 959.5 983.4 957.1 986.6 957.1 C989.8 957.1 993.0 959.5 996.2 959.5 C999.4 959.5 1002.7 959.5 1005.9 959.3 C1009.1 959.0 1012.3 956.9 1015.5 956.9 C1018.7 956.9 1021.9 959.0 1025.1 959.3 C1028.3 959.5 1031.5 959.5 1034.7 959.5 C1037.9 959.5 1041.1 956.9 1044.3 956.9 C1047.5 956.9 1050.8 959.5 1054.0 959.5 C1057.2 959.5 1060.4 956.9 1063.6 956.9 C1066.8 956.9 1070.0 959.3 1073.2 959.3 C1076.4 959.3 1079.6 959.3 1082.8 959.3 C1086.0 959.3 1089.2 959.5 1092.4 959.5 C1095.6 959.5 1098.9 959.0 1102.1 959.0 C1105.3 959.0 1108.5 959.5 1111.7 959.5 C1114.9 959.5 1118.1 956.9 1121.3 956.9 C1124.5 956.9 1127.7 959.3 1130.9 959.3 C1134.1 959.3 1137.3 959.3 1140.5 959.3 C1143.7 959.3 1147.0 959.5 1150.2 959.5 C1153.4 959.5 1156.6 959.0 1159.8 959.0 C1163.0 959.0 1166.2 959.5 1169.4 959.5 C1172.6 959.5 1175.8 956.9 1179.0 956.9 C1182.2 956.9 1185.4 959.3 1188.6 959.3 C1191.8 959.3 1195.1 956.9 1198.3 956.9 C1201.5 956.9 1204.7 959.5 1207.9 959.5 C1211.1 959.5 1214.3 959.0 1217.5 959.0 C1220.7 959.0 1223.9 959.5 1227.1 959.5 C1230.3 959.5 1233.5 959.4 1236.7 958.5 C1239.9 957.5 1243.2 958.4 1246.4 932.2 C1249.6 906.0 1252.8 784.3 1256.0 784.3 C1259.2 784.3 1262.4 881.7 1265.6 885.1 C1268.8 888.6 1272.0 888.6 1275.2 888.6 C1278.4 888.6 1281.6 882.7 1284.8 882.7 C1288.0 882.7 1291.3 929.3 1294.5 929.3 C1297.7 929.3 1300.9 923.5 1304.1 919.1 C1307.3 914.8 1310.5 903.1 1313.7 903.1 C1316.9 903.1 1320.1 911.9 1323.3 911.9 C1326.5 911.9 1329.7 909.9 1332.9 903.6 C1336.1 897.3 1339.4 880.6 1342.6 873.9 C1345.8 867.2 1349.0 863.2 1352.2 863.2 C1355.4 863.2 1358.6 903.9 1361.8 905.7 C1365.0 907.6 1368.2 907.2 1371.4 907.6 C1374.6 908.1 1377.8 917.0 1381.0 917.0 C1384.2 917.0 1387.5 908.2 1390.7 908.2 C1393.9 908.2 1397.1 928.2 1400.3 928.2 C1403.5 928.2 1406.7 908.2 1409.9 908.2 C1413.1 908.2 1416.3 908.2 1419.5 908.2 C1422.7 908.2 1425.9 940.8 1429.1 942.4 C1432.3 944.0 1435.6 944.0 1438.8 944.0 C1442.0 944.0 1445.2 942.1 1448.4 942.1 C1451.6 942.1 1454.8 945.9 1458.0 945.9 C1461.2 945.9 1464.4 941.9 1467.6 940.5 C1470.8 939.2 1474.0 937.9 1477.2 937.9 C1480.4 937.9 1483.7 938.6 1486.9 939.7 C1490.1 940.9 1493.3 943.7 1496.5 944.8 C1499.7 946.0 1502.9 946.7 1506.1 946.7 C1509.3 946.7 1512.5 946.7 1515.7 946.7 C1518.9 946.7 1522.1 946.7 1525.3 946.7 C1528.5 946.7 1531.8 944.8 1535.0 944.0 C1538.2 943.3 1541.4 942.1 1544.6 942.1 C1547.8 942.1 1551.0 946.7 1554.2 946.7 C1557.4 946.7 1560.6 946.7 1563.8 946.7 C1567.0 946.7 1570.2 944.0 1573.4 944.0 C1576.6 944.0 1579.9 944.0 1583.1 944.0 C1586.3 944.0 1589.5 958.5 1592.7 958.5 C1595.9 958.5 1599.1 944.3 1602.3 943.2 C1605.5 942.1 1608.7 942.1 1611.9 942.1 C1615.1 942.1 1618.3 946.7 1621.5 946.7 C1624.7 946.7 1628.0 946.7 1631.2 946.7 C1634.4 946.7 1637.6 942.1 1640.8 942.1 C1644.0 942.1 1647.2 945.9 1650.4 945.9 C1653.6 945.9 1656.8 944.1 1660.0 943.5 C1663.2 942.9 1666.4 942.1 1669.6 942.1 C1672.8 942.1 1676.1 944.1 1679.3 944.8 C1682.5 945.6 1685.7 946.7 1688.9 946.7 C1692.1 946.7 1695.3 942.1 1698.5 942.1 C1701.7 942.1 1704.9 945.1 1708.1 945.1 C1711.3 945.1 1714.5 945.1 1717.7 945.1 C1720.9 945.1 1724.2 945.1 1727.4 945.1 C1730.6 945.1 1733.8 947.2 1737.0 947.2 C1740.2 947.2 1743.4 945.1 1746.6 945.1 C1749.8 945.1 1753.0 947.2 1756.2 947.2 C1759.4 947.2 1762.6 942.7 1765.8 942.7 C1769.0 942.7 1772.3 947.2 1775.5 947.2 C1778.7 947.2 1781.9 945.8 1785.1 945.1 C1788.3 944.3 1791.5 942.7 1794.7 942.7 C1797.9 942.7 1801.1 942.7 1804.3 942.7 C1807.5 942.7 1810.7 946.4 1813.9 946.4 C1817.1 946.4 1820.4 946.4 1823.6 946.4 C1826.8 946.4 1830.0 942.7 1833.2 942.7 C1836.4 942.7 1839.6 942.7 1842.8 942.7 C1846.0 942.7 1849.2 936.8 1852.4 936.8 C1855.6 936.8 1858.8 945.1 1862.0 945.1 C1865.2 945.1 1868.5 945.1 1871.7 945.1 C1874.9 945.1 1878.1 942.7 1881.3 942.7 C1884.5 942.7 1887.7 945.1 1890.9 945.1 C1894.1 945.1 1897.3 920.2 1900.5 920.2 C1903.7 920.2 1906.9 921.6 1910.1 923.4 C1913.3 925.2 1916.6 931.2 1919.8 931.2 C1923.0 931.2 1926.2 900.1 1929.4 900.1 C1932.6 900.1 1935.8 900.1 1939.0 900.1 C1942.2 900.1 1945.4 914.9 1948.6 922.3 L1948.6 959.8 L496.0 959.8 Z" fill="#01a64b"/>
<path d="M496.0 948.8 C499.2 942.5 502.4 929.8 505.6 929.8 C508.8 929.8 512.0 932.9 515.2 936.0 C518.4 939.1 521.7 948.3 524.9 948.3 C528.1 948.3 531.3 947.0 534.5 947.0 C537.7 947.0 540.9 948.2 544.1 948.8 C547.3 949.5 550.5 950.7 553.7 950.7 C556.9 950.7 560.1 931.1 563.3 925.0 C566.5 918.9 569.8 916.4 573.0 914.0 C576.2 911.7 579.4 912.3 582.6 911.1 C585.8 909.9 589.0 911.0 592.2 903.1 C595.4 895.1 598.6 838.8 601.8 838.8 C605.0 838.8 608.2 839.4 611.4 851.7 C614.6 864.0 617.9 896.0 621.1 912.7 C624.3 929.4 627.5 949.4 630.7 951.8 C633.9 954.2 637.1 954.2 640.3 954.2 C643.5 954.2 646.7 907.9 649.9 907.9 C653.1 907.9 656.3 932.6 659.5 933.6 C662.7 934.6 666.0 934.2 669.2 934.6 C672.4 935.1 675.6 942.8 678.8 945.6 C682.0 948.5 685.2 951.8 688.4 951.8 C691.6 951.8 694.8 942.4 698.0 937.1 C701.2 931.7 704.4 919.9 707.6 919.9 C710.8 919.9 714.1 942.8 717.3 949.4 C720.5 955.9 723.7 959.3 726.9 959.3 C730.1 959.3 733.3 959.3 736.5 959.3 C739.7 959.3 742.9 956.6 746.1 956.6 C749.3 956.6 752.5 958.5 755.7 959.0 C758.9 959.5 762.2 959.5 765.4 959.5 C768.6 959.5 771.8 956.6 775.0 956.6 C778.2 956.6 781.4 959.3 784.6 959.3 C787.8 959.3 791.0 956.6 794.2 956.6 C797.4 956.6 800.6 959.5 803.8 959.5 C807.0 959.5 810.3 959.5 813.5 959.0 C816.7 958.5 819.9 956.6 823.1 956.6 C826.3 956.6 829.5 959.3 832.7 959.3 C835.9 959.3 839.1 959.3 842.3 959.3 C845.5 959.3 848.7 957.1 851.9 957.1 C855.1 957.1 858.4 959.5 861.6 959.5 C864.8 959.5 868.0 959.4 871.2 959.0 C874.4 958.6 877.6 957.1 880.8 957.1 C884.0 957.1 887.2 959.3 890.4 959.3 C893.6 959.3 896.8 959.3 900.0 959.3 C903.2 959.3 906.5 957.1 909.7 957.1 C912.9 957.1 916.1 959.5 919.3 959.5 C922.5 959.5 925.7 957.1 928.9 957.1 C932.1 957.1 935.3 959.5 938.5 959.5 C941.7 959.5 944.9 959.5 948.1 959.3 C951.3 959.0 954.6 957.1 957.8 957.1 C961.0 957.1 964.2 959.0 967.4 959.3 C970.6 959.5 973.8 959.5 977.0 959.5 C980.2 959.5 983.4 957.1 986.6 957.1 C989.8 957.1 993.0 959.5 996.2 959.5 C999.4 959.5 1002.7 959.5 1005.9 959.3 C1009.1 959.0 1012.3 956.9 1015.5 956.9 C1018.7 956.9 1021.9 959.0 1025.1 959.3 C1028.3 959.5 1031.5 959.5 1034.7 959.5 C1037.9 959.5 1041.1 956.9 1044.3 956.9 C1047.5 956.9 1050.8 959.5 1054.0 959.5 C1057.2 959.5 1060.4 956.9 1063.6 956.9 C1066.8 956.9 1070.0 959.3 1073.2 959.3 C1076.4 959.3 1079.6 959.3 1082.8 959.3 C1086.0 959.3 1089.2 959.5 1092.4 959.5 C1095.6 959.5 1098.9 959.0 1102.1 959.0 C1105.3 959.0 1108.5 959.5 1111.7 959.5 C1114.9 959.5 1118.1 956.9 1121.3 956.9 C1124.5 956.9 1127.7 959.3 1130.9 959.3 C1134.1 959.3 1137.3 959.3 1140.5 959.3 C1143.7 959.3 1147.0 959.5 1150.2 959.5 C1153.4 959.5 1156.6 959.0 1159.8 959.0 C1163.0 959.0 1166.2 959.5 1169.4 959.5 C1172.6 959.5 1175.8 956.9 1179.0 956.9 C1182.2 956.9 1185.4 959.3 1188.6 959.3 C1191.8 959.3 1195.1 956.9 1198.3 956.9 C1201.5 956.9 1204.7 959.5 1207.9 959.5 C1211.1 959.5 1214.3 959.0 1217.5 959.0 C1220.7 959.0 1223.9 959.5 1227.1 959.5 C1230.3 959.5 1233.5 959.4 1236.7 958.5 C1239.9 957.5 1243.2 958.4 1246.4 932.2 C1249.6 906.0 1252.8 784.3 1256.0 784.3 C1259.2 784.3 1262.4 881.7 1265.6 885.1 C1268.8 888.6 1272.0 888.6 1275.2 888.6 C1278.4 888.6 1281.6 882.7 1284.8 882.7 C1288.0 882.7 1291.3 929.3 1294.5 929.3 C1297.7 929.3 1300.9 923.5 1304.1 919.1 C1307.3 914.8 1310.5 903.1 1313.7 903.1 C1316.9 903.1 1320.1 911.9 1323.3 911.9 C1326.5 911.9 1329.7 909.9 1332.9 903.6 C1336.1 897.3 1339.4 880.6 1342.6 873.9 C1345.8 867.2 1349.0 863.2 1352.2 863.2 C1355.4 863.2 1358.6 903.9 1361.8 905.7 C1365.0 907.6 1368.2 907.2 1371.4 907.6 C1374.6 908.1 1377.8 917.0 1381.0 917.0 C1384.2 917.0 1387.5 908.2 1390.7 908.2 C1393.9 908.2 1397.1 928.2 1400.3 928.2 C1403.5 928.2 1406.7 908.2 1409.9 908.2 C1413.1 908.2 1416.3 908.2 1419.5 908.2 C1422.7 908.2 1425.9 940.8 1429.1 942.4 C1432.3 944.0 1435.6 944.0 1438.8 944.0 C1442.0 944.0 1445.2 942.1 1448.4 942.1 C1451.6 942.1 1454.8 945.9 1458.0 945.9 C1461.2 945.9 1464.4 941.9 1467.6 940.5 C1470.8 939.2 1474.0 937.9 1477.2 937.9 C1480.4 937.9 1483.7 938.6 1486.9 939.7 C1490.1 940.9 1493.3 943.7 1496.5 944.8 C1499.7 946.0 1502.9 946.7 1506.1 946.7 C1509.3 946.7 1512.5 946.7 1515.7 946.7 C1518.9 946.7 1522.1 946.7 1525.3 946.7 C1528.5 946.7 1531.8 944.8 1535.0 944.0 C1538.2 943.3 1541.4 942.1 1544.6 942.1 C1547.8 942.1 1551.0 946.7 1554.2 946.7 C1557.4 946.7 1560.6 946.7 1563.8 946.7 C1567.0 946.7 1570.2 944.0 1573.4 944.0 C1576.6 944.0 1579.9 944.0 1583.1 944.0 C1586.3 944.0 1589.5 958.5 1592.7 958.5 C1595.9 958.5 1599.1 944.3 1602.3 943.2 C1605.5 942.1 1608.7 942.1 1611.9 942.1 C1615.1 942.1 1618.3 946.7 1621.5 946.7 C1624.7 946.7 1628.0 946.7 1631.2 946.7 C1634.4 946.7 1637.6 942.1 1640.8 942.1 C1644.0 942.1 1647.2 945.9 1650.4 945.9 C1653.6 945.9 1656.8 944.1 1660.0 943.5 C1663.2 942.9 1666.4 942.1 1669.6 942.1 C1672.8 942.1 1676.1 944.1 1679.3 944.8 C1682.5 945.6 1685.7 946.7 1688.9 946.7 C1692.1 946.7 1695.3 942.1 1698.5 942.1 C1701.7 942.1 1704.9 945.1 1708.1 945.1 C1711.3 945.1 1714.5 945.1 1717.7 945.1 C1720.9 945.1 1724.2 945.1 1727.4 945.1 C1730.6 945.1 1733.8 947.2 1737.0 947.2 C1740.2 947.2 1743.4 945.1 1746.6 945.1 C1749.8 945.1 1753.0 947.2 1756.2 947.2 C1759.4 947.2 1762.6 942.7 1765.8 942.7 C1769.0 942.7 1772.3 947.2 1775.5 947.2 C1778.7 947.2 1781.9 945.8 1785.1 945.1 C1788.3 944.3 1791.5 942.7 1794.7 942.7 C1797.9 942.7 1801.1 942.7 1804.3 942.7 C1807.5 942.7 1810.7 946.4 1813.9 946.4 C1817.1 946.4 1820.4 946.4 1823.6 946.4 C1826.8 946.4 1830.0 942.7 1833.2 942.7 C1836.4 942.7 1839.6 942.7 1842.8 942.7 C1846.0 942.7 1849.2 936.8 1852.4 936.8 C1855.6 936.8 1858.8 945.1 1862.0 945.1 C1865.2 945.1 1868.5 945.1 1871.7 945.1 C1874.9 945.1 1878.1 942.7 1881.3 942.7 C1884.5 942.7 1887.7 945.1 1890.9 945.1 C1894.1 945.1 1897.3 920.2 1900.5 920.2 C1903.7 920.2 1906.9 921.6 1910.1 923.4 C1913.3 925.2 1916.6 931.2 1919.8 931.2 C1923.0 931.2 1926.2 900.1 1929.4 900.1 C1932.6 900.1 1935.8 900.1 1939.0 900.1 C1942.2 900.1 1945.4 914.9 1948.6 922.3" fill="none" stroke="rgba(0,0,0,0.1)" stroke-width="4.8" stroke-linejoin="round"/>
<path d="M496.0 948.8 C499.2 942.5 502.4 929.8 505.6 929.8 C508.8 929.8 512.0 932.9 515.2 936.0 C518.4 939.1 521.7 948.3 524.9 948.3 C528.1 948.3 531.3 947.0 534.5 947.0 C537.7 947.0 540.9 948.2 544.1 948.8 C547.3 949.5 550.5 950.7 553.7 950.7 C556.9 950.7 560.1 931.1 563.3 925.0 C566.5 918.9 569.8 916.4 573.0 914.0 C576.2 911.7 579.4 912.3 582.6 911.1 C585.8 909.9 589.0 911.0 592.2 903.1 C595.4 895.1 598.6 838.8 601.8 838.8 C605.0 838.8 608.2 839.4 611.4 851.7 C614.6 864.0 617.9 896.0 621.1 912.7 C624.3 929.4 627.5 949.4 630.7 951.8 C633.9 954.2 637.1 954.2 640.3 954.2 C643.5 954.2 646.7 907.9 649.9 907.9 C653.1 907.9 656.3 932.6 659.5 933.6 C662.7 934.6 666.0 934.2 669.2 934.6 C672.4 935.1 675.6 942.8 678.8 945.6 C682.0 948.5 685.2 951.8 688.4 951.8 C691.6 951.8 694.8 942.4 698.0 937.1 C701.2 931.7 704.4 919.9 707.6 919.9 C710.8 919.9 714.1 942.8 717.3 949.4 C720.5 955.9 723.7 959.3 726.9 959.3 C730.1 959.3 733.3 959.3 736.5 959.3 C739.7 959.3 742.9 956.6 746.1 956.6 C749.3 956.6 752.5 958.5 755.7 959.0 C758.9 959.5 762.2 959.5 765.4 959.5 C768.6 959.5 771.8 956.6 775.0 956.6 C778.2 956.6 781.4 959.3 784.6 959.3 C787.8 959.3 791.0 956.6 794.2 956.6 C797.4 956.6 800.6 959.5 803.8 959.5 C807.0 959.5 810.3 959.5 813.5 959.0 C816.7 958.5 819.9 956.6 823.1 956.6 C826.3 956.6 829.5 959.3 832.7 959.3 C835.9 959.3 839.1 959.3 842.3 959.3 C845.5 959.3 848.7 957.1 851.9 957.1 C855.1 957.1 858.4 959.5 861.6 959.5 C864.8 959.5 868.0 959.4 871.2 959.0 C874.4 958.6 877.6 957.1 880.8 957.1 C884.0 957.1 887.2 959.3 890.4 959.3 C893.6 959.3 896.8 959.3 900.0 959.3 C903.2 959.3 906.5 957.1 909.7 957.1 C912.9 957.1 916.1 959.5 919.3 959.5 C922.5 959.5 925.7 957.1 928.9 957.1 C932.1 957.1 935.3 959.5 938.5 959.5 C941.7 959.5 944.9 959.5 948.1 959.3 C951.3 959.0 954.6 957.1 957.8 957.1 C961.0 957.1 964.2 959.0 967.4 959.3 C970.6 959.5 973.8 959.5 977.0 959.5 C980.2 959.5 983.4 957.1 986.6 957.1 C989.8 957.1 993.0 959.5 996.2 959.5 C999.4 959.5 1002.7 959.5 1005.9 959.3 C1009.1 959.0 1012.3 956.9 1015.5 956.9 C1018.7 956.9 1021.9 959.0 1025.1 959.3 C1028.3 959.5 1031.5 959.5 1034.7 959.5 C1037.9 959.5 1041.1 956.9 1044.3 956.9 C1047.5 956.9 1050.8 959.5 1054.0 959.5 C1057.2 959.5 1060.4 956.9 1063.6 956.9 C1066.8 956.9 1070.0 959.3 1073.2 959.3 C1076.4 959.3 1079.6 959.3 1082.8 959.3 C1086.0 959.3 1089.2 959.5 1092.4 959.5 C1095.6 959.5 1098.9 959.0 1102.1 959.0 C1105.3 959.0 1108.5 959.5 1111.7 959.5 C1114.9 959.5 1118.1 956.9 1121.3 956.9 C1124.5 956.9 1127.7 959.3 1130.9 959.3 C1134.1 959.3 1137.3 959.3 1140.5 959.3 C1143.7 959.3 1147.0 959.5 1150.2 959.5 C1153.4 959.5 1156.6 959.0 1159.8 959.0 C1163.0 959.0 1166.2 959.5 1169.4 959.5 C1172.6 959.5 1175.8 956.9 1179.0 956.9 C1182.2 956.9 1185.4 959.3 1188.6 959.3 C1191.8 959.3 1195.1 956.9 1198.3 956.9 C1201.5 956.9 1204.7 959.5 1207.9 959.5 C1211.1 959.5 1214.3 959.0 1217.5 959.0 C1220.7 959.0 1223.9 959.5 1227.1 959.5 C1230.3 959.5 1233.5 959.4 1236.7 958.5 C1239.9 957.5 1243.2 958.4 1246.4 932.2 C1249.6 906.0 1252.8 784.3 1256.0 784.3 C1259.2 784.3 1262.4 881.7 1265.6 885.1 C1268.8 888.6 1272.0 888.6 1275.2 888.6 C1278.4 888.6 1281.6 882.7 1284.8 882.7 C1288.0 882.7 1291.3 929.3 1294.5 929.3 C1297.7 929.3 1300.9 923.5 1304.1 919.1 C1307.3 914.8 1310.5 903.1 1313.7 903.1 C1316.9 903.1 1320.1 911.9 1323.3 911.9 C1326.5 911.9 1329.7 909.9 1332.9 903.6 C1336.1 897.3 1339.4 880.6 1342.6 873.9 C1345.8 867.2 1349.0 863.2 1352.2 863.2 C1355.4 863.2 1358.6 895.6 1361.8 905.7 C1365.0 915.9 1368.2 920.2 1371.4 924.2 C1374.6 928.3 1377.8 930.1 1381.0 930.1 C1384.2 930.1 1387.5 923.7 1390.7 923.7 C1393.9 923.7 1397.1 942.4 1400.3 942.4 C1403.5 942.4 1406.7 922.1 1409.9 922.1 C1413.1 922.1 1416.3 945.7 1419.5 951.8 C1422.7 957.8 1425.9 958.2 1429.1 958.5 C1432.3 958.7 1435.6 958.7 1438.8 958.7 C1442.0 958.7 1445.2 958.5 1448.4 958.5 C1451.6 958.5 1454.8 958.5 1458.0 958.5 C1461.2 958.5 1464.4 958.5 1467.6 958.5 C1470.8 958.5 1474.0 958.5 1477.2 958.5 C1480.4 958.5 1483.7 958.5 1486.9 958.5 C1490.1 958.5 1493.3 958.5 1496.5 958.5 C1499.7 958.5 1502.9 958.5 1506.1 958.5 C1509.3 958.5 1512.5 958.5 1515.7 958.5 C1518.9 958.5 1522.1 958.5 1525.3 958.5 C1528.5 958.5 1531.8 958.5 1535.0 958.5 C1538.2 958.5 1541.4 958.5 1544.6 958.5 C1547.8 958.5 1551.0 958.5 1554.2 958.5 C1557.4 958.5 1560.6 958.5 1563.8 958.5 C1567.0 958.5 1570.2 958.5 1573.4 958.5 C1576.6 958.5 1579.9 958.5 1583.1 958.5 C1586.3 958.5 1589.5 959.3 1592.7 959.3 C1595.9 959.3 1599.1 958.5 1602.3 958.5 C1605.5 958.5 1608.7 958.5 1611.9 958.5 C1615.1 958.5 1618.3 958.5 1621.5 958.5 C1624.7 958.5 1628.0 958.5 1631.2 958.5 C1634.4 958.5 1637.6 958.5 1640.8 958.5 C1644.0 958.5 1647.2 958.0 1650.4 956.3 C1653.6 954.7 1656.8 950.7 1660.0 948.6 C1663.2 946.5 1666.4 943.7 1669.6 943.7 C1672.8 943.7 1676.1 944.3 1679.3 944.8 C1682.5 945.3 1685.7 946.7 1688.9 946.7 C1692.1 946.7 1695.3 942.1 1698.5 942.1 C1701.7 942.1 1704.9 945.1 1708.1 945.1 C1711.3 945.1 1714.5 945.1 1717.7 945.1 C1720.9 945.1 1724.2 945.1 1727.4 945.1 C1730.6 945.1 1733.8 947.2 1737.0 947.2 C1740.2 947.2 1743.4 945.1 1746.6 945.1 C1749.8 945.1 1753.0 947.2 1756.2 947.2 C1759.4 947.2 1762.6 942.7 1765.8 942.7 C1769.0 942.7 1772.3 947.2 1775.5 947.2 C1778.7 947.2 1781.9 945.8 1785.1 945.1 C1788.3 944.3 1791.5 942.7 1794.7 942.7 C1797.9 942.7 1801.1 942.7 1804.3 942.7 C1807.5 942.7 1810.7 946.4 1813.9 946.4 C1817.1 946.4 1820.4 946.4 1823.6 946.4 C1826.8 946.4 1830.0 942.7 1833.2 942.7 C1836.4 942.7 1839.6 942.7 1842.8 942.7 C1846.0 942.7 1849.2 936.8 1852.4 936.8 C1855.6 936.8 1858.8 945.1 1862.0 945.1 C1865.2 945.1 1868.5 945.1 1871.7 945.1 C1874.9 945.1 1878.1 942.7 1881.3 942.7 C1884.5 942.7 1887.7 945.1 1890.9 945.1 C1894.1 945.1 1897.3 920.2 1900.5 920.2 C1903.7 920.2 1906.9 921.6 1910.1 923.4 C1913.3 925.2 1916.6 931.2 1919.8 931.2 C1923.0 931.2 1926.2 900.1 1929.4 900.1 C1932.6 900.1 1935.8 900.1 1939.0 900.1 C1942.2 900.1 1945.4 914.9 1948.6 922.3 L1948.6 959.8 L496.0 959.8 Z" fill="#079b6f"/>
<path d="M496.0 948.8 C499.2 942.5 502.4 929.8 505.6 929.8 C508.8 929.8 512.0 932.9 515.2 936.0 C518.4 939.1 521.7 948.3 524.9 948.3 C528.1 948.3 531.3 947.0 534.5 947.0 C537.7 947.0 540.9 948.2 544.1 948.8 C547.3 949.5 550.5 950.7 553.7 950.7 C556.9 950.7 560.1 931.1 563.3 925.0 C566.5 918.9 569.8 916.4 573.0 914.0 C576.2 911.7 579.4 912.3 582.6 911.1 C585.8 909.9 589.0 911.0 592.2 903.1 C595.4 895.1 598.6 838.8 601.8 838.8 C605.0 838.8 608.2 839.4 611.4 851.7 C614.6 864.0 617.9 896.0 621.1 912.7 C624.3 929.4 627.5 949.4 630.7 951.8 C633.9 954.2 637.1 954.2 640.3 954.2 C643.5 954.2 646.7 907.9 649.9 907.9 C653.1 907.9 656.3 932.6 659.5 933.6 C662.7 934.6 666.0 934.2 669.2 934.6 C672.4 935.1 675.6 942.8 678.8 945.6 C682.0 948.5 685.2 951.8 688.4 951.8 C691.6 951.8 694.8 942.4 698.0 937.1 C701.2 931.7 704.4 919.9 707.6 919.9 C710.8 919.9 714.1 942.8 717.3 949.4 C720.5 955.9 723.7 959.3 726.9 959.3 C730.1 959.3 733.3 959.3 736.5 959.3 C739.7 959.3 742.9 956.6 746.1 956.6 C749.3 956.6 752.5 958.5 755.7 959.0 C758.9 959.5 762.2 959.5 765.4 959.5 C768.6 959.5 771.8 956.6 775.0 956.6 C778.2 956.6 781.4 959.3 784.6 959.3 C787.8 959.3 791.0 956.6 794.2 956.6 C797.4 956.6 800.6 959.5 803.8 959.5 C807.0 959.5 810.3 959.5 813.5 959.0 C816.7 958.5 819.9 956.6 823.1 956.6 C826.3 956.6 829.5 959.3 832.7 959.3 C835.9 959.3 839.1 959.3 842.3 959.3 C845.5 959.3 848.7 957.1 851.9 957.1 C855.1 957.1 858.4 959.5 861.6 959.5 C864.8 959.5 868.0 959.4 871.2 959.0 C874.4 958.6 877.6 957.1 880.8 957.1 C884.0 957.1 887.2 959.3 890.4 959.3 C893.6 959.3 896.8 959.3 900.0 959.3 C903.2 959.3 906.5 957.1 909.7 957.1 C912.9 957.1 916.1 959.5 919.3 959.5 C922.5 959.5 925.7 957.1 928.9 957.1 C932.1 957.1 935.3 959.5 938.5 959.5 C941.7 959.5 944.9 959.5 948.1 959.3 C951.3 959.0 954.6 957.1 957.8 957.1 C961.0 957.1 964.2 959.0 967.4 959.3 C970.6 959.5 973.8 959.5 977.0 959.5 C980.2 959.5 983.4 957.1 986.6 957.1 C989.8 957.1 993.0 959.5 996.2 959.5 C999.4 959.5 1002.7 959.5 1005.9 959.3 C1009.1 959.0 1012.3 956.9 1015.5 956.9 C1018.7 956.9 1021.9 959.0 1025.1 959.3 C1028.3 959.5 1031.5 959.5 1034.7 959.5 C1037.9 959.5 1041.1 956.9 1044.3 956.9 C1047.5 956.9 1050.8 959.5 1054.0 959.5 C1057.2 959.5 1060.4 956.9 1063.6 956.9 C1066.8 956.9 1070.0 959.3 1073.2 959.3 C1076.4 959.3 1079.6 959.3 1082.8 959.3 C1086.0 959.3 1089.2 959.5 1092.4 959.5 C1095.6 959.5 1098.9 959.0 1102.1 959.0 C1105.3 959.0 1108.5 959.5 1111.7 959.5 C1114.9 959.5 1118.1 956.9 1121.3 956.9 C1124.5 956.9 1127.7 959.3 1130.9 959.3 C1134.1 959.3 1137.3 959.3 1140.5 959.3 C1143.7 959.3 1147.0 959.5 1150.2 959.5 C1153.4 959.5 1156.6 959.0 1159.8 959.0 C1163.0 959.0 1166.2 959.5 1169.4 959.5 C1172.6 959.5 1175.8 956.9 1179.0 956.9 C1182.2 956.9 1185.4 959.3 1188.6 959.3 C1191.8 959.3 1195.1 956.9 1198.3 956.9 C1201.5 956.9 1204.7 959.5 1207.9 959.5 C1211.1 959.5 1214.3 959.0 1217.5 959.0 C1220.7 959.0 1223.9 959.5 1227.1 959.5 C1230.3 959.5 1233.5 959.4 1236.7 958.5 C1239.9 957.5 1243.2 958.4 1246.4 932.2 C1249.6 906.0 1252.8 784.3 1256.0 784.3 C1259.2 784.3 1262.4 881.7 1265.6 885.1 C1268.8 888.6 1272.0 888.6 1275.2 888.6 C1278.4 888.6 1281.6 882.7 1284.8 882.7 C1288.0 882.7 1291.3 929.3 1294.5 929.3 C1297.7 929.3 1300.9 923.5 1304.1 919.1 C1307.3 914.8 1310.5 903.1 1313.7 903.1 C1316.9 903.1 1320.1 911.9 1323.3 911.9 C1326.5 911.9 1329.7 909.9 1332.9 903.6 C1336.1 897.3 1339.4 880.6 1342.6 873.9 C1345.8 867.2 1349.0 863.2 1352.2 863.2 C1355.4 863.2 1358.6 895.6 1361.8 905.7 C1365.0 915.9 1368.2 920.2 1371.4 924.2 C1374.6 928.3 1377.8 930.1 1381.0 930.1 C1384.2 930.1 1387.5 923.7 1390.7 923.7 C1393.9 923.7 1397.1 942.4 1400.3 942.4 C1403.5 942.4 1406.7 922.1 1409.9 922.1 C1413.1 922.1 1416.3 945.7 1419.5 951.8 C1422.7 957.8 1425.9 958.2 1429.1 958.5 C1432.3 958.7 1435.6 958.7 1438.8 958.7 C1442.0 958.7 1445.2 958.5 1448.4 958.5 C1451.6 958.5 1454.8 958.5 1458.0 958.5 C1461.2 958.5 1464.4 958.5 1467.6 958.5 C1470.8 958.5 1474.0 958.5 1477.2 958.5 C1480.4 958.5 1483.7 958.5 1486.9 958.5 C1490.1 958.5 1493.3 958.5 1496.5 958.5 C1499.7 958.5 1502.9 958.5 1506.1 958.5 C1509.3 958.5 1512.5 958.5 1515.7 958.5 C1518.9 958.5 1522.1 958.5 1525.3 958.5 C1528.5 958.5 1531.8 958.5 1535.0 958.5 C1538.2 958.5 1541.4 958.5 1544.6 958.5 C1547.8 958.5 1551.0 958.5 1554.2 958.5 C1557.4 958.5 1560.6 958.5 1563.8 958.5 C1567.0 958.5 1570.2 958.5 1573.4 958.5 C1576.6 958.5 1579.9 958.5 1583.1 958.5 C1586.3 958.5 1589.5 959.3 1592.7 959.3 C1595.9 959.3 1599.1 958.5 1602.3 958.5 C1605.5 958.5 1608.7 958.5 1611.9 958.5 C1615.1 958.5 1618.3 958.5 1621.5 958.5 C1624.7 958.5 1628.0 958.5 1631.2 958.5 C1634.4 958.5 1637.6 958.5 1640.8 958.5 C1644.0 958.5 1647.2 958.0 1650.4 956.3 C1653.6 954.7 1656.8 950.7 1660.0 948.6 C1663.2 946.5 1666.4 943.7 1669.6 943.7 C1672.8 943.7 1676.1 944.3 1679.3 944.8 C1682.5 945.3 1685.7 946.7 1688.9 946.7 C1692.1 946.7 1695.3 942.1 1698.5 942.1 C1701.7 942.1 1704.9 945.1 1708.1 945.1 C1711.3 945.1 1714.5 945.1 1717.7 945.1 C1720.9 945.1 1724.2 945.1 1727.4 945.1 C1730.6 945.1 1733.8 947.2 1737.0 947.2 C1740.2 947.2 1743.4 945.1 1746.6 945.1 C1749.8 945.1 1753.0 947.2 1756.2 947.2 C1759.4 947.2 1762.6 942.7 1765.8 942.7 C1769.0 942.7 1772.3 947.2 1775.5 947.2 C1778.7 947.2 1781.9 945.8 1785.1 945.1 C1788.3 944.3 1791.5 942.7 1794.7 942.7 C1797.9 942.7 1801.1 942.7 1804.3 942.7 C1807.5 942.7 1810.7 946.4 1813.9 946.4 C1817.1 946.4 1820.4 946.4 1823.6 946.4 C1826.8 946.4 1830.0 942.7 1833.2 942.7 C1836.4 942.7 1839.6 942.7 1842.8 942.7 C1846.0 942.7 1849.2 936.8 1852.4 936.8 C1855.6 936.8 1858.8 945.1 1862.0 945.1 C1865.2 945.1 1868.5 945.1 1871.7 945.1 C1874.9 945.1 1878.1 942.7 1881.3 942.7 C1884.5 942.7 1887.7 945.1 1890.9 945.1 C1894.1 945.1 1897.3 920.2 1900.5 920.2 C1903.7 920.2 1906.9 921.6 1910.1 923.4 C1913.3 925.2 1916.6 931.2 1919.8 931.2 C1923.0 931.2 1926.2 900.1 1929.4 900.1 C1932.6 900.1 1935.8 900.1 1939.0 900.1 C1942.2 900.1 1945.4 914.9 1948.6 922.3" fill="none" stroke="rgba(0,0,0,0.1)" stroke-width="4.8" stroke-linejoin="round"/>
<path d="M496.0 948.8 C499.2 942.5 502.4 929.8 505.6 929.8 C508.8 929.8 512.0 932.9 515.2 936.0 C518.4 939.1 521.7 948.3 524.9 948.3 C528.1 948.3 531.3 947.0 534.5 947.0 C537.7 947.0 540.9 948.2 544.1 948.8 C547.3 949.5 550.5 950.7 553.7 950.7 C556.9 950.7 560.1 931.1 563.3 925.0 C566.5 918.9 569.8 916.4 573.0 914.0 C576.2 911.7 579.4 912.3 582.6 911.1 C585.8 909.9 589.0 911.0 592.2 903.1 C595.4 895.1 598.6 838.8 601.8 838.8 C605.0 838.8 608.2 839.4 611.4 851.7 C614.6 864.0 617.9 896.0 621.1 912.7 C624.3 929.4 627.5 949.4 630.7 951.8 C633.9 954.2 637.1 954.2 640.3 954.2 C643.5 954.2 646.7 907.9 649.9 907.9 C653.1 907.9 656.3 932.6 659.5 933.6 C662.7 934.6 666.0 934.2 669.2 934.6 C672.4 935.1 675.6 942.8 678.8 945.6 C682.0 948.5 685.2 951.8 688.4 951.8 C691.6 951.8 694.8 942.4 698.0 937.1 C701.2 931.7 704.4 919.9 707.6 919.9 C710.8 919.9 714.1 942.8 717.3 949.4 C720.5 955.9 723.7 959.3 726.9 959.3 C730.1 959.3 733.3 959.3 736.5 959.3 C739.7 959.3 742.9 956.6 746.1 956.6 C749.3 956.6 752.5 958.5 755.7 959.0 C758.9 959.5 762.2 959.5 765.4 959.5 C768.6 959.5 771.8 956.6 775.0 956.6 C778.2 956.6 781.4 959.3 784.6 959.3 C787.8 959.3 791.0 956.6 794.2 956.6 C797.4 956.6 800.6 959.5 803.8 959.5 C807.0 959.5 810.3 959.5 813.5 959.0 C816.7 958.5 819.9 956.6 823.1 956.6 C826.3 956.6 829.5 959.3 832.7 959.3 C835.9 959.3 839.1 959.3 842.3 959.3 C845.5 959.3 848.7 957.1 851.9 957.1 C855.1 957.1 858.4 959.5 861.6 959.5 C864.8 959.5 868.0 959.4 871.2 959.0 C874.4 958.6 877.6 957.1 880.8 957.1 C884.0 957.1 887.2 959.3 890.4 959.3 C893.6 959.3 896.8 959.3 900.0 959.3 C903.2 959.3 906.5 957.1 909.7 957.1 C912.9 957.1 916.1 959.5 919.3 959.5 C922.5 959.5 925.7 957.1 928.9 957.1 C932.1 957.1 935.3 959.5 938.5 959.5 C941.7 959.5 944.9 959.5 948.1 959.3 C951.3 959.0 954.6 957.1 957.8 957.1 C961.0 957.1 964.2 959.0 967.4 959.3 C970.6 959.5 973.8 959.5 977.0 959.5 C980.2 959.5 983.4 957.1 986.6 957.1 C989.8 957.1 993.0 959.5 996.2 959.5 C999.4 959.5 1002.7 959.5 1005.9 959.3 C1009.1 959.0 1012.3 956.9 1015.5 956.9 C1018.7 956.9 1021.9 959.0 1025.1 959.3 C1028.3 959.5 1031.5 959.5 1034.7 959.5 C1037.9 959.5 1041.1 956.9 1044.3 956.9 C1047.5 956.9 1050.8 959.5 1054.0 959.5 C1057.2 959.5 1060.4 956.9 1063.6 956.9 C1066.8 956.9 1070.0 959.3 1073.2 959.3 C1076.4 959.3 1079.6 959.3 1082.8 959.3 C1086.0 959.3 1089.2 959.5 1092.4 959.5 C1095.6 959.5 1098.9 959.0 1102.1 959.0 C1105.3 959.0 1108.5 959.5 1111.7 959.5 C1114.9 959.5 1118.1 956.9 1121.3 956.9 C1124.5 956.9 1127.7 959.3 1130.9 959.3 C1134.1 959.3 1137.3 959.3 1140.5 959.3 C1143.7 959.3 1147.0 959.5 1150.2 959.5 C1153.4 959.5 1156.6 959.0 1159.8 959.0 C1163.0 959.0 1166.2 959.5 1169.4 959.5 C1172.6 959.5 1175.8 956.9 1179.0 956.9 C1182.2 956.9 1185.4 959.3 1188.6 959.3 C1191.8 959.3 1195.1 956.9 1198.3 956.9 C1201.5 956.9 1204.7 959.5 1207.9 959.5 C1211.1 959.5 1214.3 959.0 1217.5 959.0 C1220.7 959.0 1223.9 959.5 1227.1 959.5 C1230.3 959.5 1233.5 959.5 1236.7 958.5 C1239.9 957.4 1243.2 944.1 1246.4 932.2 C1249.6 920.3 1252.8 887.0 1256.0 887.0 C1259.2 887.0 1262.4 932.2 1265.6 932.2 C1268.8 932.2 1272.0 925.0 1275.2 925.0 C1278.4 925.0 1281.6 925.9 1284.8 929.3 C1288.0 932.7 1291.3 945.6 1294.5 945.6 C1297.7 945.6 1300.9 924.2 1304.1 924.2 C1307.3 924.2 1310.5 928.2 1313.7 928.2 C1316.9 928.2 1320.1 921.6 1323.3 919.1 C1326.5 916.6 1329.7 913.2 1332.9 913.2 C1336.1 913.2 1339.4 913.2 1342.6 913.2 C1345.8 913.2 1349.0 917.5 1352.2 922.1 C1355.4 926.6 1358.6 936.1 1361.8 940.5 C1365.0 945.0 1368.2 948.8 1371.4 948.8 C1374.6 948.8 1377.8 948.3 1381.0 947.8 C1384.2 947.2 1387.5 945.6 1390.7 945.6 C1393.9 945.6 1397.1 949.6 1400.3 949.6 C1403.5 949.6 1406.7 942.4 1409.9 942.4 C1413.1 942.4 1416.3 952.1 1419.5 955.0 C1422.7 957.9 1425.9 959.8 1429.1 959.8 C1432.3 959.8 1435.6 959.8 1438.8 959.8 C1442.0 959.8 1445.2 959.8 1448.4 959.8 C1451.6 959.8 1454.8 959.8 1458.0 959.8 C1461.2 959.8 1464.4 959.8 1467.6 959.8 C1470.8 959.8 1474.0 959.8 1477.2 959.8 C1480.4 959.8 1483.7 959.8 1486.9 959.8 C1490.1 959.8 1493.3 959.8 1496.5 959.8 C1499.7 959.8 1502.9 959.8 1506.1 959.8 C1509.3 959.8 1512.5 959.8 1515.7 959.8 C1518.9 959.8 1522.1 959.8 1525.3 959.8 C1528.5 959.8 1531.8 959.8 1535.0 959.8 C1538.2 959.8 1541.4 959.8 1544.6 959.8 C1547.8 959.8 1551.0 959.8 1554.2 959.8 C1557.4 959.8 1560.6 959.8 1563.8 959.8 C1567.0 959.8 1570.2 959.8 1573.4 959.8 C1576.6 959.8 1579.9 959.8 1583.1 959.8 C1586.3 959.8 1589.5 959.8 1592.7 959.8 C1595.9 959.8 1599.1 959.8 1602.3 959.8 C1605.5 959.8 1608.7 959.8 1611.9 959.8 C1615.1 959.8 1618.3 959.8 1621.5 959.8 C1624.7 959.8 1628.0 959.8 1631.2 959.8 C1634.4 959.8 1637.6 959.8 1640.8 959.8 C1644.0 959.8 1647.2 958.9 1650.4 957.1 C1653.6 955.3 1656.8 951.3 1660.0 949.1 C1663.2 946.9 1666.4 943.7 1669.6 943.7 C1672.8 943.7 1676.1 944.3 1679.3 944.8 C1682.5 945.3 1685.7 946.7 1688.9 946.7 C1692.1 946.7 1695.3 942.1 1698.5 942.1 C1701.7 942.1 1704.9 945.1 1708.1 945.1 C1711.3 945.1 1714.5 945.1 1717.7 945.1 C1720.9 945.1 1724.2 945.1 1727.4 945.1 C1730.6 945.1 1733.8 947.2 1737.0 947.2 C1740.2 947.2 1743.4 945.1 1746.6 945.1 C1749.8 945.1 1753.0 947.2 1756.2 947.2 C1759.4 947.2 1762.6 942.7 1765.8 942.7 C1769.0 942.7 1772.3 947.2 1775.5 947.2 C1778.7 947.2 1781.9 945.8 1785.1 945.1 C1788.3 944.3 1791.5 942.7 1794.7 942.7 C1797.9 942.7 1801.1 942.7 1804.3 942.7 C1807.5 942.7 1810.7 946.4 1813.9 946.4 C1817.1 946.4 1820.4 946.4 1823.6 946.4 C1826.8 946.4 1830.0 942.7 1833.2 942.7 C1836.4 942.7 1839.6 942.7 1842.8 942.7 C1846.0 942.7 1849.2 936.8 1852.4 936.8 C1855.6 936.8 1858.8 945.1 1862.0 945.1 C1865.2 945.1 1868.5 945.1 1871.7 945.1 C1874.9 945.1 1878.1 942.7 1881.3 942.7 C1884.5 942.7 1887.7 945.1 1890.9 945.1 C1894.1 945.1 1897.3 920.2 1900.5 920.2 C1903.7 920.2 1906.9 921.6 1910.1 923.4 C1913.3 925.2 1916.6 931.2 1919.8 931.2 C1923.0 931.2 1926.2 900.1 1929.4 900.1 C1932.6 900.1 1935.8 900.1 1939.0 900.1 C1942.2 900.1 1945.4 914.9 1948.6 922.3 L1948.6 959.8 L496.0 959.8 Z" fill="#00a9a8"/>
<path d="M496.0 948.8 C499.2 942.5 502.4 929.8 505.6 929.8 C508.8 929.8 512.0 932.9 515.2 936.0 C518.4 939.1 521.7 948.3 524.9 948.3 C528.1 948.3 531.3 947.0 534.5 947.0 C537.7 947.0 540.9 948.2 544.1 948.8 C547.3 949.5 550.5 950.7 553.7 950.7 C556.9 950.7 560.1 931.1 563.3 925.0 C566.5 918.9 569.8 916.4 573.0 914.0 C576.2 911.7 579.4 912.3 582.6 911.1 C585.8 909.9 589.0 911.0 592.2 903.1 C595.4 895.1 598.6 838.8 601.8 838.8 C605.0 838.8 608.2 839.4 611.4 851.7 C614.6 864.0 617.9 896.0 621.1 912.7 C624.3 929.4 627.5 949.4 630.7 951.8 C633.9 954.2 637.1 954.2 640.3 954.2 C643.5 954.2 646.7 907.9 649.9 907.9 C653.1 907.9 656.3 932.6 659.5 933.6 C662.7 934.6 666.0 934.2 669.2 934.6 C672.4 935.1 675.6 942.8 678.8 945.6 C682.0 948.5 685.2 951.8 688.4 951.8 C691.6 951.8 694.8 942.4 698.0 937.1 C701.2 931.7 704.4 919.9 707.6 919.9 C710.8 919.9 714.1 942.8 717.3 949.4 C720.5 955.9 723.7 959.3 726.9 959.3 C730.1 959.3 733.3 959.3 736.5 959.3 C739.7 959.3 742.9 956.6 746.1 956.6 C749.3 956.6 752.5 958.5 755.7 959.0 C758.9 959.5 762.2 959.5 765.4 959.5 C768.6 959.5 771.8 956.6 775.0 956.6 C778.2 956.6 781.4 959.3 784.6 959.3 C787.8 959.3 791.0 956.6 794.2 956.6 C797.4 956.6 800.6 959.5 803.8 959.5 C807.0 959.5 810.3 959.5 813.5 959.0 C816.7 958.5 819.9 956.6 823.1 956.6 C826.3 956.6 829.5 959.3 832.7 959.3 C835.9 959.3 839.1 959.3 842.3 959.3 C845.5 959.3 848.7 957.1 851.9 957.1 C855.1 957.1 858.4 959.5 861.6 959.5 C864.8 959.5 868.0 959.4 871.2 959.0 C874.4 958.6 877.6 957.1 880.8 957.1 C884.0 957.1 887.2 959.3 890.4 959.3 C893.6 959.3 896.8 959.3 900.0 959.3 C903.2 959.3 906.5 957.1 909.7 957.1 C912.9 957.1 916.1 959.5 919.3 959.5 C922.5 959.5 925.7 957.1 928.9 957.1 C932.1 957.1 935.3 959.5 938.5 959.5 C941.7 959.5 944.9 959.5 948.1 959.3 C951.3 959.0 954.6 957.1 957.8 957.1 C961.0 957.1 964.2 959.0 967.4 959.3 C970.6 959.5 973.8 959.5 977.0 959.5 C980.2 959.5 983.4 957.1 986.6 957.1 C989.8 957.1 993.0 959.5 996.2 959.5 C999.4 959.5 1002.7 959.5 1005.9 959.3 C1009.1 959.0 1012.3 956.9 1015.5 956.9 C1018.7 956.9 1021.9 959.0 1025.1 959.3 C1028.3 959.5 1031.5 959.5 1034.7 959.5 C1037.9 959.5 1041.1 956.9 1044.3 956.9 C1047.5 956.9 1050.8 959.5 1054.0 959.5 C1057.2 959.5 1060.4 956.9 1063.6 956.9 C1066.8 956.9 1070.0 959.3 1073.2 959.3 C1076.4 959.3 1079.6 959.3 1082.8 959.3 C1086.0 959.3 1089.2 959.5 1092.4 959.5 C1095.6 959.5 1098.9 959.0 1102.1 959.0 C1105.3 959.0 1108.5 959.5 1111.7 959.5 C1114.9 959.5 1118.1 956.9 1121.3 956.9 C1124.5 956.9 1127.7 959.3 1130.9 959.3 C1134.1 959.3 1137.3 959.3 1140.5 959.3 C1143.7 959.3 1147.0 959.5 1150.2 959.5 C1153.4 959.5 1156.6 959.0 1159.8 959.0 C1163.0 959.0 1166.2 959.5 1169.4 959.5 C1172.6 959.5 1175.8 956.9 1179.0 956.9 C1182.2 956.9 1185.4 959.3 1188.6 959.3 C1191.8 959.3 1195.1 956.9 1198.3 956.9 C1201.5 956.9 1204.7 959.5 1207.9 959.5 C1211.1 959.5 1214.3 959.0 1217.5 959.0 C1220.7 959.0 1223.9 959.5 1227.1 959.5 C1230.3 959.5 1233.5 959.5 1236.7 958.5 C1239.9 957.4 1243.2 944.1 1246.4 932.2 C1249.6 920.3 1252.8 887.0 1256.0 887.0 C1259.2 887.0 1262.4 932.2 1265.6 932.2 C1268.8 932.2 1272.0 925.0 1275.2 925.0 C1278.4 925.0 1281.6 925.9 1284.8 929.3 C1288.0 932.7 1291.3 945.6 1294.5 945.6 C1297.7 945.6 1300.9 924.2 1304.1 924.2 C1307.3 924.2 1310.5 928.2 1313.7 928.2 C1316.9 928.2 1320.1 921.6 1323.3 919.1 C1326.5 916.6 1329.7 913.2 1332.9 913.2 C1336.1 913.2 1339.4 913.2 1342.6 913.2 C1345.8 913.2 1349.0 917.5 1352.2 922.1 C1355.4 926.6 1358.6 936.1 1361.8 940.5 C1365.0 945.0 1368.2 948.8 1371.4 948.8 C1374.6 948.8 1377.8 948.3 1381.0 947.8 C1384.2 947.2 1387.5 945.6 1390.7 945.6 C1393.9 945.6 1397.1 949.6 1400.3 949.6 C1403.5 949.6 1406.7 942.4 1409.9 942.4 C1413.1 942.4 1416.3 952.1 1419.5 955.0 C1422.7 957.9 1425.9 959.8 1429.1 959.8 C1432.3 959.8 1435.6 959.8 1438.8 959.8 C1442.0 959.8 1445.2 959.8 1448.4 959.8 C1451.6 959.8 1454.8 959.8 1458.0 959.8 C1461.2 959.8 1464.4 959.8 1467.6 959.8 C1470.8 959.8 1474.0 959.8 1477.2 959.8 C1480.4 959.8 1483.7 959.8 1486.9 959.8 C1490.1 959.8 1493.3 959.8 1496.5 959.8 C1499.7 959.8 1502.9 959.8 1506.1 959.8 C1509.3 959.8 1512.5 959.8 1515.7 959.8 C1518.9 959.8 1522.1 959.8 1525.3 959.8 C1528.5 959.8 1531.8 959.8 1535.0 959.8 C1538.2 959.8 1541.4 959.8 1544.6 959.8 C1547.8 959.8 1551.0 959.8 1554.2 959.8 C1557.4 959.8 1560.6 959.8 1563.8 959.8 C1567.0 959.8 1570.2 959.8 1573.4 959.8 C1576.6 959.8 1579.9 959.8 1583.1 959.8 C1586.3 959.8 1589.5 959.8 1592.7 959.8 C1595.9 959.8 1599.1 959.8 1602.3 959.8 C1605.5 959.8 1608.7 959.8 1611.9 959.8 C1615.1 959.8 1618.3 959.8 1621.5 959.8 C1624.7 959.8 1628.0 959.8 1631.2 959.8 C1634.4 959.8 1637.6 959.8 1640.8 959.8 C1644.0 959.8 1647.2 958.9 1650.4 957.1 C1653.6 955.3 1656.8 951.3 1660.0 949.1 C1663.2 946.9 1666.4 943.7 1669.6 943.7 C1672.8 943.7 1676.1 944.3 1679.3 944.8 C1682.5 945.3 1685.7 946.7 1688.9 946.7 C1692.1 946.7 1695.3 942.1 1698.5 942.1 C1701.7 942.1 1704.9 945.1 1708.1 945.1 C1711.3 945.1 1714.5 945.1 1717.7 945.1 C1720.9 945.1 1724.2 945.1 1727.4 945.1 C1730.6 945.1 1733.8 947.2 1737.0 947.2 C1740.2 947.2 1743.4 945.1 1746.6 945.1 C1749.8 945.1 1753.0 947.2 1756.2 947.2 C1759.4 947.2 1762.6 942.7 1765.8 942.7 C1769.0 942.7 1772.3 947.2 1775.5 947.2 C1778.7 947.2 1781.9 945.8 1785.1 945.1 C1788.3 944.3 1791.5 942.7 1794.7 942.7 C1797.9 942.7 1801.1 942.7 1804.3 942.7 C1807.5 942.7 1810.7 946.4 1813.9 946.4 C1817.1 946.4 1820.4 946.4 1823.6 946.4 C1826.8 946.4 1830.0 942.7 1833.2 942.7 C1836.4 942.7 1839.6 942.7 1842.8 942.7 C1846.0 942.7 1849.2 936.8 1852.4 936.8 C1855.6 936.8 1858.8 945.1 1862.0 945.1 C1865.2 945.1 1868.5 945.1 1871.7 945.1 C1874.9 945.1 1878.1 942.7 1881.3 942.7 C1884.5 942.7 1887.7 945.1 1890.9 945.1 C1894.1 945.1 1897.3 920.2 1900.5 920.2 C1903.7 920.2 1906.9 921.6 1910.1 923.4 C1913.3 925.2 1916.6 931.2 1919.8 931.2 C1923.0 931.2 1926.2 900.1 1929.4 900.1 C1932.6 900.1 1935.8 900.1 1939.0 900.1 C1942.2 900.1 1945.4 914.9 1948.6 922.3" fill="none" stroke="rgba(0,0,0,0.1)" stroke-width="4.8" stroke-linejoin="round"/>
<path d="M496.0 948.8 C499.2 942.5 502.4 929.8 505.6 929.8 C508.8 929.8 512.0 932.9 515.2 936.0 C518.4 939.1 521.7 948.3 524.9 948.3 C528.1 948.3 531.3 947.0 534.5 947.0 C537.7 947.0 540.9 948.2 544.1 948.8 C547.3 949.5 550.5 950.7 553.7 950.7 C556.9 950.7 560.1 931.1 563.3 925.0 C566.5 918.9 569.8 916.4 573.0 914.0 C576.2 911.7 579.4 912.3 582.6 911.1 C585.8 909.9 589.0 911.0 592.2 903.1 C595.4 895.1 598.6 838.8 601.8 838.8 C605.0 838.8 608.2 839.4 611.4 851.7 C614.6 864.0 617.9 896.0 621.1 912.7 C624.3 929.4 627.5 949.4 630.7 951.8 C633.9 954.2 637.1 954.2 640.3 954.2 C643.5 954.2 646.7 907.9 649.9 907.9 C653.1 907.9 656.3 932.6 659.5 933.6 C662.7 934.6 666.0 934.2 669.2 934.6 C672.4 935.1 675.6 942.8 678.8 945.6 C682.0 948.5 685.2 951.8 688.4 951.8 C691.6 951.8 694.8 942.4 698.0 937.1 C701.2 931.7 704.4 919.9 707.6 919.9 C710.8 919.9 714.1 942.8 717.3 949.4 C720.5 955.9 723.7 959.3 726.9 959.3 C730.1 959.3 733.3 959.3 736.5 959.3 C739.7 959.3 742.9 956.6 746.1 956.6 C749.3 956.6 752.5 958.5 755.7 959.0 C758.9 959.5 762.2 959.5 765.4 959.5 C768.6 959.5 771.8 956.6 775.0 956.6 C778.2 956.6 781.4 959.3 784.6 959.3 C787.8 959.3 791.0 956.6 794.2 956.6 C797.4 956.6 800.6 959.5 803.8 959.5 C807.0 959.5 810.3 959.5 813.5 959.0 C816.7 958.5 819.9 956.6 823.1 956.6 C826.3 956.6 829.5 959.3 832.7 959.3 C835.9 959.3 839.1 959.3 842.3 959.3 C845.5 959.3 848.7 957.1 851.9 957.1 C855.1 957.1 858.4 959.5 861.6 959.5 C864.8 959.5 868.0 959.4 871.2 959.0 C874.4 958.6 877.6 957.1 880.8 957.1 C884.0 957.1 887.2 959.3 890.4 959.3 C893.6 959.3 896.8 959.3 900.0 959.3 C903.2 959.3 906.5 957.1 909.7 957.1 C912.9 957.1 916.1 959.5 919.3 959.5 C922.5 959.5 925.7 957.1 928.9 957.1 C932.1 957.1 935.3 959.5 938.5 959.5 C941.7 959.5 944.9 959.5 948.1 959.3 C951.3 959.0 954.6 957.1 957.8 957.1 C961.0 957.1 964.2 959.0 967.4 959.3 C970.6 959.5 973.8 959.5 977.0 959.5 C980.2 959.5 983.4 957.1 986.6 957.1 C989.8 957.1 993.0 959.5 996.2 959.5 C999.4 959.5 1002.7 959.5 1005.9 959.3 C1009.1 959.0 1012.3 956.9 1015.5 956.9 C1018.7 956.9 1021.9 959.0 1025.1 959.3 C1028.3 959.5 1031.5 959.5 1034.7 959.5 C1037.9 959.5 1041.1 956.9 1044.3 956.9 C1047.5 956.9 1050.8 959.5 1054.0 959.5 C1057.2 959.5 1060.4 956.9 1063.6 956.9 C1066.8 956.9 1070.0 959.3 1073.2 959.3 C1076.4 959.3 1079.6 959.3 1082.8 959.3 C1086.0 959.3 1089.2 959.5 1092.4 959.5 C1095.6 959.5 1098.9 959.0 1102.1 959.0 C1105.3 959.0 1108.5 959.5 1111.7 959.5 C1114.9 959.5 1118.1 956.9 1121.3 956.9 C1124.5 956.9 1127.7 959.3 1130.9 959.3 C1134.1 959.3 1137.3 959.3 1140.5 959.3 C1143.7 959.3 1147.0 959.5 1150.2 959.5 C1153.4 959.5 1156.6 959.0 1159.8 959.0 C1163.0 959.0 1166.2 959.5 1169.4 959.5 C1172.6 959.5 1175.8 956.9 1179.0 956.9 C1182.2 956.9 1185.4 959.3 1188.6 959.3 C1191.8 959.3 1195.1 956.9 1198.3 956.9 C1201.5 956.9 1204.7 959.5 1207.9 959.5 C1211.1 959.5 1214.3 959.0 1217.5 959.0 C1220.7 959.0 1223.9 959.5 1227.1 959.5 C1230.3 959.5 1233.5 959.5 1236.7 958.5 C1239.9 957.4 1243.2 938.9 1246.4 934.4 C1249.6 929.8 1252.8 929.8 1256.0 929.8 C1259.2 929.8 1262.4 946.7 1265.6 946.7 C1268.8 946.7 1272.0 936.5 1275.2 936.5 C1278.4 936.5 1281.6 940.7 1284.8 943.7 C1288.0 946.8 1291.3 954.7 1294.5 954.7 C1297.7 954.7 1300.9 947.8 1304.1 947.8 C1307.3 947.8 1310.5 953.6 1313.7 953.6 C1316.9 953.6 1320.1 929.6 1323.3 925.0 C1326.5 920.5 1329.7 920.5 1332.9 920.5 C1336.1 920.5 1339.4 926.2 1342.6 930.1 C1345.8 934.0 1349.0 939.8 1352.2 943.7 C1355.4 947.7 1358.6 951.1 1361.8 953.6 C1365.0 956.2 1368.2 959.3 1371.4 959.3 C1374.6 959.3 1377.8 958.6 1381.0 958.5 C1384.2 958.3 1387.5 958.2 1390.7 958.2 C1393.9 958.2 1397.1 959.0 1400.3 959.0 C1403.5 959.0 1406.7 958.6 1409.9 958.2 C1413.1 957.8 1416.3 956.9 1419.5 956.9 C1422.7 956.9 1425.9 959.8 1429.1 959.8 C1432.3 959.8 1435.6 959.8 1438.8 959.8 C1442.0 959.8 1445.2 959.8 1448.4 959.8 C1451.6 959.8 1454.8 959.8 1458.0 959.8 C1461.2 959.8 1464.4 959.8 1467.6 959.8 C1470.8 959.8 1474.0 959.8 1477.2 959.8 C1480.4 959.8 1483.7 959.8 1486.9 959.8 C1490.1 959.8 1493.3 959.8 1496.5 959.8 C1499.7 959.8 1502.9 959.8 1506.1 959.8 C1509.3 959.8 1512.5 959.8 1515.7 959.8 C1518.9 959.8 1522.1 959.8 1525.3 959.8 C1528.5 959.8 1531.8 959.8 1535.0 959.8 C1538.2 959.8 1541.4 959.8 1544.6 959.8 C1547.8 959.8 1551.0 959.8 1554.2 959.8 C1557.4 959.8 1560.6 959.8 1563.8 959.8 C1567.0 959.8 1570.2 959.8 1573.4 959.8 C1576.6 959.8 1579.9 959.8 1583.1 959.8 C1586.3 959.8 1589.5 959.8 1592.7 959.8 C1595.9 959.8 1599.1 959.8 1602.3 959.8 C1605.5 959.8 1608.7 959.8 1611.9 959.8 C1615.1 959.8 1618.3 959.8 1621.5 959.8 C1624.7 959.8 1628.0 959.8 1631.2 959.8 C1634.4 959.8 1637.6 959.8 1640.8 959.8 C1644.0 959.8 1647.2 958.9 1650.4 957.1 C1653.6 955.3 1656.8 951.3 1660.0 949.1 C1663.2 946.9 1666.4 943.7 1669.6 943.7 C1672.8 943.7 1676.1 944.3 1679.3 944.8 C1682.5 945.3 1685.7 946.7 1688.9 946.7 C1692.1 946.7 1695.3 942.1 1698.5 942.1 C1701.7 942.1 1704.9 945.1 1708.1 945.1 C1711.3 945.1 1714.5 945.1 1717.7 945.1 C1720.9 945.1 1724.2 945.1 1727.4 945.1 C1730.6 945.1 1733.8 947.2 1737.0 947.2 C1740.2 947.2 1743.4 945.1 1746.6 945.1 C1749.8 945.1 1753.0 947.2 1756.2 947.2 C1759.4 947.2 1762.6 942.7 1765.8 942.7 C1769.0 942.7 1772.3 947.2 1775.5 947.2 C1778.7 947.2 1781.9 945.8 1785.1 945.1 C1788.3 944.3 1791.5 942.7 1794.7 942.7 C1797.9 942.7 1801.1 942.7 1804.3 942.7 C1807.5 942.7 1810.7 946.4 1813.9 946.4 C1817.1 946.4 1820.4 946.4 1823.6 946.4 C1826.8 946.4 1830.0 942.7 1833.2 942.7 C1836.4 942.7 1839.6 942.7 1842.8 942.7 C1846.0 942.7 1849.2 942.8 1852.4 943.2 C1855.6 943.6 1858.8 945.1 1862.0 945.1 C1865.2 945.1 1868.5 945.1 1871.7 945.1 C1874.9 945.1 1878.1 942.7 1881.3 942.7 C1884.5 942.7 1887.7 945.1 1890.9 945.1 C1894.1 945.1 1897.3 920.2 1900.5 920.2 C1903.7 920.2 1906.9 921.6 1910.1 923.4 C1913.3 925.2 1916.6 931.2 1919.8 931.2 C1923.0 931.2 1926.2 900.1 1929.4 900.1 C1932.6 900.1 1935.8 900.1 1939.0 900.1 C1942.2 900.1 1945.4 914.9 1948.6 922.3 L1948.6 959.8 L496.0 959.8 Z" fill="#ec9a31"/>
<path d="M496.0 948.8 C499.2 942.5 502.4 929.8 505.6 929.8 C508.8 929.8 512.0 932.9 515.2 936.0 C518.4 939.1 521.7 948.3 524.9 948.3 C528.1 948.3 531.3 947.0 534.5 947.0 C537.7 947.0 540.9 948.2 544.1 948.8 C547.3 949.5 550.5 950.7 553.7 950.7 C556.9 950.7 560.1 931.1 563.3 925.0 C566.5 918.9 569.8 916.4 573.0 914.0 C576.2 911.7 579.4 912.3 582.6 911.1 C585.8 909.9 589.0 911.0 592.2 903.1 C595.4 895.1 598.6 838.8 601.8 838.8 C605.0 838.8 608.2 839.4 611.4 851.7 C614.6 864.0 617.9 896.0 621.1 912.7 C624.3 929.4 627.5 949.4 630.7 951.8 C633.9 954.2 637.1 954.2 640.3 954.2 C643.5 954.2 646.7 907.9 649.9 907.9 C653.1 907.9 656.3 932.6 659.5 933.6 C662.7 934.6 666.0 934.2 669.2 934.6 C672.4 935.1 675.6 942.8 678.8 945.6 C682.0 948.5 685.2 951.8 688.4 951.8 C691.6 951.8 694.8 942.4 698.0 937.1 C701.2 931.7 704.4 919.9 707.6 919.9 C710.8 919.9 714.1 942.8 717.3 949.4 C720.5 955.9 723.7 959.3 726.9 959.3 C730.1 959.3 733.3 959.3 736.5 959.3 C739.7 959.3 742.9 956.6 746.1 956.6 C749.3 956.6 752.5 958.5 755.7 959.0 C758.9 959.5 762.2 959.5 765.4 959.5 C768.6 959.5 771.8 956.6 775.0 956.6 C778.2 956.6 781.4 959.3 784.6 959.3 C787.8 959.3 791.0 956.6 794.2 956.6 C797.4 956.6 800.6 959.5 803.8 959.5 C807.0 959.5 810.3 959.5 813.5 959.0 C816.7 958.5 819.9 956.6 823.1 956.6 C826.3 956.6 829.5 959.3 832.7 959.3 C835.9 959.3 839.1 959.3 842.3 959.3 C845.5 959.3 848.7 957.1 851.9 957.1 C855.1 957.1 858.4 959.5 861.6 959.5 C864.8 959.5 868.0 959.4 871.2 959.0 C874.4 958.6 877.6 957.1 880.8 957.1 C884.0 957.1 887.2 959.3 890.4 959.3 C893.6 959.3 896.8 959.3 900.0 959.3 C903.2 959.3 906.5 957.1 909.7 957.1 C912.9 957.1 916.1 959.5 919.3 959.5 C922.5 959.5 925.7 957.1 928.9 957.1 C932.1 957.1 935.3 959.5 938.5 959.5 C941.7 959.5 944.9 959.5 948.1 959.3 C951.3 959.0 954.6 957.1 957.8 957.1 C961.0 957.1 964.2 959.0 967.4 959.3 C970.6 959.5 973.8 959.5 977.0 959.5 C980.2 959.5 983.4 957.1 986.6 957.1 C989.8 957.1 993.0 959.5 996.2 959.5 C999.4 959.5 1002.7 959.5 1005.9 959.3 C1009.1 959.0 1012.3 956.9 1015.5 956.9 C1018.7 956.9 1021.9 959.0 1025.1 959.3 C1028.3 959.5 1031.5 959.5 1034.7 959.5 C1037.9 959.5 1041.1 956.9 1044.3 956.9 C1047.5 956.9 1050.8 959.5 1054.0 959.5 C1057.2 959.5 1060.4 956.9 1063.6 956.9 C1066.8 956.9 1070.0 959.3 1073.2 959.3 C1076.4 959.3 1079.6 959.3 1082.8 959.3 C1086.0 959.3 1089.2 959.5 1092.4 959.5 C1095.6 959.5 1098.9 959.0 1102.1 959.0 C1105.3 959.0 1108.5 959.5 1111.7 959.5 C1114.9 959.5 1118.1 956.9 1121.3 956.9 C1124.5 956.9 1127.7 959.3 1130.9 959.3 C1134.1 959.3 1137.3 959.3 1140.5 959.3 C1143.7 959.3 1147.0 959.5 1150.2 959.5 C1153.4 959.5 1156.6 959.0 1159.8 959.0 C1163.0 959.0 1166.2 959.5 1169.4 959.5 C1172.6 959.5 1175.8 956.9 1179.0 956.9 C1182.2 956.9 1185.4 959.3 1188.6 959.3 C1191.8 959.3 1195.1 956.9 1198.3 956.9 C1201.5 956.9 1204.7 959.5 1207.9 959.5 C1211.1 959.5 1214.3 959.0 1217.5 959.0 C1220.7 959.0 1223.9 959.5 1227.1 959.5 C1230.3 959.5 1233.5 959.5 1236.7 958.5 C1239.9 957.4 1243.2 938.9 1246.4 934.4 C1249.6 929.8 1252.8 929.8 1256.0 929.8 C1259.2 929.8 1262.4 946.7 1265.6 946.7 C1268.8 946.7 1272.0 936.5 1275.2 936.5 C1278.4 936.5 1281.6 940.7 1284.8 943.7 C1288.0 946.8 1291.3 954.7 1294.5 954.7 C1297.7 954.7 1300.9 947.8 1304.1 947.8 C1307.3 947.8 1310.5 953.6 1313.7 953.6 C1316.9 953.6 1320.1 929.6 1323.3 925.0 C1326.5 920.5 1329.7 920.5 1332.9 920.5 C1336.1 920.5 1339.4 926.2 1342.6 930.1 C1345.8 934.0 1349.0 939.8 1352.2 943.7 C1355.4 947.7 1358.6 951.1 1361.8 953.6 C1365.0 956.2 1368.2 959.3 1371.4 959.3 C1374.6 959.3 1377.8 958.6 1381.0 958.5 C1384.2 958.3 1387.5 958.2 1390.7 958.2 C1393.9 958.2 1397.1 959.0 1400.3 959.0 C1403.5 959.0 1406.7 958.6 1409.9 958.2 C1413.1 957.8 1416.3 956.9 1419.5 956.9 C1422.7 956.9 1425.9 959.8 1429.1 959.8 C1432.3 959.8 1435.6 959.8 1438.8 959.8 C1442.0 959.8 1445.2 959.8 1448.4 959.8 C1451.6 959.8 1454.8 959.8 1458.0 959.8 C1461.2 959.8 1464.4 959.8 1467.6 959.8 C1470.8 959.8 1474.0 959.8 1477.2 959.8 C1480.4 959.8 1483.7 959.8 1486.9 959.8 C1490.1 959.8 1493.3 959.8 1496.5 959.8 C1499.7 959.8 1502.9 959.8 1506.1 959.8 C1509.3 959.8 1512.5 959.8 1515.7 959.8 C1518.9 959.8 1522.1 959.8 1525.3 959.8 C1528.5 959.8 1531.8 959.8 1535.0 959.8 C1538.2 959.8 1541.4 959.8 1544.6 959.8 C1547.8 959.8 1551.0 959.8 1554.2 959.8 C1557.4 959.8 1560.6 959.8 1563.8 959.8 C1567.0 959.8 1570.2 959.8 1573.4 959.8 C1576.6 959.8 1579.9 959.8 1583.1 959.8 C1586.3 959.8 1589.5 959.8 1592.7 959.8 C1595.9 959.8 1599.1 959.8 1602.3 959.8 C1605.5 959.8 1608.7 959.8 1611.9 959.8 C1615.1 959.8 1618.3 959.8 1621.5 959.8 C1624.7 959.8 1628.0 959.8 1631.2 959.8 C1634.4 959.8 1637.6 959.8 1640.8 959.8 C1644.0 959.8 1647.2 958.9 1650.4 957.1 C1653.6 955.3 1656.8 951.3 1660.0 949.1 C1663.2 946.9 1666.4 943.7 1669.6 943.7 C1672.8 943.7 1676.1 944.3 1679.3 944.8 C1682.5 945.3 1685.7 946.7 1688.9 946.7 C1692.1 946.7 1695.3 942.1 1698.5 942.1 C1701.7 942.1 1704.9 945.1 1708.1 945.1 C1711.3 945.1 1714.5 945.1 1717.7 945.1 C1720.9 945.1 1724.2 945.1 1727.4 945.1 C1730.6 945.1 1733.8 947.2 1737.0 947.2 C1740.2 947.2 1743.4 945.1 1746.6 945.1 C1749.8 945.1 1753.0 947.2 1756.2 947.2 C1759.4 947.2 1762.6 942.7 1765.8 942.7 C1769.0 942.7 1772.3 947.2 1775.5 947.2 C1778.7 947.2 1781.9 945.8 1785.1 945.1 C1788.3 944.3 1791.5 942.7 1794.7 942.7 C1797.9 942.7 1801.1 942.7 1804.3 942.7 C1807.5 942.7 1810.7 946.4 1813.9 946.4 C1817.1 946.4 1820.4 946.4 1823.6 946.4 C1826.8 946.4 1830.0 942.7 1833.2 942.7 C1836.4 942.7 1839.6 942.7 1842.8 942.7 C1846.0 942.7 1849.2 942.8 1852.4 943.2 C1855.6 943.6 1858.8 945.1 1862.0 945.1 C1865.2 945.1 1868.5 945.1 1871.7 945.1 C1874.9 945.1 1878.1 942.7 1881.3 942.7 C1884.5 942.7 1887.7 945.1 1890.9 945.1 C1894.1 945.1 1897.3 920.2 1900.5 920.2 C1903.7 920.2 1906.9 921.6 1910.1 923.4 C1913.3 925.2 1916.6 931.2 1919.8 931.2 C1923.0 931.2 1926.2 900.1 1929.4 900.1 C1932.6 900.1 1935.8 900.1 1939.0 900.1 C1942.2 900.1 1945.4 914.9 1948.6 922.3" fill="none" stroke="rgba(0,0,0,0.1)" stroke-width="4.8" stroke-linejoin="round"/>
<path d="M496.0 948.8 C499.2 942.5 502.4 929.8 505.6 929.8 C508.8 929.8 512.0 932.9 515.2 936.0 C518.4 939.1 521.7 948.3 524.9 948.3 C528.1 948.3 531.3 947.0 534.5 947.0 C537.7 947.0 540.9 948.2 544.1 948.8 C547.3 949.5 550.5 949.2 553.7 950.7 C556.9 952.2 560.1 957.9 563.3 957.9 C566.5 957.9 569.8 957.9 573.0 956.3 C576.2 954.7 579.4 938.3 582.6 929.8 C585.8 921.3 589.0 920.4 592.2 905.2 C595.4 890.0 598.6 838.8 601.8 838.8 C605.0 838.8 608.2 839.4 611.4 851.7 C614.6 864.0 617.9 896.0 621.1 912.7 C624.3 929.4 627.5 949.4 630.7 951.8 C633.9 954.2 637.1 954.2 640.3 954.2 C643.5 954.2 646.7 907.9 649.9 907.9 C653.1 907.9 656.3 932.6 659.5 933.6 C662.7 934.6 666.0 934.2 669.2 934.6 C672.4 935.1 675.6 942.8 678.8 945.6 C682.0 948.5 685.2 951.8 688.4 951.8 C691.6 951.8 694.8 942.4 698.0 937.1 C701.2 931.7 704.4 919.9 707.6 919.9 C710.8 919.9 714.1 942.8 717.3 949.4 C720.5 955.9 723.7 959.3 726.9 959.3 C730.1 959.3 733.3 959.3 736.5 959.3 C739.7 959.3 742.9 956.6 746.1 956.6 C749.3 956.6 752.5 958.5 755.7 959.0 C758.9 959.5 762.2 959.5 765.4 959.5 C768.6 959.5 771.8 956.6 775.0 956.6 C778.2 956.6 781.4 959.3 784.6 959.3 C787.8 959.3 791.0 956.6 794.2 956.6 C797.4 956.6 800.6 959.5 803.8 959.5 C807.0 959.5 810.3 959.5 813.5 959.0 C816.7 958.5 819.9 956.6 823.1 956.6 C826.3 956.6 829.5 959.3 832.7 959.3 C835.9 959.3 839.1 959.3 842.3 959.3 C845.5 959.3 848.7 957.1 851.9 957.1 C855.1 957.1 858.4 959.5 861.6 959.5 C864.8 959.5 868.0 959.4 871.2 959.0 C874.4 958.6 877.6 957.1 880.8 957.1 C884.0 957.1 887.2 959.3 890.4 959.3 C893.6 959.3 896.8 959.3 900.0 959.3 C903.2 959.3 906.5 957.1 909.7 957.1 C912.9 957.1 916.1 959.5 919.3 959.5 C922.5 959.5 925.7 957.1 928.9 957.1 C932.1 957.1 935.3 959.5 938.5 959.5 C941.7 959.5 944.9 959.5 948.1 959.3 C951.3 959.0 954.6 957.1 957.8 957.1 C961.0 957.1 964.2 959.0 967.4 959.3 C970.6 959.5 973.8 959.5 977.0 959.5 C980.2 959.5 983.4 957.1 986.6 957.1 C989.8 957.1 993.0 959.5 996.2 959.5 C999.4 959.5 1002.7 959.5 1005.9 959.3 C1009.1 959.0 1012.3 956.9 1015.5 956.9 C1018.7 956.9 1021.9 959.0 1025.1 959.3 C1028.3 959.5 1031.5 959.5 1034.7 959.5 C1037.9 959.5 1041.1 956.9 1044.3 956.9 C1047.5 956.9 1050.8 959.5 1054.0 959.5 C1057.2 959.5 1060.4 956.9 1063.6 956.9 C1066.8 956.9 1070.0 959.3 1073.2 959.3 C1076.4 959.3 1079.6 959.3 1082.8 959.3 C1086.0 959.3 1089.2 959.5 1092.4 959.5 C1095.6 959.5 1098.9 959.0 1102.1 959.0 C1105.3 959.0 1108.5 959.5 1111.7 959.5 C1114.9 959.5 1118.1 956.9 1121.3 956.9 C1124.5 956.9 1127.7 959.3 1130.9 959.3 C1134.1 959.3 1137.3 959.3 1140.5 959.3 C1143.7 959.3 1147.0 959.5 1150.2 959.5 C1153.4 959.5 1156.6 959.0 1159.8 959.0 C1163.0 959.0 1166.2 959.5 1169.4 959.5 C1172.6 959.5 1175.8 956.9 1179.0 956.9 C1182.2 956.9 1185.4 959.3 1188.6 959.3 C1191.8 959.3 1195.1 956.9 1198.3 956.9 C1201.5 956.9 1204.7 959.5 1207.9 959.5 C1211.1 959.5 1214.3 959.0 1217.5 959.0 C1220.7 959.0 1223.9 959.5 1227.1 959.5 C1230.3 959.5 1233.5 959.5 1236.7 958.5 C1239.9 957.4 1243.2 938.9 1246.4 934.4 C1249.6 929.8 1252.8 929.8 1256.0 929.8 C1259.2 929.8 1262.4 946.7 1265.6 946.7 C1268.8 946.7 1272.0 936.5 1275.2 936.5 C1278.4 936.5 1281.6 940.7 1284.8 943.7 C1288.0 946.8 1291.3 954.7 1294.5 954.7 C1297.7 954.7 1300.9 947.8 1304.1 947.8 C1307.3 947.8 1310.5 953.6 1313.7 953.6 C1316.9 953.6 1320.1 929.6 1323.3 925.0 C1326.5 920.5 1329.7 920.5 1332.9 920.5 C1336.1 920.5 1339.4 926.2 1342.6 930.1 C1345.8 934.0 1349.0 939.8 1352.2 943.7 C1355.4 947.7 1358.6 951.1 1361.8 953.6 C1365.0 956.2 1368.2 959.3 1371.4 959.3 C1374.6 959.3 1377.8 958.6 1381.0 958.5 C1384.2 958.3 1387.5 958.2 1390.7 958.2 C1393.9 958.2 1397.1 959.0 1400.3 959.0 C1403.5 959.0 1406.7 958.6 1409.9 958.2 C1413.1 957.8 1416.3 956.9 1419.5 956.9 C1422.7 956.9 1425.9 959.8 1429.1 959.8 C1432.3 959.8 1435.6 959.8 1438.8 959.8 C1442.0 959.8 1445.2 959.8 1448.4 959.8 C1451.6 959.8 1454.8 959.8 1458.0 959.8 C1461.2 959.8 1464.4 959.8 1467.6 959.8 C1470.8 959.8 1474.0 959.8 1477.2 959.8 C1480.4 959.8 1483.7 959.8 1486.9 959.8 C1490.1 959.8 1493.3 959.8 1496.5 959.8 C1499.7 959.8 1502.9 959.8 1506.1 959.8 C1509.3 959.8 1512.5 959.8 1515.7 959.8 C1518.9 959.8 1522.1 959.8 1525.3 959.8 C1528.5 959.8 1531.8 959.8 1535.0 959.8 C1538.2 959.8 1541.4 959.8 1544.6 959.8 C1547.8 959.8 1551.0 959.8 1554.2 959.8 C1557.4 959.8 1560.6 959.8 1563.8 959.8 C1567.0 959.8 1570.2 959.8 1573.4 959.8 C1576.6 959.8 1579.9 959.8 1583.1 959.8 C1586.3 959.8 1589.5 959.8 1592.7 959.8 C1595.9 959.8 1599.1 959.8 1602.3 959.8 C1605.5 959.8 1608.7 959.8 1611.9 959.8 C1615.1 959.8 1618.3 959.8 1621.5 959.8 C1624.7 959.8 1628.0 959.8 1631.2 959.8 C1634.4 959.8 1637.6 959.8 1640.8 959.8 C1644.0 959.8 1647.2 958.9 1650.4 957.1 C1653.6 955.3 1656.8 951.3 1660.0 949.1 C1663.2 946.9 1666.4 943.7 1669.6 943.7 C1672.8 943.7 1676.1 944.3 1679.3 944.8 C1682.5 945.3 1685.7 946.7 1688.9 946.7 C1692.1 946.7 1695.3 942.1 1698.5 942.1 C1701.7 942.1 1704.9 945.1 1708.1 945.1 C1711.3 945.1 1714.5 945.1 1717.7 945.1 C1720.9 945.1 1724.2 945.1 1727.4 945.1 C1730.6 945.1 1733.8 947.2 1737.0 947.2 C1740.2 947.2 1743.4 945.1 1746.6 945.1 C1749.8 945.1 1753.0 947.2 1756.2 947.2 C1759.4 947.2 1762.6 942.7 1765.8 942.7 C1769.0 942.7 1772.3 947.2 1775.5 947.2 C1778.7 947.2 1781.9 945.8 1785.1 945.1 C1788.3 944.3 1791.5 942.7 1794.7 942.7 C1797.9 942.7 1801.1 942.7 1804.3 942.7 C1807.5 942.7 1810.7 946.4 1813.9 946.4 C1817.1 946.4 1820.4 946.4 1823.6 946.4 C1826.8 946.4 1830.0 942.7 1833.2 942.7 C1836.4 942.7 1839.6 942.7 1842.8 942.7 C1846.0 942.7 1849.2 942.8 1852.4 943.2 C1855.6 943.6 1858.8 945.1 1862.0 945.1 C1865.2 945.1 1868.5 945.1 1871.7 945.1 C1874.9 945.1 1878.1 942.7 1881.3 942.7 C1884.5 942.7 1887.7 945.1 1890.9 945.1 C1894.1 945.1 1897.3 920.2 1900.5 920.2 C1903.7 920.2 1906.9 921.6 1910.1 923.4 C1913.3 925.2 1916.6 931.2 1919.8 931.2 C1923.0 931.2 1926.2 900.1 1929.4 900.1 C1932.6 900.1 1935.8 900.1 1939.0 900.1 C1942.2 900.1 1945.4 914.9 1948.6 922.3 L1948.6 959.8 L496.0 959.8 Z" fill="#00a05d"/>
<path d="M496.0 948.8 C499.2 942.5 502.4 929.8 505.6 929.8 C508.8 929.8 512.0 932.9 515.2 936.0 C518.4 939.1 521.7 948.3 524.9 948.3 C528.1 948.3 531.3 947.0 534.5 947.0 C537.7 947.0 540.9 948.2 544.1 948.8 C547.3 949.5 550.5 949.2 553.7 950.7 C556.9 952.2 560.1 957.9 563.3 957.9 C566.5 957.9 569.8 957.9 573.0 956.3 C576.2 954.7 579.4 938.3 582.6 929.8 C585.8 921.3 589.0 920.4 592.2 905.2 C595.4 890.0 598.6 838.8 601.8 838.8 C605.0 838.8 608.2 839.4 611.4 851.7 C614.6 864.0 617.9 896.0 621.1 912.7 C624.3 929.4 627.5 949.4 630.7 951.8 C633.9 954.2 637.1 954.2 640.3 954.2 C643.5 954.2 646.7 907.9 649.9 907.9 C653.1 907.9 656.3 932.6 659.5 933.6 C662.7 934.6 666.0 934.2 669.2 934.6 C672.4 935.1 675.6 942.8 678.8 945.6 C682.0 948.5 685.2 951.8 688.4 951.8 C691.6 951.8 694.8 942.4 698.0 937.1 C701.2 931.7 704.4 919.9 707.6 919.9 C710.8 919.9 714.1 942.8 717.3 949.4 C720.5 955.9 723.7 959.3 726.9 959.3 C730.1 959.3 733.3 959.3 736.5 959.3 C739.7 959.3 742.9 956.6 746.1 956.6 C749.3 956.6 752.5 958.5 755.7 959.0 C758.9 959.5 762.2 959.5 765.4 959.5 C768.6 959.5 771.8 956.6 775.0 956.6 C778.2 956.6 781.4 959.3 784.6 959.3 C787.8 959.3 791.0 956.6 794.2 956.6 C797.4 956.6 800.6 959.5 803.8 959.5 C807.0 959.5 810.3 959.5 813.5 959.0 C816.7 958.5 819.9 956.6 823.1 956.6 C826.3 956.6 829.5 959.3 832.7 959.3 C835.9 959.3 839.1 959.3 842.3 959.3 C845.5 959.3 848.7 957.1 851.9 957.1 C855.1 957.1 858.4 959.5 861.6 959.5 C864.8 959.5 868.0 959.4 871.2 959.0 C874.4 958.6 877.6 957.1 880.8 957.1 C884.0 957.1 887.2 959.3 890.4 959.3 C893.6 959.3 896.8 959.3 900.0 959.3 C903.2 959.3 906.5 957.1 909.7 957.1 C912.9 957.1 916.1 959.5 919.3 959.5 C922.5 959.5 925.7 957.1 928.9 957.1 C932.1 957.1 935.3 959.5 938.5 959.5 C941.7 959.5 944.9 959.5 948.1 959.3 C951.3 959.0 954.6 957.1 957.8 957.1 C961.0 957.1 964.2 959.0 967.4 959.3 C970.6 959.5 973.8 959.5 977.0 959.5 C980.2 959.5 983.4 957.1 986.6 957.1 C989.8 957.1 993.0 959.5 996.2 959.5 C999.4 959.5 1002.7 959.5 1005.9 959.3 C1009.1 959.0 1012.3 956.9 1015.5 956.9 C1018.7 956.9 1021.9 959.0 1025.1 959.3 C1028.3 959.5 1031.5 959.5 1034.7 959.5 C1037.9 959.5 1041.1 956.9 1044.3 956.9 C1047.5 956.9 1050.8 959.5 1054.0 959.5 C1057.2 959.5 1060.4 956.9 1063.6 956.9 C1066.8 956.9 1070.0 959.3 1073.2 959.3 C1076.4 959.3 1079.6 959.3 1082.8 959.3 C1086.0 959.3 1089.2 959.5 1092.4 959.5 C1095.6 959.5 1098.9 959.0 1102.1 959.0 C1105.3 959.0 1108.5 959.5 1111.7 959.5 C1114.9 959.5 1118.1 956.9 1121.3 956.9 C1124.5 956.9 1127.7 959.3 1130.9 959.3 C1134.1 959.3 1137.3 959.3 1140.5 959.3 C1143.7 959.3 1147.0 959.5 1150.2 959.5 C1153.4 959.5 1156.6 959.0 1159.8 959.0 C1163.0 959.0 1166.2 959.5 1169.4 959.5 C1172.6 959.5 1175.8 956.9 1179.0 956.9 C1182.2 956.9 1185.4 959.3 1188.6 959.3 C1191.8 959.3 1195.1 956.9 1198.3 956.9 C1201.5 956.9 1204.7 959.5 1207.9 959.5 C1211.1 959.5 1214.3 959.0 1217.5 959.0 C1220.7 959.0 1223.9 959.5 1227.1 959.5 C1230.3 959.5 1233.5 959.5 1236.7 958.5 C1239.9 957.4 1243.2 938.9 1246.4 934.4 C1249.6 929.8 1252.8 929.8 1256.0 929.8 C1259.2 929.8 1262.4 946.7 1265.6 946.7 C1268.8 946.7 1272.0 936.5 1275.2 936.5 C1278.4 936.5 1281.6 940.7 1284.8 943.7 C1288.0 946.8 1291.3 954.7 1294.5 954.7 C1297.7 954.7 1300.9 947.8 1304.1 947.8 C1307.3 947.8 1310.5 953.6 1313.7 953.6 C1316.9 953.6 1320.1 929.6 1323.3 925.0 C1326.5 920.5 1329.7 920.5 1332.9 920.5 C1336.1 920.5 1339.4 926.2 1342.6 930.1 C1345.8 934.0 1349.0 939.8 1352.2 943.7 C1355.4 947.7 1358.6 951.1 1361.8 953.6 C1365.0 956.2 1368.2 959.3 1371.4 959.3 C1374.6 959.3 1377.8 958.6 1381.0 958.5 C1384.2 958.3 1387.5 958.2 1390.7 958.2 C1393.9 958.2 1397.1 959.0 1400.3 959.0 C1403.5 959.0 1406.7 958.6 1409.9 958.2 C1413.1 957.8 1416.3 956.9 1419.5 956.9 C1422.7 956.9 1425.9 959.8 1429.1 959.8 C1432.3 959.8 1435.6 959.8 1438.8 959.8 C1442.0 959.8 1445.2 959.8 1448.4 959.8 C1451.6 959.8 1454.8 959.8 1458.0 959.8 C1461.2 959.8 1464.4 959.8 1467.6 959.8 C1470.8 959.8 1474.0 959.8 1477.2 959.8 C1480.4 959.8 1483.7 959.8 1486.9 959.8 C1490.1 959.8 1493.3 959.8 1496.5 959.8 C1499.7 959.8 1502.9 959.8 1506.1 959.8 C1509.3 959.8 1512.5 959.8 1515.7 959.8 C1518.9 959.8 1522.1 959.8 1525.3 959.8 C1528.5 959.8 1531.8 959.8 1535.0 959.8 C1538.2 959.8 1541.4 959.8 1544.6 959.8 C1547.8 959.8 1551.0 959.8 1554.2 959.8 C1557.4 959.8 1560.6 959.8 1563.8 959.8 C1567.0 959.8 1570.2 959.8 1573.4 959.8 C1576.6 959.8 1579.9 959.8 1583.1 959.8 C1586.3 959.8 1589.5 959.8 1592.7 959.8 C1595.9 959.8 1599.1 959.8 1602.3 959.8 C1605.5 959.8 1608.7 959.8 1611.9 959.8 C1615.1 959.8 1618.3 959.8 1621.5 959.8 C1624.7 959.8 1628.0 959.8 1631.2 959.8 C1634.4 959.8 1637.6 959.8 1640.8 959.8 C1644.0 959.8 1647.2 958.9 1650.4 957.1 C1653.6 955.3 1656.8 951.3 1660.0 949.1 C1663.2 946.9 1666.4 943.7 1669.6 943.7 C1672.8 943.7 1676.1 944.3 1679.3 944.8 C1682.5 945.3 1685.7 946.7 1688.9 946.7 C1692.1 946.7 1695.3 942.1 1698.5 942.1 C1701.7 942.1 1704.9 945.1 1708.1 945.1 C1711.3 945.1 1714.5 945.1 1717.7 945.1 C1720.9 945.1 1724.2 945.1 1727.4 945.1 C1730.6 945.1 1733.8 947.2 1737.0 947.2 C1740.2 947.2 1743.4 945.1 1746.6 945.1 C1749.8 945.1 1753.0 947.2 1756.2 947.2 C1759.4 947.2 1762.6 942.7 1765.8 942.7 C1769.0 942.7 1772.3 947.2 1775.5 947.2 C1778.7 947.2 1781.9 945.8 1785.1 945.1 C1788.3 944.3 1791.5 942.7 1794.7 942.7 C1797.9 942.7 1801.1 942.7 1804.3 942.7 C1807.5 942.7 1810.7 946.4 1813.9 946.4 C1817.1 946.4 1820.4 946.4 1823.6 946.4 C1826.8 946.4 1830.0 942.7 1833.2 942.7 C1836.4 942.7 1839.6 942.7 1842.8 942.7 C1846.0 942.7 1849.2 942.8 1852.4 943.2 C1855.6 943.6 1858.8 945.1 1862.0 945.1 C1865.2 945.1 1868.5 945.1 1871.7 945.1 C1874.9 945.1 1878.1 942.7 1881.3 942.7 C1884.5 942.7 1887.7 945.1 1890.9 945.1 C1894.1 945.1 1897.3 920.2 1900.5 920.2 C1903.7 920.2 1906.9 921.6 1910.1 923.4 C1913.3 925.2 1916.6 931.2 1919.8 931.2 C1923.0 931.2 1926.2 900.1 1929.4 900.1 C1932.6 900.1 1935.8 900.1 1939.0 900.1 C1942.2 900.1 1945.4 914.9 1948.6 922.3" fill="none" stroke="rgba(0,0,0,0.1)" stroke-width="4.8" stroke-linejoin="round"/>
<path d="M496.0 950.4 C499.2 945.2 502.4 934.6 505.6 934.6 C508.8 934.6 512.0 935.6 515.2 938.4 C518.4 941.2 521.7 951.5 524.9 951.5 C528.1 951.5 531.3 949.4 534.5 949.4 C537.7 949.4 540.9 950.0 544.1 950.4 C547.3 950.8 550.5 950.5 553.7 951.8 C556.9 953.0 560.1 956.7 563.3 957.9 C566.5 959.2 569.8 959.0 573.0 959.3 C576.2 959.6 579.4 959.8 582.6 959.8 C585.8 959.8 589.0 959.8 592.2 956.1 C595.4 952.3 598.6 855.4 601.8 855.4 C605.0 855.4 608.2 855.4 611.4 864.0 C614.6 872.6 617.9 903.0 621.1 917.8 C624.3 932.6 627.5 950.2 630.7 952.8 C633.9 955.5 637.1 955.5 640.3 955.5 C643.5 955.5 646.7 907.9 649.9 907.9 C653.1 907.9 656.3 932.6 659.5 933.6 C662.7 934.6 666.0 934.2 669.2 934.6 C672.4 935.1 675.6 942.8 678.8 945.6 C682.0 948.5 685.2 951.8 688.4 951.8 C691.6 951.8 694.8 942.4 698.0 937.1 C701.2 931.7 704.4 919.9 707.6 919.9 C710.8 919.9 714.1 942.8 717.3 949.4 C720.5 955.9 723.7 958.7 726.9 959.3 C730.1 959.8 733.3 959.8 736.5 959.8 C739.7 959.8 742.9 959.5 746.1 959.5 C749.3 959.5 752.5 959.5 755.7 959.5 C758.9 959.5 762.2 959.8 765.4 959.8 C768.6 959.8 771.8 959.5 775.0 959.5 C778.2 959.5 781.4 959.5 784.6 959.5 C787.8 959.5 791.0 959.5 794.2 959.5 C797.4 959.5 800.6 959.8 803.8 959.8 C807.0 959.8 810.3 959.5 813.5 959.5 C816.7 959.5 819.9 959.5 823.1 959.5 C826.3 959.5 829.5 959.8 832.7 959.8 C835.9 959.8 839.1 959.8 842.3 959.5 C845.5 959.3 848.7 957.4 851.9 957.4 C855.1 957.4 858.4 959.8 861.6 959.8 C864.8 959.8 868.0 959.8 871.2 959.5 C874.4 959.3 877.6 957.4 880.8 957.4 C884.0 957.4 887.2 959.8 890.4 959.8 C893.6 959.8 896.8 959.8 900.0 959.5 C903.2 959.3 906.5 957.4 909.7 957.4 C912.9 957.4 916.1 959.8 919.3 959.8 C922.5 959.8 925.7 957.4 928.9 957.4 C932.1 957.4 935.3 959.8 938.5 959.8 C941.7 959.8 944.9 959.8 948.1 959.8 C951.3 959.8 954.6 957.4 957.8 957.4 C961.0 957.4 964.2 959.8 967.4 959.8 C970.6 959.8 973.8 959.8 977.0 959.8 C980.2 959.8 983.4 957.4 986.6 957.4 C989.8 957.4 993.0 959.8 996.2 959.8 C999.4 959.8 1002.7 959.8 1005.9 959.8 C1009.1 959.8 1012.3 959.0 1015.5 959.0 C1018.7 959.0 1021.9 959.8 1025.1 959.8 C1028.3 959.8 1031.5 959.8 1034.7 959.8 C1037.9 959.8 1041.1 959.0 1044.3 959.0 C1047.5 959.0 1050.8 959.8 1054.0 959.8 C1057.2 959.8 1060.4 959.0 1063.6 959.0 C1066.8 959.0 1070.0 959.4 1073.2 959.5 C1076.4 959.7 1079.6 959.8 1082.8 959.8 C1086.0 959.8 1089.2 959.8 1092.4 959.8 C1095.6 959.8 1098.9 959.5 1102.1 959.5 C1105.3 959.5 1108.5 959.8 1111.7 959.8 C1114.9 959.8 1118.1 959.0 1121.3 959.0 C1124.5 959.0 1127.7 959.4 1130.9 959.5 C1134.1 959.7 1137.3 959.8 1140.5 959.8 C1143.7 959.8 1147.0 959.8 1150.2 959.8 C1153.4 959.8 1156.6 959.5 1159.8 959.5 C1163.0 959.5 1166.2 959.8 1169.4 959.8 C1172.6 959.8 1175.8 959.0 1179.0 959.0 C1182.2 959.0 1185.4 959.5 1188.6 959.5 C1191.8 959.5 1195.1 959.0 1198.3 959.0 C1201.5 959.0 1204.7 959.8 1207.9 959.8 C1211.1 959.8 1214.3 959.5 1217.5 959.5 C1220.7 959.5 1223.9 959.8 1227.1 959.8 C1230.3 959.8 1233.5 959.8 1236.7 958.5 C1239.9 957.1 1243.2 934.4 1246.4 934.4 C1249.6 934.4 1252.8 950.4 1256.0 950.4 C1259.2 950.4 1262.4 949.0 1265.6 946.7 C1268.8 944.4 1272.0 936.5 1275.2 936.5 C1278.4 936.5 1281.6 940.7 1284.8 943.7 C1288.0 946.8 1291.3 954.7 1294.5 954.7 C1297.7 954.7 1300.9 947.8 1304.1 947.8 C1307.3 947.8 1310.5 953.6 1313.7 953.6 C1316.9 953.6 1320.1 929.6 1323.3 925.0 C1326.5 920.5 1329.7 920.5 1332.9 920.5 C1336.1 920.5 1339.4 926.2 1342.6 930.1 C1345.8 934.0 1349.0 939.8 1352.2 943.7 C1355.4 947.7 1358.6 951.1 1361.8 953.6 C1365.0 956.2 1368.2 959.3 1371.4 959.3 C1374.6 959.3 1377.8 958.6 1381.0 958.5 C1384.2 958.3 1387.5 958.2 1390.7 958.2 C1393.9 958.2 1397.1 959.0 1400.3 959.0 C1403.5 959.0 1406.7 958.6 1409.9 958.2 C1413.1 957.8 1416.3 956.9 1419.5 956.9 C1422.7 956.9 1425.9 959.8 1429.1 959.8 C1432.3 959.8 1435.6 959.8 1438.8 959.8 C1442.0 959.8 1445.2 959.8 1448.4 959.8 C1451.6 959.8 1454.8 959.8 1458.0 959.8 C1461.2 959.8 1464.4 959.8 1467.6 959.8 C1470.8 959.8 1474.0 959.8 1477.2 959.8 C1480.4 959.8 1483.7 959.8 1486.9 959.8 C1490.1 959.8 1493.3 959.8 1496.5 959.8 C1499.7 959.8 1502.9 959.8 1506.1 959.8 C1509.3 959.8 1512.5 959.8 1515.7 959.8 C1518.9 959.8 1522.1 959.8 1525.3 959.8 C1528.5 959.8 1531.8 959.8 1535.0 959.8 C1538.2 959.8 1541.4 959.8 1544.6 959.8 C1547.8 959.8 1551.0 959.8 1554.2 959.8 C1557.4 959.8 1560.6 959.8 1563.8 959.8 C1567.0 959.8 1570.2 959.8 1573.4 959.8 C1576.6 959.8 1579.9 959.8 1583.1 959.8 C1586.3 959.8 1589.5 959.8 1592.7 959.8 C1595.9 959.8 1599.1 959.8 1602.3 959.8 C1605.5 959.8 1608.7 959.8 1611.9 959.8 C1615.1 959.8 1618.3 959.8 1621.5 959.8 C1624.7 959.8 1628.0 959.8 1631.2 959.8 C1634.4 959.8 1637.6 959.8 1640.8 959.8 C1644.0 959.8 1647.2 958.9 1650.4 957.1 C1653.6 955.3 1656.8 951.3 1660.0 949.1 C1663.2 946.9 1666.4 943.7 1669.6 943.7 C1672.8 943.7 1676.1 944.3 1679.3 944.8 C1682.5 945.3 1685.7 946.7 1688.9 946.7 C1692.1 946.7 1695.3 942.1 1698.5 942.1 C1701.7 942.1 1704.9 945.1 1708.1 945.1 C1711.3 945.1 1714.5 945.1 1717.7 945.1 C1720.9 945.1 1724.2 945.1 1727.4 945.1 C1730.6 945.1 1733.8 947.2 1737.0 947.2 C1740.2 947.2 1743.4 945.1 1746.6 945.1 C1749.8 945.1 1753.0 947.2 1756.2 947.2 C1759.4 947.2 1762.6 942.7 1765.8 942.7 C1769.0 942.7 1772.3 947.2 1775.5 947.2 C1778.7 947.2 1781.9 945.8 1785.1 945.1 C1788.3 944.3 1791.5 942.7 1794.7 942.7 C1797.9 942.7 1801.1 942.7 1804.3 942.7 C1807.5 942.7 1810.7 946.4 1813.9 946.4 C1817.1 946.4 1820.4 946.4 1823.6 946.4 C1826.8 946.4 1830.0 942.7 1833.2 942.7 C1836.4 942.7 1839.6 942.7 1842.8 942.7 C1846.0 942.7 1849.2 942.8 1852.4 943.2 C1855.6 943.6 1858.8 945.1 1862.0 945.1 C1865.2 945.1 1868.5 945.1 1871.7 945.1 C1874.9 945.1 1878.1 942.7 1881.3 942.7 C1884.5 942.7 1887.7 945.1 1890.9 945.1 C1894.1 945.1 1897.3 920.2 1900.5 920.2 C1903.7 920.2 1906.9 921.6 1910.1 923.4 C1913.3 925.2 1916.6 931.2 1919.8 931.2 C1923.0 931.2 1926.2 900.1 1929.4 900.1 C1932.6 900.1 1935.8 900.1 1939.0 900.1 C1942.2 900.1 1945.4 914.9 1948.6 922.3 L1948.6 959.8 L496.0 959.8 Z" fill="#e0654f"/>
<path d="M496.0 950.4 C499.2 945.2 502.4 934.6 505.6 934.6 C508.8 934.6 512.0 935.6 515.2 938.4 C518.4 941.2 521.7 951.5 524.9 951.5 C528.1 951.5 531.3 949.4 534.5 949.4 C537.7 949.4 540.9 950.0 544.1 950.4 C547.3 950.8 550.5 950.5 553.7 951.8 C556.9 953.0 560.1 956.7 563.3 957.9 C566.5 959.2 569.8 959.0 573.0 959.3 C576.2 959.6 579.4 959.8 582.6 959.8 C585.8 959.8 589.0 959.8 592.2 956.1 C595.4 952.3 598.6 855.4 601.8 855.4 C605.0 855.4 608.2 855.4 611.4 864.0 C614.6 872.6 617.9 903.0 621.1 917.8 C624.3 932.6 627.5 950.2 630.7 952.8 C633.9 955.5 637.1 955.5 640.3 955.5 C643.5 955.5 646.7 907.9 649.9 907.9 C653.1 907.9 656.3 932.6 659.5 933.6 C662.7 934.6 666.0 934.2 669.2 934.6 C672.4 935.1 675.6 942.8 678.8 945.6 C682.0 948.5 685.2 951.8 688.4 951.8 C691.6 951.8 694.8 942.4 698.0 937.1 C701.2 931.7 704.4 919.9 707.6 919.9 C710.8 919.9 714.1 942.8 717.3 949.4 C720.5 955.9 723.7 958.7 726.9 959.3 C730.1 959.8 733.3 959.8 736.5 959.8 C739.7 959.8 742.9 959.5 746.1 959.5 C749.3 959.5 752.5 959.5 755.7 959.5 C758.9 959.5 762.2 959.8 765.4 959.8 C768.6 959.8 771.8 959.5 775.0 959.5 C778.2 959.5 781.4 959.5 784.6 959.5 C787.8 959.5 791.0 959.5 794.2 959.5 C797.4 959.5 800.6 959.8 803.8 959.8 C807.0 959.8 810.3 959.5 813.5 959.5 C816.7 959.5 819.9 959.5 823.1 959.5 C826.3 959.5 829.5 959.8 832.7 959.8 C835.9 959.8 839.1 959.8 842.3 959.5 C845.5 959.3 848.7 957.4 851.9 957.4 C855.1 957.4 858.4 959.8 861.6 959.8 C864.8 959.8 868.0 959.8 871.2 959.5 C874.4 959.3 877.6 957.4 880.8 957.4 C884.0 957.4 887.2 959.8 890.4 959.8 C893.6 959.8 896.8 959.8 900.0 959.5 C903.2 959.3 906.5 957.4 909.7 957.4 C912.9 957.4 916.1 959.8 919.3 959.8 C922.5 959.8 925.7 957.4 928.9 957.4 C932.1 957.4 935.3 959.8 938.5 959.8 C941.7 959.8 944.9 959.8 948.1 959.8 C951.3 959.8 954.6 957.4 957.8 957.4 C961.0 957.4 964.2 959.8 967.4 959.8 C970.6 959.8 973.8 959.8 977.0 959.8 C980.2 959.8 983.4 957.4 986.6 957.4 C989.8 957.4 993.0 959.8 996.2 959.8 C999.4 959.8 1002.7 959.8 1005.9 959.8 C1009.1 959.8 1012.3 959.0 1015.5 959.0 C1018.7 959.0 1021.9 959.8 1025.1 959.8 C1028.3 959.8 1031.5 959.8 1034.7 959.8 C1037.9 959.8 1041.1 959.0 1044.3 959.0 C1047.5 959.0 1050.8 959.8 1054.0 959.8 C1057.2 959.8 1060.4 959.0 1063.6 959.0 C1066.8 959.0 1070.0 959.4 1073.2 959.5 C1076.4 959.7 1079.6 959.8 1082.8 959.8 C1086.0 959.8 1089.2 959.8 1092.4 959.8 C1095.6 959.8 1098.9 959.5 1102.1 959.5 C1105.3 959.5 1108.5 959.8 1111.7 959.8 C1114.9 959.8 1118.1 959.0 1121.3 959.0 C1124.5 959.0 1127.7 959.4 1130.9 959.5 C1134.1 959.7 1137.3 959.8 1140.5 959.8 C1143.7 959.8 1147.0 959.8 1150.2 959.8 C1153.4 959.8 1156.6 959.5 1159.8 959.5 C1163.0 959.5 1166.2 959.8 1169.4 959.8 C1172.6 959.8 1175.8 959.0 1179.0 959.0 C1182.2 959.0 1185.4 959.5 1188.6 959.5 C1191.8 959.5 1195.1 959.0 1198.3 959.0 C1201.5 959.0 1204.7 959.8 1207.9 959.8 C1211.1 959.8 1214.3 959.5 1217.5 959.5 C1220.7 959.5 1223.9 959.8 1227.1 959.8 C1230.3 959.8 1233.5 959.8 1236.7 958.5 C1239.9 957.1 1243.2 934.4 1246.4 934.4 C1249.6 934.4 1252.8 950.4 1256.0 950.4 C1259.2 950.4 1262.4 949.0 1265.6 946.7 C1268.8 944.4 1272.0 936.5 1275.2 936.5 C1278.4 936.5 1281.6 940.7 1284.8 943.7 C1288.0 946.8 1291.3 954.7 1294.5 954.7 C1297.7 954.7 1300.9 947.8 1304.1 947.8 C1307.3 947.8 1310.5 953.6 1313.7 953.6 C1316.9 953.6 1320.1 929.6 1323.3 925.0 C1326.5 920.5 1329.7 920.5 1332.9 920.5 C1336.1 920.5 1339.4 926.2 1342.6 930.1 C1345.8 934.0 1349.0 939.8 1352.2 943.7 C1355.4 947.7 1358.6 951.1 1361.8 953.6 C1365.0 956.2 1368.2 959.3 1371.4 959.3 C1374.6 959.3 1377.8 958.6 1381.0 958.5 C1384.2 958.3 1387.5 958.2 1390.7 958.2 C1393.9 958.2 1397.1 959.0 1400.3 959.0 C1403.5 959.0 1406.7 958.6 1409.9 958.2 C1413.1 957.8 1416.3 956.9 1419.5 956.9 C1422.7 956.9 1425.9 959.8 1429.1 959.8 C1432.3 959.8 1435.6 959.8 1438.8 959.8 C1442.0 959.8 1445.2 959.8 1448.4 959.8 C1451.6 959.8 1454.8 959.8 1458.0 959.8 C1461.2 959.8 1464.4 959.8 1467.6 959.8 C1470.8 959.8 1474.0 959.8 1477.2 959.8 C1480.4 959.8 1483.7 959.8 1486.9 959.8 C1490.1 959.8 1493.3 959.8 1496.5 959.8 C1499.7 959.8 1502.9 959.8 1506.1 959.8 C1509.3 959.8 1512.5 959.8 1515.7 959.8 C1518.9 959.8 1522.1 959.8 1525.3 959.8 C1528.5 959.8 1531.8 959.8 1535.0 959.8 C1538.2 959.8 1541.4 959.8 1544.6 959.8 C1547.8 959.8 1551.0 959.8 1554.2 959.8 C1557.4 959.8 1560.6 959.8 1563.8 959.8 C1567.0 959.8 1570.2 959.8 1573.4 959.8 C1576.6 959.8 1579.9 959.8 1583.1 959.8 C1586.3 959.8 1589.5 959.8 1592.7 959.8 C1595.9 959.8 1599.1 959.8 1602.3 959.8 C1605.5 959.8 1608.7 959.8 1611.9 959.8 C1615.1 959.8 1618.3 959.8 1621.5 959.8 C1624.7 959.8 1628.0 959.8 1631.2 959.8 C1634.4 959.8 1637.6 959.8 1640.8 959.8 C1644.0 959.8 1647.2 958.9 1650.4 957.1 C1653.6 955.3 1656.8 951.3 1660.0 949.1 C1663.2 946.9 1666.4 943.7 1669.6 943.7 C1672.8 943.7 1676.1 944.3 1679.3 944.8 C1682.5 945.3 1685.7 946.7 1688.9 946.7 C1692.1 946.7 1695.3 942.1 1698.5 942.1 C1701.7 942.1 1704.9 945.1 1708.1 945.1 C1711.3 945.1 1714.5 945.1 1717.7 945.1 C1720.9 945.1 1724.2 945.1 1727.4 945.1 C1730.6 945.1 1733.8 947.2 1737.0 947.2 C1740.2 947.2 1743.4 945.1 1746.6 945.1 C1749.8 945.1 1753.0 947.2 1756.2 947.2 C1759.4 947.2 1762.6 942.7 1765.8 942.7 C1769.0 942.7 1772.3 947.2 1775.5 947.2 C1778.7 947.2 1781.9 945.8 1785.1 945.1 C1788.3 944.3 1791.5 942.7 1794.7 942.7 C1797.9 942.7 1801.1 942.7 1804.3 942.7 C1807.5 942.7 1810.7 946.4 1813.9 946.4 C1817.1 946.4 1820.4 946.4 1823.6 946.4 C1826.8 946.4 1830.0 942.7 1833.2 942.7 C1836.4 942.7 1839.6 942.7 1842.8 942.7 C1846.0 942.7 1849.2 942.8 1852.4 943.2 C1855.6 943.6 1858.8 945.1 1862.0 945.1 C1865.2 945.1 1868.5 945.1 1871.7 945.1 C1874.9 945.1 1878.1 942.7 1881.3 942.7 C1884.5 942.7 1887.7 945.1 1890.9 945.1 C1894.1 945.1 1897.3 920.2 1900.5 920.2 C1903.7 920.2 1906.9 921.6 1910.1 923.4 C1913.3 925.2 1916.6 931.2 1919.8 931.2 C1923.0 931.2 1926.2 900.1 1929.4 900.1 C1932.6 900.1 1935.8 900.1 1939.0 900.1 C1942.2 900.1 1945.4 914.9 1948.6 922.3" fill="none" stroke="rgba(0,0,0,0.1)" stroke-width="4.8" stroke-linejoin="round"/>
<path d="M496.0 950.4 C499.2 945.2 502.4 934.6 505.6 934.6 C508.8 934.6 512.0 935.6 515.2 938.4 C518.4 941.2 521.7 951.5 524.9 951.5 C528.1 951.5 531.3 949.4 534.5 949.4 C537.7 949.4 540.9 950.0 544.1 950.4 C547.3 950.8 550.5 950.5 553.7 951.8 C556.9 953.0 560.1 956.7 563.3 957.9 C566.5 959.2 569.8 959.0 573.0 959.3 C576.2 959.6 579.4 959.8 582.6 959.8 C585.8 959.8 589.0 959.8 592.2 959.8 C595.4 959.8 598.6 913.0 601.8 905.5 C605.0 898.0 608.2 898.0 611.4 898.0 C614.6 898.0 617.9 914.1 621.1 923.7 C624.3 933.2 627.5 953.6 630.7 955.3 C633.9 956.9 637.1 956.9 640.3 956.9 C643.5 956.9 646.7 909.2 649.9 909.2 C653.1 909.2 656.3 934.7 659.5 936.0 C662.7 937.2 666.0 936.8 669.2 937.3 C672.4 937.8 675.6 944.8 678.8 947.5 C682.0 950.2 685.2 953.6 688.4 953.6 C691.6 953.6 694.8 944.1 698.0 938.9 C701.2 933.8 704.4 922.6 707.6 922.6 C710.8 922.6 714.1 945.1 717.3 951.2 C720.5 957.3 723.7 958.7 726.9 959.3 C730.1 959.8 733.3 959.8 736.5 959.8 C739.7 959.8 742.9 959.8 746.1 959.8 C749.3 959.8 752.5 959.8 755.7 959.8 C758.9 959.8 762.2 959.8 765.4 959.8 C768.6 959.8 771.8 959.8 775.0 959.8 C778.2 959.8 781.4 959.8 784.6 959.8 C787.8 959.8 791.0 959.8 794.2 959.8 C797.4 959.8 800.6 959.8 803.8 959.8 C807.0 959.8 810.3 959.8 813.5 959.8 C816.7 959.8 819.9 959.8 823.1 959.8 C826.3 959.8 829.5 959.8 832.7 959.8 C835.9 959.8 839.1 959.8 842.3 959.8 C845.5 959.8 848.7 959.8 851.9 959.8 C855.1 959.8 858.4 959.8 861.6 959.8 C864.8 959.8 868.0 959.8 871.2 959.8 C874.4 959.8 877.6 959.8 880.8 959.8 C884.0 959.8 887.2 959.8 890.4 959.8 C893.6 959.8 896.8 959.8 900.0 959.8 C903.2 959.8 906.5 959.8 909.7 959.8 C912.9 959.8 916.1 959.8 919.3 959.8 C922.5 959.8 925.7 959.8 928.9 959.8 C932.1 959.8 935.3 959.8 938.5 959.8 C941.7 959.8 944.9 959.8 948.1 959.8 C951.3 959.8 954.6 959.8 957.8 959.8 C961.0 959.8 964.2 959.8 967.4 959.8 C970.6 959.8 973.8 959.8 977.0 959.8 C980.2 959.8 983.4 959.8 986.6 959.8 C989.8 959.8 993.0 959.8 996.2 959.8 C999.4 959.8 1002.7 959.8 1005.9 959.8 C1009.1 959.8 1012.3 959.8 1015.5 959.8 C1018.7 959.8 1021.9 959.8 1025.1 959.8 C1028.3 959.8 1031.5 959.8 1034.7 959.8 C1037.9 959.8 1041.1 959.8 1044.3 959.8 C1047.5 959.8 1050.8 959.8 1054.0 959.8 C1057.2 959.8 1060.4 959.8 1063.6 959.8 C1066.8 959.8 1070.0 959.8 1073.2 959.8 C1076.4 959.8 1079.6 959.8 1082.8 959.8 C1086.0 959.8 1089.2 959.8 1092.4 959.8 C1095.6 959.8 1098.9 959.8 1102.1 959.8 C1105.3 959.8 1108.5 959.8 1111.7 959.8 C1114.9 959.8 1118.1 959.8 1121.3 959.8 C1124.5 959.8 1127.7 959.8 1130.9 959.8 C1134.1 959.8 1137.3 959.8 1140.5 959.8 C1143.7 959.8 1147.0 959.8 1150.2 959.8 C1153.4 959.8 1156.6 959.8 1159.8 959.8 C1163.0 959.8 1166.2 959.8 1169.4 959.8 C1172.6 959.8 1175.8 959.8 1179.0 959.8 C1182.2 959.8 1185.4 959.8 1188.6 959.8 C1191.8 959.8 1195.1 959.8 1198.3 959.8 C1201.5 959.8 1204.7 959.8 1207.9 959.8 C1211.1 959.8 1214.3 959.8 1217.5 959.8 C1220.7 959.8 1223.9 959.8 1227.1 959.8 C1230.3 959.8 1233.5 959.8 1236.7 958.5 C1239.9 957.1 1243.2 934.4 1246.4 934.4 C1249.6 934.4 1252.8 951.0 1256.0 951.0 C1259.2 951.0 1262.4 949.1 1265.6 946.7 C1268.8 944.3 1272.0 936.5 1275.2 936.5 C1278.4 936.5 1281.6 940.7 1284.8 943.7 C1288.0 946.8 1291.3 954.7 1294.5 954.7 C1297.7 954.7 1300.9 947.8 1304.1 947.8 C1307.3 947.8 1310.5 953.6 1313.7 953.6 C1316.9 953.6 1320.1 929.6 1323.3 925.0 C1326.5 920.5 1329.7 920.5 1332.9 920.5 C1336.1 920.5 1339.4 926.2 1342.6 930.1 C1345.8 934.0 1349.0 939.8 1352.2 943.7 C1355.4 947.7 1358.6 951.1 1361.8 953.6 C1365.0 956.2 1368.2 959.3 1371.4 959.3 C1374.6 959.3 1377.8 959.2 1381.0 959.0 C1384.2 958.8 1387.5 958.2 1390.7 958.2 C1393.9 958.2 1397.1 959.0 1400.3 959.0 C1403.5 959.0 1406.7 958.6 1409.9 958.2 C1413.1 957.8 1416.3 956.9 1419.5 956.9 C1422.7 956.9 1425.9 959.8 1429.1 959.8 C1432.3 959.8 1435.6 959.8 1438.8 959.8 C1442.0 959.8 1445.2 959.8 1448.4 959.8 C1451.6 959.8 1454.8 959.8 1458.0 959.8 C1461.2 959.8 1464.4 959.8 1467.6 959.8 C1470.8 959.8 1474.0 959.8 1477.2 959.8 C1480.4 959.8 1483.7 959.8 1486.9 959.8 C1490.1 959.8 1493.3 959.8 1496.5 959.8 C1499.7 959.8 1502.9 959.8 1506.1 959.8 C1509.3 959.8 1512.5 959.8 1515.7 959.8 C1518.9 959.8 1522.1 959.8 1525.3 959.8 C1528.5 959.8 1531.8 959.8 1535.0 959.8 C1538.2 959.8 1541.4 959.8 1544.6 959.8 C1547.8 959.8 1551.0 959.8 1554.2 959.8 C1557.4 959.8 1560.6 959.8 1563.8 959.8 C1567.0 959.8 1570.2 959.8 1573.4 959.8 C1576.6 959.8 1579.9 959.8 1583.1 959.8 C1586.3 959.8 1589.5 959.8 1592.7 959.8 C1595.9 959.8 1599.1 959.8 1602.3 959.8 C1605.5 959.8 1608.7 959.8 1611.9 959.8 C1615.1 959.8 1618.3 959.8 1621.5 959.8 C1624.7 959.8 1628.0 959.8 1631.2 959.8 C1634.4 959.8 1637.6 959.8 1640.8 959.8 C1644.0 959.8 1647.2 958.9 1650.4 957.1 C1653.6 955.3 1656.8 951.3 1660.0 949.1 C1663.2 946.9 1666.4 943.7 1669.6 943.7 C1672.8 943.7 1676.1 945.0 1679.3 945.6 C1682.5 946.2 1685.7 947.5 1688.9 947.5 C1692.1 947.5 1695.3 942.9 1698.5 942.9 C1701.7 942.9 1704.9 945.9 1708.1 945.9 C1711.3 945.9 1714.5 945.9 1717.7 945.9 C1720.9 945.9 1724.2 945.9 1727.4 945.9 C1730.6 945.9 1733.8 948.0 1737.0 948.0 C1740.2 948.0 1743.4 945.9 1746.6 945.9 C1749.8 945.9 1753.0 948.0 1756.2 948.0 C1759.4 948.0 1762.6 943.5 1765.8 943.5 C1769.0 943.5 1772.3 948.0 1775.5 948.0 C1778.7 948.0 1781.9 946.6 1785.1 945.9 C1788.3 945.1 1791.5 943.5 1794.7 943.5 C1797.9 943.5 1801.1 943.5 1804.3 943.5 C1807.5 943.5 1810.7 947.2 1813.9 947.2 C1817.1 947.2 1820.4 947.2 1823.6 947.2 C1826.8 947.2 1830.0 943.5 1833.2 943.5 C1836.4 943.5 1839.6 943.5 1842.8 943.5 C1846.0 943.5 1849.2 943.2 1852.4 943.2 C1855.6 943.2 1858.8 945.9 1862.0 945.9 C1865.2 945.9 1868.5 945.9 1871.7 945.9 C1874.9 945.9 1878.1 943.5 1881.3 943.5 C1884.5 943.5 1887.7 945.9 1890.9 945.9 C1894.1 945.9 1897.3 920.2 1900.5 920.2 C1903.7 920.2 1906.9 921.6 1910.1 923.4 C1913.3 925.2 1916.6 931.2 1919.8 931.2 C1923.0 931.2 1926.2 900.1 1929.4 900.1 C1932.6 900.1 1935.8 900.1 1939.0 900.1 C1942.2 900.1 1945.4 914.9 1948.6 922.3 L1948.6 959.8 L496.0 959.8 Z" fill="#0088b1"/>
<path d="M496.0 950.4 C499.2 945.2 502.4 934.6 505.6 934.6 C508.8 934.6 512.0 935.6 515.2 938.4 C518.4 941.2 521.7 951.5 524.9 951.5 C528.1 951.5 531.3 949.4 534.5 949.4 C537.7 949.4 540.9 950.0 544.1 950.4 C547.3 950.8 550.5 950.5 553.7 951.8 C556.9 953.0 560.1 956.7 563.3 957.9 C566.5 959.2 569.8 959.0 573.0 959.3 C576.2 959.6 579.4 959.8 582.6 959.8 C585.8 959.8 589.0 959.8 592.2 959.8 C595.4 959.8 598.6 913.0 601.8 905.5 C605.0 898.0 608.2 898.0 611.4 898.0 C614.6 898.0 617.9 914.1 621.1 923.7 C624.3 933.2 627.5 953.6 630.7 955.3 C633.9 956.9 637.1 956.9 640.3 956.9 C643.5 956.9 646.7 909.2 649.9 909.2 C653.1 909.2 656.3 934.7 659.5 936.0 C662.7 937.2 666.0 936.8 669.2 937.3 C672.4 937.8 675.6 944.8 678.8 947.5 C682.0 950.2 685.2 953.6 688.4 953.6 C691.6 953.6 694.8 944.1 698.0 938.9 C701.2 933.8 704.4 922.6 707.6 922.6 C710.8 922.6 714.1 945.1 717.3 951.2 C720.5 957.3 723.7 958.7 726.9 959.3 C730.1 959.8 733.3 959.8 736.5 959.8 C739.7 959.8 742.9 959.8 746.1 959.8 C749.3 959.8 752.5 959.8 755.7 959.8 C758.9 959.8 762.2 959.8 765.4 959.8 C768.6 959.8 771.8 959.8 775.0 959.8 C778.2 959.8 781.4 959.8 784.6 959.8 C787.8 959.8 791.0 959.8 794.2 959.8 C797.4 959.8 800.6 959.8 803.8 959.8 C807.0 959.8 810.3 959.8 813.5 959.8 C816.7 959.8 819.9 959.8 823.1 959.8 C826.3 959.8 829.5 959.8 832.7 959.8 C835.9 959.8 839.1 959.8 842.3 959.8 C845.5 959.8 848.7 959.8 851.9 959.8 C855.1 959.8 858.4 959.8 861.6 959.8 C864.8 959.8 868.0 959.8 871.2 959.8 C874.4 959.8 877.6 959.8 880.8 959.8 C884.0 959.8 887.2 959.8 890.4 959.8 C893.6 959.8 896.8 959.8 900.0 959.8 C903.2 959.8 906.5 959.8 909.7 959.8 C912.9 959.8 916.1 959.8 919.3 959.8 C922.5 959.8 925.7 959.8 928.9 959.8 C932.1 959.8 935.3 959.8 938.5 959.8 C941.7 959.8 944.9 959.8 948.1 959.8 C951.3 959.8 954.6 959.8 957.8 959.8 C961.0 959.8 964.2 959.8 967.4 959.8 C970.6 959.8 973.8 959.8 977.0 959.8 C980.2 959.8 983.4 959.8 986.6 959.8 C989.8 959.8 993.0 959.8 996.2 959.8 C999.4 959.8 1002.7 959.8 1005.9 959.8 C1009.1 959.8 1012.3 959.8 1015.5 959.8 C1018.7 959.8 1021.9 959.8 1025.1 959.8 C1028.3 959.8 1031.5 959.8 1034.7 959.8 C1037.9 959.8 1041.1 959.8 1044.3 959.8 C1047.5 959.8 1050.8 959.8 1054.0 959.8 C1057.2 959.8 1060.4 959.8 1063.6 959.8 C1066.8 959.8 1070.0 959.8 1073.2 959.8 C1076.4 959.8 1079.6 959.8 1082.8 959.8 C1086.0 959.8 1089.2 959.8 1092.4 959.8 C1095.6 959.8 1098.9 959.8 1102.1 959.8 C1105.3 959.8 1108.5 959.8 1111.7 959.8 C1114.9 959.8 1118.1 959.8 1121.3 959.8 C1124.5 959.8 1127.7 959.8 1130.9 959.8 C1134.1 959.8 1137.3 959.8 1140.5 959.8 C1143.7 959.8 1147.0 959.8 1150.2 959.8 C1153.4 959.8 1156.6 959.8 1159.8 959.8 C1163.0 959.8 1166.2 959.8 1169.4 959.8 C1172.6 959.8 1175.8 959.8 1179.0 959.8 C1182.2 959.8 1185.4 959.8 1188.6 959.8 C1191.8 959.8 1195.1 959.8 1198.3 959.8 C1201.5 959.8 1204.7 959.8 1207.9 959.8 C1211.1 959.8 1214.3 959.8 1217.5 959.8 C1220.7 959.8 1223.9 959.8 1227.1 959.8 C1230.3 959.8 1233.5 959.8 1236.7 958.5 C1239.9 957.1 1243.2 934.4 1246.4 934.4 C1249.6 934.4 1252.8 951.0 1256.0 951.0 C1259.2 951.0 1262.4 949.1 1265.6 946.7 C1268.8 944.3 1272.0 936.5 1275.2 936.5 C1278.4 936.5 1281.6 940.7 1284.8 943.7 C1288.0 946.8 1291.3 954.7 1294.5 954.7 C1297.7 954.7 1300.9 947.8 1304.1 947.8 C1307.3 947.8 1310.5 953.6 1313.7 953.6 C1316.9 953.6 1320.1 929.6 1323.3 925.0 C1326.5 920.5 1329.7 920.5 1332.9 920.5 C1336.1 920.5 1339.4 926.2 1342.6 930.1 C1345.8 934.0 1349.0 939.8 1352.2 943.7 C1355.4 947.7 1358.6 951.1 1361.8 953.6 C1365.0 956.2 1368.2 959.3 1371.4 959.3 C1374.6 959.3 1377.8 959.2 1381.0 959.0 C1384.2 958.8 1387.5 958.2 1390.7 958.2 C1393.9 958.2 1397.1 959.0 1400.3 959.0 C1403.5 959.0 1406.7 958.6 1409.9 958.2 C1413.1 957.8 1416.3 956.9 1419.5 956.9 C1422.7 956.9 1425.9 959.8 1429.1 959.8 C1432.3 959.8 1435.6 959.8 1438.8 959.8 C1442.0 959.8 1445.2 959.8 1448.4 959.8 C1451.6 959.8 1454.8 959.8 1458.0 959.8 C1461.2 959.8 1464.4 959.8 1467.6 959.8 C1470.8 959.8 1474.0 959.8 1477.2 959.8 C1480.4 959.8 1483.7 959.8 1486.9 959.8 C1490.1 959.8 1493.3 959.8 1496.5 959.8 C1499.7 959.8 1502.9 959.8 1506.1 959.8 C1509.3 959.8 1512.5 959.8 1515.7 959.8 C1518.9 959.8 1522.1 959.8 1525.3 959.8 C1528.5 959.8 1531.8 959.8 1535.0 959.8 C1538.2 959.8 1541.4 959.8 1544.6 959.8 C1547.8 959.8 1551.0 959.8 1554.2 959.8 C1557.4 959.8 1560.6 959.8 1563.8 959.8 C1567.0 959.8 1570.2 959.8 1573.4 959.8 C1576.6 959.8 1579.9 959.8 1583.1 959.8 C1586.3 959.8 1589.5 959.8 1592.7 959.8 C1595.9 959.8 1599.1 959.8 1602.3 959.8 C1605.5 959.8 1608.7 959.8 1611.9 959.8 C1615.1 959.8 1618.3 959.8 1621.5 959.8 C1624.7 959.8 1628.0 959.8 1631.2 959.8 C1634.4 959.8 1637.6 959.8 1640.8 959.8 C1644.0 959.8 1647.2 958.9 1650.4 957.1 C1653.6 955.3 1656.8 951.3 1660.0 949.1 C1663.2 946.9 1666.4 943.7 1669.6 943.7 C1672.8 943.7 1676.1 945.0 1679.3 945.6 C1682.5 946.2 1685.7 947.5 1688.9 947.5 C1692.1 947.5 1695.3 942.9 1698.5 942.9 C1701.7 942.9 1704.9 945.9 1708.1 945.9 C1711.3 945.9 1714.5 945.9 1717.7 945.9 C1720.9 945.9 1724.2 945.9 1727.4 945.9 C1730.6 945.9 1733.8 948.0 1737.0 948.0 C1740.2 948.0 1743.4 945.9 1746.6 945.9 C1749.8 945.9 1753.0 948.0 1756.2 948.0 C1759.4 948.0 1762.6 943.5 1765.8 943.5 C1769.0 943.5 1772.3 948.0 1775.5 948.0 C1778.7 948.0 1781.9 946.6 1785.1 945.9 C1788.3 945.1 1791.5 943.5 1794.7 943.5 C1797.9 943.5 1801.1 943.5 1804.3 943.5 C1807.5 943.5 1810.7 947.2 1813.9 947.2 C1817.1 947.2 1820.4 947.2 1823.6 947.2 C1826.8 947.2 1830.0 943.5 1833.2 943.5 C1836.4 943.5 1839.6 943.5 1842.8 943.5 C1846.0 943.5 1849.2 943.2 1852.4 943.2 C1855.6 943.2 1858.8 945.9 1862.0 945.9 C1865.2 945.9 1868.5 945.9 1871.7 945.9 C1874.9 945.9 1878.1 943.5 1881.3 943.5 C1884.5 943.5 1887.7 945.9 1890.9 945.9 C1894.1 945.9 1897.3 920.2 1900.5 920.2 C1903.7 920.2 1906.9 921.6 1910.1 923.4 C1913.3 925.2 1916.6 931.2 1919.8 931.2 C1923.0 931.2 1926.2 900.1 1929.4 900.1 C1932.6 900.1 1935.8 900.1 1939.0 900.1 C1942.2 900.1 1945.4 914.9 1948.6 922.3" fill="none" stroke="rgba(0,0,0,0.1)" stroke-width="4.8" stroke-linejoin="round"/>
 <!-- donuts -->
 <g>
  <path d="M697.8 1140.8 A131.5 131.5 0 1 1 609.2 1175.1 L651.8 1221.9 A68.3 68.3 0 1 0 697.8 1204 Z" fill="#0088b1"/>
  <path d="M609.2 1175.1 A131.5 131.5 0 0 1 697.8 1140.8 V1204 A68.3 68.3 0 0 0 651.8 1221.9 Z" fill="#e0654f"/>
  <path d="M697.8 1140 V1205 M608.6 1174.5 L652.4 1222.5" stroke="#fff" stroke-width="3.2"/>
  <path d="M1499 1140.4 A131.4 131.4 0 1 1 1431.3 1384.4 L1463.8 1330.3 A68.3 68.3 0 1 0 1499 1203.5 Z" fill="#e0654f"/>
  <path d="M1431.3 1384.4 A131.4 131.4 0 0 1 1499 1140.4 V1203.5 A68.3 68.3 0 0 0 1463.8 1330.3 Z" fill="#0088b1"/>
  <path d="M1499 1139.5 V1204.5 M1431 1385 L1464.3 1329.5" stroke="#fff" stroke-width="3.2"/>
  <rect x="972.5" y="1152" width="64" height="19" fill="#0088b1"/>
  <rect x="972.5" y="1187" width="64" height="19" fill="#e0654f"/>
  <rect x="1766.5" y="1152" width="63.5" height="19" fill="#e0654f"/>
  <rect x="1766.5" y="1187" width="63.5" height="19" fill="#0088b1"/>
 </g>
</svg>
<!-- axis labels -->
<div id="axes"></div>
<div class="t ax" style="left:448.5px;top:380.3px;">800</div>
<div class="t ax" style="left:448.5px;top:422.3px;">600</div>
<div class="t ax" style="left:448.5px;top:464.3px;">400</div>
<div class="t ax" style="left:448.5px;top:506.3px;">200</div>
<div class="t ax" style="left:469.5px;top:548.3px;">0</div>
<div class="t ax" style="left:448.5px;top:736px;">800</div>
<div class="t ax" style="left:448.5px;top:789.5px;">600</div>
<div class="t ax" style="left:448.5px;top:843px;">400</div>
<div class="t ax" style="left:448.5px;top:896.6px;">200</div>
<div class="t ax" style="left:469.5px;top:950.1px;">0</div>
<div class="t ax" style="left:519.2px;top:574.3px;width:80px;text-align:center;">08:00</div>
<div class="t ax" style="left:519.2px;top:976.4px;width:80px;text-align:center;">08:00</div>
<div class="t ax" style="left:634.6px;top:574.3px;width:80px;text-align:center;">10:00</div>
<div class="t ax" style="left:634.6px;top:976.4px;width:80px;text-align:center;">10:00</div>
<div class="t ax" style="left:750.1px;top:574.3px;width:80px;text-align:center;">12:00</div>
<div class="t ax" style="left:750.1px;top:976.4px;width:80px;text-align:center;">12:00</div>
<div class="t ax" style="left:865.5px;top:574.3px;width:80px;text-align:center;">14:00</div>
<div class="t ax" style="left:865.5px;top:976.4px;width:80px;text-align:center;">14:00</div>
<div class="t ax" style="left:981.0px;top:574.3px;width:80px;text-align:center;">16:00</div>
<div class="t ax" style="left:981.0px;top:976.4px;width:80px;text-align:center;">16:00</div>
<div class="t ax" style="left:1096.4px;top:574.3px;width:80px;text-align:center;">18:00</div>
<div class="t ax" style="left:1096.4px;top:976.4px;width:80px;text-align:center;">18:00</div>
<div class="t ax" style="left:1211.8px;top:574.3px;width:80px;text-align:center;">20:00</div>
<div class="t ax" style="left:1211.8px;top:976.4px;width:80px;text-align:center;">20:00</div>
<div class="t ax" style="left:1327.3px;top:574.3px;width:80px;text-align:center;">22:00</div>
<div class="t ax" style="left:1327.3px;top:976.4px;width:80px;text-align:center;">22:00</div>
<div class="t ax" style="left:1442.7px;top:574.3px;width:80px;text-align:center;">00:00</div>
<div class="t ax" style="left:1442.7px;top:976.4px;width:80px;text-align:center;">00:00</div>
<div class="t ax" style="left:1558.2px;top:574.3px;width:80px;text-align:center;">02:00</div>
<div class="t ax" style="left:1558.2px;top:976.4px;width:80px;text-align:center;">02:00</div>
<div class="t ax" style="left:1673.6px;top:574.3px;width:80px;text-align:center;">04:00</div>
<div class="t ax" style="left:1673.6px;top:976.4px;width:80px;text-align:center;">04:00</div>
<div class="t ax" style="left:1789.0px;top:574.3px;width:80px;text-align:center;">06:00</div>
<div class="t ax" style="left:1789.0px;top:976.4px;width:80px;text-align:center;">06:00</div>
<div class="t ax" style="left:1904.5px;top:574.3px;width:80px;text-align:center;">08:00</div>
<div class="t ax" style="left:1904.5px;top:976.4px;width:80px;text-align:center;">08:00</div>
<div class="t leg" style="left:1045.5px;top:1151.5px;">A (IPv4)</div>
<div class="t leg" style="left:1045.5px;top:1186.5px;">AAAA (IPv6)</div>
<div class="t leg" style="left:1840px;top:1151.5px;">local</div>
<div class="t leg" style="left:1840px;top:1186.5px;">192.168.178.1</div>
</body></html>
